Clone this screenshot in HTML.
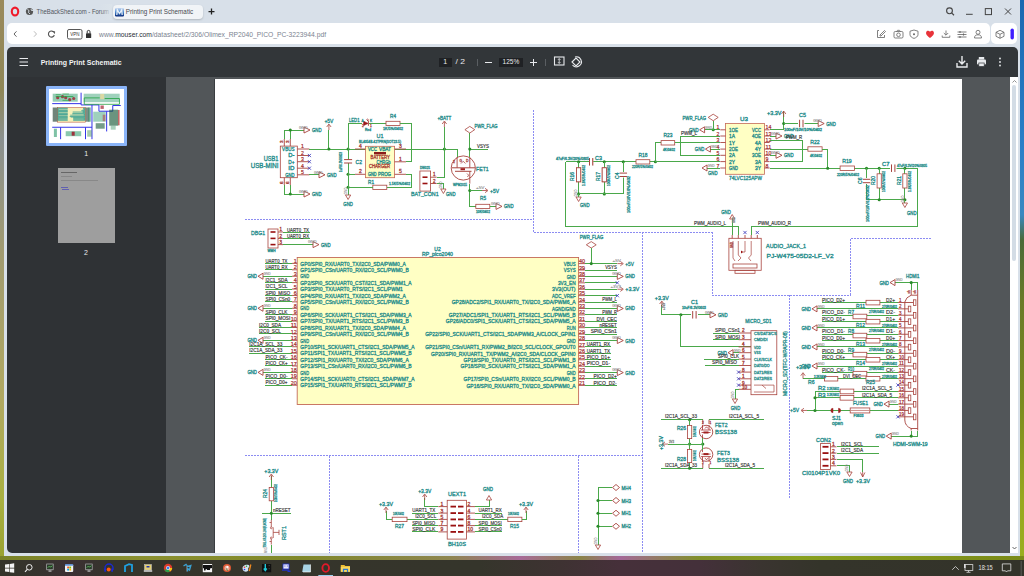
<!DOCTYPE html>
<html><head><meta charset="utf-8">
<style>
*{margin:0;padding:0;box-sizing:border-box}
html,body{width:1024px;height:576px;overflow:hidden;background:#6f7a3a;font-family:"Liberation Sans",sans-serif}
svg{font-family:"Liberation Sans",sans-serif}
.a{position:absolute}
#deskL{left:0;top:0;width:4px;height:560px;background:linear-gradient(180deg,#9a8a5c 0,#8e8656 90px,#8a9090 140px,#a09a70 250px,#b0a860 400px,#a8b040 500px,#98a030 560px)}
#deskR{left:1020px;top:0;width:4px;height:560px;background:linear-gradient(180deg,#1a68b0 0,#2a80c8 150px,#3a88c0 215px,#4a6a38 240px,#6a7a28 300px,#7a8a20 400px,#98a820 500px,#9aae20 560px)}
#deskB{left:0;top:556px;width:1024px;height:4px;background:linear-gradient(90deg,#7a8228 0,#8a9030 150px,#80882a 300px,#8e8650 450px,#a86a98 520px,#8a8448 580px,#a46898 620px,#80902a 700px,#88a020 800px,#7a8a18 1024px)}
#win{left:4px;top:0;width:1016px;height:556px;background:#d8e0e9}
#addr{left:7px;top:23.3px;width:983px;height:21.2px;background:#fff;border-radius:5px}
#ext{left:991px;top:23.3px;width:26px;height:21.2px;background:#fff;border-radius:5px}
#tb{left:7px;top:47px;width:1011px;height:30px;background:#323639;border-radius:5px 5px 0 0}
#side{left:7px;top:77px;width:159px;height:476px;background:#2f3235;border-radius:0 0 0 5px}
#grey{left:166px;top:77px;width:844px;height:476px;background:#525659}
#sb{left:1010px;top:77px;width:8px;height:476px;background:#fff}
#thumb{left:1012px;top:85px;width:4px;height:176px;background:#d3dce5;border-radius:2px}
#page{left:214px;top:79px;width:748px;height:474px;background:#fff;border-left:1px solid #3a3d40}
#task{left:0;top:560px;width:1024px;height:16px;background:linear-gradient(90deg,#34342a 0,#36332e 40px,#3c3034 70px,#35342b 110px,#35352b 480px,#3e3232 560px,#46303a 620px,#44303a 700px,#3a3430 760px,#34342a 820px,#33332a 1024px)}
.t{position:absolute;white-space:nowrap;line-height:1}
#tab{left:113px;top:5px;width:90px;height:14px;background:#f1f4f7;border-radius:4px;box-shadow:0 1px 2px rgba(0,0,0,.18)}
</style></head><body>
<div id="deskL" class="a"></div>
<div id="deskR" class="a"></div>
<div id="deskB" class="a"></div>
<div id="win" class="a"></div>
<!-- tab bar -->
<svg class="a" style="left:0;top:0" width="240" height="24">
  <ellipse cx="15" cy="11.5" rx="3.2" ry="3.9" fill="none" stroke="#f01a2a" stroke-width="2.1"/>
  <circle cx="29.5" cy="11.5" r="3.6" fill="#555"/>
  <path d="M27.5 9.5 l1.5 1 l-0.5 2 l1.5 1.5 M31 9 l0.5 1.5 l1.5 0" stroke="#dbe3ea" stroke-width="0.9" fill="none"/>
</svg>
<svg class="a" style="left:0;top:0" width="240" height="24"><text x="36.6" y="14.2" font-size="7.9" fill="#50555c" textLength="72.4" lengthAdjust="spacingAndGlyphs">TheBackShed.com - Forum</text></svg>
<div class="a" style="left:100px;top:4px;width:12px;height:16px;background:linear-gradient(90deg,rgba(219,227,234,0),#dbe3ea)"></div>
<div id="tab" class="a"></div>
<svg class="a" style="left:115px;top:7.5px" width="9" height="9"><defs><linearGradient id="fg" x1="0" y1="0" x2="0" y2="1"><stop offset="0" stop-color="#c8d8f0"/><stop offset="0.5" stop-color="#4a8ad0"/><stop offset="1" stop-color="#0a2a78"/></linearGradient></defs><rect x="0" y="0" width="9" height="8.4" rx="1.2" fill="url(#fg)"/><path d="M1.8 7 L2.3 1.8 L4.5 5.5 L6.7 1.8 L7.2 7" stroke="#fff" stroke-width="1.3" fill="none" opacity="0.85"/></svg>
<svg class="a" style="left:0;top:0" width="240" height="24"><text x="125.8" y="14" font-size="7.9" fill="#454a50" textLength="67.4" lengthAdjust="spacingAndGlyphs">Printing Print Schematic</text></svg>
<svg class="a" style="left:0;top:0" width="240" height="24"><path d="M208.5 11.6 H214.5 M211.5 8.6 V14.6" stroke="#222" stroke-width="1.3"/></svg>
<svg class="a" style="left:940px;top:0" width="80" height="24">
  <circle cx="9.5" cy="10.8" r="2.9" fill="none" stroke="#444" stroke-width="1.1"/>
  <path d="M11.6 12.9 L14 15.2" stroke="#444" stroke-width="1.2"/>
  <path d="M26 14.3 H32.7" stroke="#444" stroke-width="1"/>
  <rect x="45.3" y="8.6" width="6.2" height="6" fill="none" stroke="#444" stroke-width="1"/>
  <path d="M65 8.5 L71 14.5 M71 8.5 L65 14.5" stroke="#444" stroke-width="1"/>
</svg>
<!-- address bar -->
<div id="addr" class="a"></div>
<div id="ext" class="a"></div>
<svg class="a" style="left:0;top:24px" width="100" height="20">
  <path d="M16.5 7.3 L14 10 L16.5 12.7" stroke="#666" stroke-width="1" fill="none"/>
  <path d="M34 7.3 L36.5 10 L34 12.7" stroke="#bbb" stroke-width="1" fill="none"/>
  <path d="M54 8.5 A3 3 0 1 0 54.3 11" stroke="#555" stroke-width="1.1" fill="none"/>
  <path d="M52.5 7.5 L54.6 7.6 L54.5 9.6" stroke="#555" stroke-width="1" fill="none"/>
  <rect x="67.5" y="5.5" width="14.5" height="9.5" rx="1.5" fill="none" stroke="#444" stroke-width="0.9"/>
  <rect x="86" y="9.2" width="5.2" height="4.8" rx="0.6" fill="#333"/>
  <path d="M87.2 9.4 V7.8 A1.4 1.4 0 0 1 90 7.8 V9.4" stroke="#333" stroke-width="1" fill="none"/>
</svg>
<svg class="a" style="left:0;top:24px" width="100" height="20"><text x="70.2" y="12" font-size="5.6" fill="#333" textLength="9.2" lengthAdjust="spacingAndGlyphs">VPN</text></svg>
<svg class="a" style="left:0;top:24px" width="400" height="20"><text x="99.1" y="12.5" font-size="7.3" fill="#7b8390" textLength="227" lengthAdjust="spacingAndGlyphs">www.<tspan fill="#2a2f36">mouser.com</tspan>/datasheet/2/306/Olimex_RP2040_PICO_PC-3223944.pdf</text></svg>
<svg class="a" style="left:870px;top:24px" width="150" height="20">
  <g stroke="#6a6a6a" stroke-width="0.85" fill="none">
    <path d="M9 6.5 H7.5 V13.5 H14.5 V11"/><path d="M10 11 L14.5 6.5 L15.5 7.5 L11 12 H10Z"/>
    <rect x="24" y="7.5" width="9" height="6.5" rx="1.2"/><circle cx="28.5" cy="10.8" r="1.8"/><path d="M26.5 7.5 L27.5 6.3 H29.5 L30.5 7.5"/>
    <path d="M44 6 L48 7.2 V10.5 C48 12.5 46 13.8 44 14.4 C42 13.8 40 12.5 40 10.5 V7.2Z"/>
    <path d="M76 6.5 V11 M73.8 9 L76 11.2 L78.2 9 M72.2 11.5 V13.3 H79.8 V11.5"/>
    <path d="M87.5 8 H96.5 M87.5 10.5 H96.5 M87.5 13 H96.5"/>
    <circle cx="108" cy="8.3" r="2"/><path d="M104.5 14 C104.5 11.5 106 10.8 108 10.8 C110 10.8 111.5 11.5 111.5 14 Z"/>
    <path d="M130 6.3 L134 8.3 V12.3 L130 14.3 L126 12.3 V8.3Z M126 8.3 L130 10.3 L134 8.3 M130 10.3 V14.3"/>
  </g>
  <circle cx="44" cy="10.2" r="1" fill="#666"/>
  <path d="M90 7 V9 M93.5 9.5 V11.5 M90 12 V14" stroke="#666" stroke-width="1.1"/>
  <path d="M60 14 C56 11 55.8 9.5 56.2 8.2 C56.8 6.6 58.8 6.3 60 7.8 C61.2 6.3 63.2 6.6 63.8 8.2 C64.2 9.5 64 11 60 14Z" fill="#e8333a"/>
  <rect x="140.5" y="4.5" width="3.4" height="11" rx="1.7" fill="#3f1fff"/>
</svg>
<!-- toolbar -->
<div id="tb" class="a"></div>
<svg class="a" style="left:0;top:47px" width="140" height="30">
  <path d="M19.5 11.5 H28 M19.5 15 H28 M19.5 18.5 H28" stroke="#e8eaed" stroke-width="1.2"/>
</svg>
<svg class="a" style="left:0;top:47px" width="200" height="30"><text x="40.7" y="17.5" font-size="7.6" font-weight="bold" fill="#f1f3f4" textLength="81" lengthAdjust="spacingAndGlyphs">Printing Print Schematic</text></svg>
<div class="a" style="left:439px;top:58px;width:13px;height:9px;background:#1f2124"></div>


<div class="a" style="left:477px;top:58.5px;width:1px;height:7px;background:#5a5e62"></div>
<div class="a" style="left:485px;top:62px;width:7px;height:1.2px;background:#e8eaed"></div>
<div class="a" style="left:499px;top:58px;width:24px;height:9px;background:#1f2124"></div>

<div class="a" style="left:529.5px;top:62px;width:7.5px;height:1.2px;background:#e8eaed"></div>
<div class="a" style="left:532.6px;top:58.6px;width:1.2px;height:7.8px;background:#e8eaed"></div>
<div class="a" style="left:544.5px;top:58.5px;width:1px;height:7px;background:#5a5e62"></div>
<svg class="a" style="left:400px;top:47px" width="200" height="30"><text x="43.3" y="17.3" font-size="7" fill="#e8eaed">1</text><text x="55.5" y="17.3" font-size="7" fill="#e8eaed" textLength="9.5" lengthAdjust="spacingAndGlyphs">/ 2</text><text x="102.6" y="17.3" font-size="6.6" fill="#e8eaed" textLength="16.7" lengthAdjust="spacingAndGlyphs">125%</text></svg>
<svg class="a" style="left:550px;top:53px" width="40" height="20">
  <rect x="4.5" y="4" width="9.5" height="8" fill="none" stroke="#e8eaed" stroke-width="1.1"/>
  <path d="M9.2 5.6 V10.4 M8 6.8 L9.2 5.6 L10.4 6.8 M8 9.2 L9.2 10.4 L10.4 9.2" stroke="#e8eaed" stroke-width="0.8" fill="none"/>
  <path d="M22 9 L26 5 L30 9 L26 13Z" fill="none" stroke="#e8eaed" stroke-width="1.1"/>
  <path d="M25 4 A5 5 0 1 1 22.5 12" fill="none" stroke="#e8eaed" stroke-width="1.1"/>
</svg>
<svg class="a" style="left:950px;top:47px" width="60" height="30">
  <path d="M12 9 V17 M8.8 13.8 L12 17 L15.2 13.8 M7 16 V20 H17 V16" stroke="#e8eaed" stroke-width="1.4" fill="none"/>
  <rect x="27" y="12.5" width="9" height="5" rx="1" fill="#e8eaed"/>
  <rect x="28.8" y="10" width="5.4" height="2.5" fill="#e8eaed"/>
  <rect x="28.8" y="16" width="5.4" height="3.5" fill="#e8eaed" stroke="#323639" stroke-width="0.7"/>
  <circle cx="50" cy="11.5" r="0.9" fill="#e8eaed"/><circle cx="50" cy="15" r="0.9" fill="#e8eaed"/><circle cx="50" cy="18.5" r="0.9" fill="#e8eaed"/>
</svg>
<!-- sidebar -->
<div id="side" class="a"></div>
<div class="a" style="left:46px;top:86px;width:81px;height:60px;background:#8ab4f8;border-radius:1px"></div>
<div class="a" style="left:49px;top:89px;width:75px;height:54px;background:#fff"></div>
<svg id="th1" class="a" style="left:49px;top:89px" width="75" height="54"><rect x="8.42" y="18.45" width="28.14" height="14.70" fill="#f6f0b8" opacity="1"/>
<rect x="8.42" y="18.45" width="28.14" height="14.70" fill="none" stroke="#c0604a" stroke-width="0.6"/>
<path d="M8.70 19.16 L18.70 19.16" stroke="#2a9a90" stroke-width="0.7"/>
<path d="M8.70 19.80 L18.70 19.80" stroke="#2a9a90" stroke-width="0.7"/>
<path d="M8.70 20.44 L9.70 20.44" stroke="#2a9a90" stroke-width="0.7"/>
<path d="M8.70 21.08 L18.70 21.08" stroke="#2a9a90" stroke-width="0.7"/>
<path d="M8.70 21.72 L18.70 21.72" stroke="#2a9a90" stroke-width="0.7"/>
<path d="M8.70 22.36 L18.70 22.36" stroke="#2a9a90" stroke-width="0.7"/>
<path d="M8.70 22.99 L18.70 22.99" stroke="#2a9a90" stroke-width="0.7"/>
<path d="M8.70 23.63 L9.70 23.63" stroke="#2a9a90" stroke-width="0.7"/>
<path d="M8.70 24.27 L18.70 24.27" stroke="#2a9a90" stroke-width="0.7"/>
<path d="M8.70 24.91 L18.70 24.91" stroke="#2a9a90" stroke-width="0.7"/>
<path d="M8.70 25.55 L18.70 25.55" stroke="#2a9a90" stroke-width="0.7"/>
<path d="M8.70 26.19 L18.70 26.19" stroke="#2a9a90" stroke-width="0.7"/>
<path d="M8.70 26.83 L9.70 26.83" stroke="#2a9a90" stroke-width="0.7"/>
<path d="M8.70 27.47 L18.70 27.47" stroke="#2a9a90" stroke-width="0.7"/>
<path d="M8.70 28.11 L18.70 28.11" stroke="#2a9a90" stroke-width="0.7"/>
<path d="M8.70 28.75 L18.70 28.75" stroke="#2a9a90" stroke-width="0.7"/>
<path d="M8.70 29.38 L18.70 29.38" stroke="#2a9a90" stroke-width="0.7"/>
<path d="M8.70 30.02 L9.70 30.02" stroke="#2a9a90" stroke-width="0.7"/>
<path d="M8.70 30.66 L18.70 30.66" stroke="#2a9a90" stroke-width="0.7"/>
<path d="M8.70 31.30 L18.70 31.30" stroke="#2a9a90" stroke-width="0.7"/>
<path d="M34.20 19.16 L36.20 19.16" stroke="#2a9a90" stroke-width="0.7"/>
<path d="M34.00 19.80 L36.20 19.80" stroke="#2a9a90" stroke-width="0.7"/>
<path d="M34.70 20.44 L36.20 20.44" stroke="#2a9a90" stroke-width="0.7"/>
<path d="M33.40 21.08 L36.20 21.08" stroke="#2a9a90" stroke-width="0.7"/>
<path d="M32.20 21.72 L36.20 21.72" stroke="#2a9a90" stroke-width="0.7"/>
<path d="M33.70 22.36 L36.20 22.36" stroke="#2a9a90" stroke-width="0.7"/>
<path d="M23.70 22.99 L36.20 22.99" stroke="#2a9a90" stroke-width="0.7"/>
<path d="M33.70 23.63 L36.20 23.63" stroke="#2a9a90" stroke-width="0.7"/>
<path d="M23.70 24.27 L36.20 24.27" stroke="#2a9a90" stroke-width="0.7"/>
<path d="M23.20 24.91 L36.20 24.91" stroke="#2a9a90" stroke-width="0.7"/>
<path d="M34.70 25.55 L36.20 25.55" stroke="#2a9a90" stroke-width="0.7"/>
<path d="M21.20 26.19 L36.20 26.19" stroke="#2a9a90" stroke-width="0.7"/>
<path d="M34.70 26.83 L36.20 26.83" stroke="#2a9a90" stroke-width="0.7"/>
<path d="M20.70 27.47 L36.20 27.47" stroke="#2a9a90" stroke-width="0.7"/>
<path d="M21.70 28.11 L36.20 28.11" stroke="#2a9a90" stroke-width="0.7"/>
<path d="M24.20 28.75 L36.20 28.75" stroke="#2a9a90" stroke-width="0.7"/>
<path d="M24.20 29.38 L36.20 29.38" stroke="#2a9a90" stroke-width="0.7"/>
<path d="M34.70 30.02 L36.20 30.02" stroke="#2a9a90" stroke-width="0.7"/>
<path d="M24.20 30.66 L36.20 30.66" stroke="#2a9a90" stroke-width="0.7"/>
<path d="M24.20 31.30 L36.20 31.30" stroke="#2a9a90" stroke-width="0.7"/>
<rect x="3.70" y="18.50" width="4.70" height="14.20" fill="#103020" opacity="0.6"/>
<rect x="36.70" y="18.50" width="3.80" height="14.20" fill="#103020" opacity="0.55"/>
<rect x="39.30" y="18.50" width="2.60" height="14.20" fill="#1a8a60" opacity="0.5"/>
<path d="M3.20 14.63 L32.08 14.63" stroke="#3434e8" stroke-width="1.0"/>
<path d="M32.08 3.70 L32.08 15.93" stroke="#3434e8" stroke-width="1.0"/>
<path d="M32.08 15.93 L49.93 15.93" stroke="#3434e8" stroke-width="1.0"/>
<path d="M42.97 15.93 L42.97 50.20" stroke="#3434e8" stroke-width="1.0"/>
<path d="M49.93 15.93 L49.93 22.23" stroke="#3434e8" stroke-width="1.0"/>
<path d="M49.93 22.23 L63.75 22.23" stroke="#3434e8" stroke-width="1.0"/>
<path d="M63.75 22.23 L63.75 16.52" stroke="#3434e8" stroke-width="1.0"/>
<path d="M63.75 16.52 L71.80 16.52" stroke="#3434e8" stroke-width="1.0"/>
<path d="M57.66 22.23 L57.66 42.45" stroke="#3434e8" stroke-width="1.0"/>
<path d="M3.20 38.25 L42.97 38.25" stroke="#3434e8" stroke-width="1.0"/>
<path d="M11.60 38.25 L11.60 50.20" stroke="#3434e8" stroke-width="1.0"/>
<path d="M36.50 38.25 L36.50 50.20" stroke="#3434e8" stroke-width="1.0"/>
<rect x="3.70" y="4.70" width="25.00" height="8.00" fill="#2a9a6a" opacity="0.5"/>
<circle cx="8.70" cy="8.70" r="1.6" fill="#a02030" opacity="0.8"/>
<circle cx="16.70" cy="8.70" r="1.6" fill="#a02030" opacity="0.8"/>
<circle cx="24.70" cy="9.50" r="1.6" fill="#a02030" opacity="0.8"/>
<circle cx="13.50" cy="7.70" r="1.6" fill="#a02030" opacity="0.8"/>
<circle cx="20.70" cy="10.70" r="1.6" fill="#a02030" opacity="0.8"/>
<path d="M6.70 7.60 L24.30 7.60" stroke="#20a040" stroke-width="0.8"/>
<path d="M6.70 5.70 L11.70 5.70" stroke="#20a040" stroke-width="0.6"/>
<path d="M13.50 5.00 L19.90 5.00" stroke="#20a040" stroke-width="0.6"/>
<path d="M13.50 11.40 L19.90 11.40" stroke="#20a040" stroke-width="0.6"/>
<rect x="34.70" y="4.70" width="36.00" height="8.50" fill="#2a9a6a" opacity="0.45"/>
<path d="M35.20 8.88 L50.70 8.88" stroke="#20a040" stroke-width="0.8"/>
<path d="M55.60 9.52 L70.40 9.52" stroke="#20a040" stroke-width="0.8"/>
<path d="M35.26 15.30 L70.46 15.30" stroke="#20a040" stroke-width="0.8"/>
<path d="M35.26 8.88 L35.26 15.30" stroke="#20a040" stroke-width="0.8"/>
<path d="M70.46 9.52 L70.46 15.30" stroke="#20a040" stroke-width="0.8"/>
<rect x="51.20" y="5.00" width="4.00" height="5.20" fill="#e0d8a0" opacity="0.9"/>
<rect x="51.50" y="16.50" width="3.30" height="3.40" fill="#a02030" opacity="0.7"/>
<rect x="44.20" y="22.70" width="12.50" height="10.00" fill="#2a9a6a" opacity="0.45"/>
<rect x="46.70" y="34.20" width="9.00" height="5.50" fill="#1a5a3a" opacity="0.6"/>
<rect x="53.70" y="25.70" width="2.70" height="6.50" fill="#b03040" opacity="0.5"/>
<rect x="60.20" y="20.70" width="9.00" height="16.00" fill="#1a5a3a" opacity="0.65"/>
<rect x="69.20" y="21.00" width="1.30" height="15.30" fill="#b02020" opacity="0.8"/>
<rect x="61.70" y="36.70" width="5.00" height="4.00" fill="#2a8a5a" opacity="0.4"/>
<rect x="4.90" y="39.70" width="3.00" height="8.30" fill="#2a9a6a" opacity="0.6"/>
<rect x="16.70" y="42.20" width="15.50" height="5.00" fill="#2a9a6a" opacity="0.55"/>
<rect x="22.70" y="42.70" width="3.00" height="4.00" fill="#a02030" opacity="0.9"/>
<rect x="38.20" y="41.20" width="4.50" height="6.50" fill="#3a8a4a" opacity="0.45"/></svg>
<svg class="a" style="left:0;top:140px" width="160" height="120"><text x="84.3" y="15.5" font-size="7" fill="#e8eaed">1</text><text x="84" y="115.3" font-size="7" fill="#e8eaed">2</text></svg>
<div class="a" style="left:57.5px;top:168px;width:57.5px;height:75px;background:#9e9e9e"></div>
<div class="a" style="left:61px;top:172px;width:16px;height:1.2px;background:#666"></div>
<div class="a" style="left:61px;top:175.8px;width:11px;height:0.8px;background:#888"></div>
<div class="a" style="left:61px;top:180.2px;width:37px;height:0.8px;background:#888"></div>
<div class="a" style="left:61px;top:186.5px;width:7px;height:0.9px;background:#6060b0"></div>
<div class="a" style="left:62px;top:188.5px;width:7px;height:0.9px;background:#6060b0"></div>

<!-- content -->
<div id="grey" class="a"></div>
<div id="sb" class="a"></div>
<div id="thumb" class="a"></div>
<svg class="a" style="left:1010px;top:77px" width="10" height="10"><path d="M2.5 5.5 L4.5 3.5 L6.5 5.5" stroke="#777" stroke-width="0.8" fill="none"/></svg>
<svg class="a" style="left:1010px;top:543px" width="10" height="10"><path d="M2.5 4 L4.5 6 L6.5 4" stroke="#555" stroke-width="0.9" fill="none"/></svg>
<div id="page" class="a"></div>
<svg id="sch" class="a" style="left:0;top:0" width="1024" height="576" viewBox="0 0 1024 576">
<g font-family="Liberation Sans">
<path d="M245 219.3 L533.8 219.3" stroke="#8c8cf2" stroke-width="1" stroke-dasharray="2 1" fill="none" shape-rendering="crispEdges"/>
<path d="M533.8 110 L533.8 232.3" stroke="#8c8cf2" stroke-width="1" stroke-dasharray="2 1" fill="none" shape-rendering="crispEdges"/>
<path d="M533.8 232.3 L712.3 232.3" stroke="#8c8cf2" stroke-width="1" stroke-dasharray="2 1" fill="none" shape-rendering="crispEdges"/>
<path d="M642.7 232.3 L642.7 553" stroke="#8c8cf2" stroke-width="1" stroke-dasharray="2 1" fill="none" shape-rendering="crispEdges"/>
<path d="M712.3 232.3 L712.3 295.3" stroke="#8c8cf2" stroke-width="1" stroke-dasharray="2 1" fill="none" shape-rendering="crispEdges"/>
<path d="M712.3 295.3 L850.5 295.3" stroke="#8c8cf2" stroke-width="1" stroke-dasharray="2 1" fill="none" shape-rendering="crispEdges"/>
<path d="M850.5 295.3 L850.5 238.2" stroke="#8c8cf2" stroke-width="1" stroke-dasharray="2 1" fill="none" shape-rendering="crispEdges"/>
<path d="M850.5 238.2 L931 238.2" stroke="#8c8cf2" stroke-width="1" stroke-dasharray="2 1" fill="none" shape-rendering="crispEdges"/>
<path d="M789.6 295.3 L789.6 497.5" stroke="#8c8cf2" stroke-width="1" stroke-dasharray="2 1" fill="none" shape-rendering="crispEdges"/>
<path d="M245 455.5 L642.7 455.5" stroke="#8c8cf2" stroke-width="1" stroke-dasharray="2 1" fill="none" shape-rendering="crispEdges"/>
<path d="M329 455.5 L329 553" stroke="#8c8cf2" stroke-width="1" stroke-dasharray="2 1" fill="none" shape-rendering="crispEdges"/>
<path d="M578 455.5 L578 553" stroke="#8c8cf2" stroke-width="1" stroke-dasharray="2 1" fill="none" shape-rendering="crispEdges"/>
<rect x="268" y="229" width="10" height="19" stroke="#a8443e" stroke-width="0.8" fill="none"/>
<rect x="270.5" y="231.2" width="5" height="1.6" fill="#9a1010"/>
<path d="M278 232 L283 232" stroke="#a8443e" stroke-width="0.9" fill="none"/>
<text x="279.5" y="231.4" font-size="4.6" fill="#a8443e" stroke="#a8443e" stroke-width="0.32" textLength="2.5" lengthAdjust="spacingAndGlyphs">1</text>
<path d="M283 232 L310 232" stroke="#4aa84a" stroke-width="1" fill="none" shape-rendering="crispEdges"/>
<rect x="270.5" y="237.6" width="5" height="1.6" fill="#9a1010"/>
<path d="M278 238.4 L283 238.4" stroke="#a8443e" stroke-width="0.9" fill="none"/>
<text x="279.5" y="237.8" font-size="4.6" fill="#a8443e" stroke="#a8443e" stroke-width="0.32" textLength="2.5" lengthAdjust="spacingAndGlyphs">2</text>
<path d="M283 238.4 L310 238.4" stroke="#4aa84a" stroke-width="1" fill="none" shape-rendering="crispEdges"/>
<rect x="270.5" y="243.8" width="5" height="1.6" fill="#9a1010"/>
<path d="M278 244.6 L283 244.6" stroke="#a8443e" stroke-width="0.9" fill="none"/>
<text x="279.5" y="244" font-size="4.6" fill="#a8443e" stroke="#a8443e" stroke-width="0.32" textLength="2.5" lengthAdjust="spacingAndGlyphs">3</text>
<path d="M283 244.6 L313 244.6" stroke="#4aa84a" stroke-width="1" fill="none" shape-rendering="crispEdges"/>
<text x="251" y="234.8" font-size="6.2" fill="#1f8c8a" stroke="#1f8c8a" stroke-width="0.32" textLength="14" lengthAdjust="spacingAndGlyphs">DBG1</text>
<text x="267.5" y="251.5" font-size="3.2" fill="#1f8c8a" stroke="#1f8c8a" stroke-width="0.28" textLength="8" lengthAdjust="spacingAndGlyphs">WMH</text>
<text x="287" y="231.5" font-size="4.8" fill="#3a3a3a" stroke="#3a3a3a" stroke-width="0.18" textLength="22" lengthAdjust="spacingAndGlyphs">UART0_TX</text>
<text x="287" y="237.9" font-size="4.8" fill="#3a3a3a" stroke="#3a3a3a" stroke-width="0.18" textLength="22" lengthAdjust="spacingAndGlyphs">UART0_RX</text>
<path d="M313 241.6 L319 244.6 L313 247.6Z" stroke="#a8443e" stroke-width="0.9" fill="none"/>
<text x="308" y="243.4" font-size="4.4" fill="#8a8a8a" stroke="#8a8a8a" stroke-width="0.12" textLength="8.5" lengthAdjust="spacingAndGlyphs">GND</text>
<text x="321" y="246.6" font-size="5.2" fill="#1f8c8a" stroke="#1f8c8a" stroke-width="0.32" textLength="9.6" lengthAdjust="spacingAndGlyphs">GND</text>
<rect x="297.2" y="257.5" width="281.4" height="147" stroke="#c46a58" stroke-width="0.9" fill="#ffffc4"/>
<text x="437.5" y="251" font-size="5.2" fill="#1f8c8a" stroke="#1f8c8a" stroke-width="0.32" text-anchor="middle" textLength="6.5" lengthAdjust="spacingAndGlyphs">U2</text>
<text x="437.5" y="256" font-size="5.2" fill="#1f8c8a" stroke="#1f8c8a" stroke-width="0.32" text-anchor="middle" textLength="31" lengthAdjust="spacingAndGlyphs">RP_pico2040</text>
<path d="M292 263.4 L297.2 263.4" stroke="#a8443e" stroke-width="0.9" fill="none"/>
<text x="296.8" y="263" font-size="5.8" fill="#a02828" stroke="#a02828" stroke-width="0.2" text-anchor="end" textLength="3" lengthAdjust="spacingAndGlyphs">1</text>
<text x="300.3" y="265.6" font-size="5.4" fill="#1f8c8a" stroke="#1f8c8a" stroke-width="0.32" textLength="105.48" lengthAdjust="spacingAndGlyphs">GP0/SPI0_RX/UART0_TX/I2C0_SDA/PWM0_A</text>
<path d="M265 263.4 L292 263.4" stroke="#4aa84a" stroke-width="1" fill="none" shape-rendering="crispEdges"/>
<text x="265.5" y="262.7" font-size="4.9" fill="#3a3a3a" stroke="#3a3a3a" stroke-width="0.18" textLength="22" lengthAdjust="spacingAndGlyphs">UART0_TX</text>
<path d="M292 269.81 L297.2 269.81" stroke="#a8443e" stroke-width="0.9" fill="none"/>
<text x="296.8" y="269.41" font-size="5.8" fill="#a02828" stroke="#a02828" stroke-width="0.2" text-anchor="end" textLength="3" lengthAdjust="spacingAndGlyphs">2</text>
<text x="300.3" y="272.01" font-size="5.4" fill="#1f8c8a" stroke="#1f8c8a" stroke-width="0.32" textLength="108.41" lengthAdjust="spacingAndGlyphs">GP1/SPI0_CSn/UART0_RX/I2C0_SCL/PWM0_B</text>
<path d="M265 269.81 L292 269.81" stroke="#4aa84a" stroke-width="1" fill="none" shape-rendering="crispEdges"/>
<text x="265.5" y="269.11" font-size="4.9" fill="#3a3a3a" stroke="#3a3a3a" stroke-width="0.18" textLength="22" lengthAdjust="spacingAndGlyphs">UART0_RX</text>
<path d="M292 276.22 L297.2 276.22" stroke="#a8443e" stroke-width="0.9" fill="none"/>
<text x="296.8" y="275.82" font-size="5.8" fill="#a02828" stroke="#a02828" stroke-width="0.2" text-anchor="end" textLength="3" lengthAdjust="spacingAndGlyphs">3</text>
<text x="300.3" y="278.42" font-size="5.4" fill="#1f8c8a" stroke="#1f8c8a" stroke-width="0.32" textLength="8.79" lengthAdjust="spacingAndGlyphs">GND</text>
<path d="M263 276.22 L292 276.22" stroke="#4aa84a" stroke-width="1" fill="none" shape-rendering="crispEdges"/>
<path d="M263 273.22 L258 276.22 L263 279.22Z" stroke="#a8443e" stroke-width="0.9" fill="none"/>
<text x="263.5" y="275.02" font-size="4.4" fill="#8a8a8a" stroke="#8a8a8a" stroke-width="0.12" textLength="7" lengthAdjust="spacingAndGlyphs">GND</text>
<text x="257" y="278.22" font-size="5.2" fill="#1f8c8a" stroke="#1f8c8a" stroke-width="0.32" text-anchor="end" textLength="9.6" lengthAdjust="spacingAndGlyphs">GND</text>
<path d="M292 282.63 L297.2 282.63" stroke="#a8443e" stroke-width="0.9" fill="none"/>
<text x="296.8" y="282.23" font-size="5.8" fill="#a02828" stroke="#a02828" stroke-width="0.2" text-anchor="end" textLength="3" lengthAdjust="spacingAndGlyphs">4</text>
<text x="300.3" y="284.83" font-size="5.4" fill="#1f8c8a" stroke="#1f8c8a" stroke-width="0.32" textLength="111.34" lengthAdjust="spacingAndGlyphs">GP2/SPI0_SCK/UART0_CST/I2C1_SDA/PWM1_A</text>
<path d="M265 282.63 L292 282.63" stroke="#4aa84a" stroke-width="1" fill="none" shape-rendering="crispEdges"/>
<text x="265.5" y="281.93" font-size="4.9" fill="#3a3a3a" stroke="#3a3a3a" stroke-width="0.18" textLength="22" lengthAdjust="spacingAndGlyphs">I2C1_SDA</text>
<path d="M292 289.04 L297.2 289.04" stroke="#a8443e" stroke-width="0.9" fill="none"/>
<text x="296.8" y="288.64" font-size="5.8" fill="#a02828" stroke="#a02828" stroke-width="0.2" text-anchor="end" textLength="3" lengthAdjust="spacingAndGlyphs">5</text>
<text x="300.3" y="291.24" font-size="5.4" fill="#1f8c8a" stroke="#1f8c8a" stroke-width="0.32" textLength="102.55" lengthAdjust="spacingAndGlyphs">GP3/SPI0_TX/UART0_RTS/I2C1_SCL/PWM1</text>
<path d="M265 289.04 L292 289.04" stroke="#4aa84a" stroke-width="1" fill="none" shape-rendering="crispEdges"/>
<text x="265.5" y="288.34" font-size="4.9" fill="#3a3a3a" stroke="#3a3a3a" stroke-width="0.18" textLength="22" lengthAdjust="spacingAndGlyphs">I2C1_SCL</text>
<path d="M292 295.45 L297.2 295.45" stroke="#a8443e" stroke-width="0.9" fill="none"/>
<text x="296.8" y="295.05" font-size="5.8" fill="#a02828" stroke="#a02828" stroke-width="0.2" text-anchor="end" textLength="3" lengthAdjust="spacingAndGlyphs">6</text>
<text x="300.3" y="297.65" font-size="5.4" fill="#1f8c8a" stroke="#1f8c8a" stroke-width="0.32" textLength="105.48" lengthAdjust="spacingAndGlyphs">GP4/SPI0_RX/UART1_TX/I2C0_SDA/PWM2_A</text>
<path d="M265 295.45 L292 295.45" stroke="#4aa84a" stroke-width="1" fill="none" shape-rendering="crispEdges"/>
<text x="265.5" y="294.75" font-size="4.9" fill="#3a3a3a" stroke="#3a3a3a" stroke-width="0.18" textLength="24.75" lengthAdjust="spacingAndGlyphs">SPI0_MISO</text>
<path d="M292 301.86 L297.2 301.86" stroke="#a8443e" stroke-width="0.9" fill="none"/>
<text x="296.8" y="301.46" font-size="5.8" fill="#a02828" stroke="#a02828" stroke-width="0.2" text-anchor="end" textLength="3" lengthAdjust="spacingAndGlyphs">7</text>
<text x="300.3" y="304.06" font-size="5.4" fill="#1f8c8a" stroke="#1f8c8a" stroke-width="0.32" textLength="108.41" lengthAdjust="spacingAndGlyphs">GP5/SPI0_CSn/UART1_RX/I2C0_SCL/PWM2_B</text>
<path d="M265 301.86 L292 301.86" stroke="#4aa84a" stroke-width="1" fill="none" shape-rendering="crispEdges"/>
<text x="265.5" y="301.16" font-size="4.9" fill="#3a3a3a" stroke="#3a3a3a" stroke-width="0.18" textLength="24.75" lengthAdjust="spacingAndGlyphs">SPI0_CSn0</text>
<path d="M292 308.27 L297.2 308.27" stroke="#a8443e" stroke-width="0.9" fill="none"/>
<text x="296.8" y="307.87" font-size="5.8" fill="#a02828" stroke="#a02828" stroke-width="0.2" text-anchor="end" textLength="3" lengthAdjust="spacingAndGlyphs">8</text>
<text x="300.3" y="310.47" font-size="5.4" fill="#1f8c8a" stroke="#1f8c8a" stroke-width="0.32" textLength="8.79" lengthAdjust="spacingAndGlyphs">GND</text>
<path d="M263 308.27 L292 308.27" stroke="#4aa84a" stroke-width="1" fill="none" shape-rendering="crispEdges"/>
<path d="M263 305.27 L258 308.27 L263 311.27Z" stroke="#a8443e" stroke-width="0.9" fill="none"/>
<text x="263.5" y="307.07" font-size="4.4" fill="#8a8a8a" stroke="#8a8a8a" stroke-width="0.12" textLength="7" lengthAdjust="spacingAndGlyphs">GND</text>
<text x="257" y="310.27" font-size="5.2" fill="#1f8c8a" stroke="#1f8c8a" stroke-width="0.32" text-anchor="end" textLength="9.6" lengthAdjust="spacingAndGlyphs">GND</text>
<path d="M292 314.68 L297.2 314.68" stroke="#a8443e" stroke-width="0.9" fill="none"/>
<text x="296.8" y="314.28" font-size="5.8" fill="#a02828" stroke="#a02828" stroke-width="0.2" text-anchor="end" textLength="3" lengthAdjust="spacingAndGlyphs">9</text>
<text x="300.3" y="316.88" font-size="5.4" fill="#1f8c8a" stroke="#1f8c8a" stroke-width="0.32" textLength="111.34" lengthAdjust="spacingAndGlyphs">GP6/SPI0_SCK/UART1_CTS/I2C1_SDA/PWM3_A</text>
<path d="M265 314.68 L292 314.68" stroke="#4aa84a" stroke-width="1" fill="none" shape-rendering="crispEdges"/>
<text x="265.5" y="313.98" font-size="4.9" fill="#3a3a3a" stroke="#3a3a3a" stroke-width="0.18" textLength="22" lengthAdjust="spacingAndGlyphs">SPI0_CLK</text>
<path d="M292 321.09 L297.2 321.09" stroke="#a8443e" stroke-width="0.9" fill="none"/>
<text x="296.8" y="320.69" font-size="5.8" fill="#a02828" stroke="#a02828" stroke-width="0.2" text-anchor="end" textLength="6" lengthAdjust="spacingAndGlyphs">10</text>
<text x="300.3" y="323.29" font-size="5.4" fill="#1f8c8a" stroke="#1f8c8a" stroke-width="0.32" textLength="108.41" lengthAdjust="spacingAndGlyphs">GP7/SPI0_TX/UART1_RTS/I2C1_SCL/PWM3_B</text>
<path d="M265 321.09 L292 321.09" stroke="#4aa84a" stroke-width="1" fill="none" shape-rendering="crispEdges"/>
<text x="265.5" y="320.39" font-size="4.9" fill="#3a3a3a" stroke="#3a3a3a" stroke-width="0.18" textLength="24.75" lengthAdjust="spacingAndGlyphs">SPI0_MOSI</text>
<path d="M292 327.5 L297.2 327.5" stroke="#a8443e" stroke-width="0.9" fill="none"/>
<text x="296.8" y="327.1" font-size="5.8" fill="#a02828" stroke="#a02828" stroke-width="0.2" text-anchor="end" textLength="6" lengthAdjust="spacingAndGlyphs">11</text>
<text x="300.3" y="329.7" font-size="5.4" fill="#1f8c8a" stroke="#1f8c8a" stroke-width="0.32" textLength="105.48" lengthAdjust="spacingAndGlyphs">GP8/SPI1_RX/UART1_TX/I2C0_SDA/PWM4_A</text>
<path d="M258.5 327.5 L292 327.5" stroke="#4aa84a" stroke-width="1" fill="none" shape-rendering="crispEdges"/>
<text x="259" y="326.8" font-size="4.9" fill="#3a3a3a" stroke="#3a3a3a" stroke-width="0.18" textLength="22" lengthAdjust="spacingAndGlyphs">I2C0_SDA</text>
<path d="M292 333.91 L297.2 333.91" stroke="#a8443e" stroke-width="0.9" fill="none"/>
<text x="296.8" y="333.51" font-size="5.8" fill="#a02828" stroke="#a02828" stroke-width="0.2" text-anchor="end" textLength="6" lengthAdjust="spacingAndGlyphs">12</text>
<text x="300.3" y="336.11" font-size="5.4" fill="#1f8c8a" stroke="#1f8c8a" stroke-width="0.32" textLength="108.41" lengthAdjust="spacingAndGlyphs">GP9/SPI1_CSn/UART1_RX/I2C0_SCL/PWM4_B</text>
<path d="M258.5 333.91 L292 333.91" stroke="#4aa84a" stroke-width="1" fill="none" shape-rendering="crispEdges"/>
<text x="259" y="333.21" font-size="4.9" fill="#3a3a3a" stroke="#3a3a3a" stroke-width="0.18" textLength="22" lengthAdjust="spacingAndGlyphs">I2C0_SCL</text>
<path d="M292 340.32 L297.2 340.32" stroke="#a8443e" stroke-width="0.9" fill="none"/>
<text x="296.8" y="339.92" font-size="5.8" fill="#a02828" stroke="#a02828" stroke-width="0.2" text-anchor="end" textLength="6" lengthAdjust="spacingAndGlyphs">13</text>
<text x="300.3" y="342.52" font-size="5.4" fill="#1f8c8a" stroke="#1f8c8a" stroke-width="0.32" textLength="8.79" lengthAdjust="spacingAndGlyphs">GND</text>
<path d="M263 340.32 L292 340.32" stroke="#4aa84a" stroke-width="1" fill="none" shape-rendering="crispEdges"/>
<path d="M263 337.32 L258 340.32 L263 343.32Z" stroke="#a8443e" stroke-width="0.9" fill="none"/>
<text x="263.5" y="339.12" font-size="4.4" fill="#8a8a8a" stroke="#8a8a8a" stroke-width="0.12" textLength="7" lengthAdjust="spacingAndGlyphs">GND</text>
<text x="257" y="342.32" font-size="5.2" fill="#1f8c8a" stroke="#1f8c8a" stroke-width="0.32" text-anchor="end" textLength="9.6" lengthAdjust="spacingAndGlyphs">GND</text>
<path d="M292 346.73 L297.2 346.73" stroke="#a8443e" stroke-width="0.9" fill="none"/>
<text x="296.8" y="346.33" font-size="5.8" fill="#a02828" stroke="#a02828" stroke-width="0.2" text-anchor="end" textLength="6" lengthAdjust="spacingAndGlyphs">14</text>
<text x="300.3" y="348.93" font-size="5.4" fill="#1f8c8a" stroke="#1f8c8a" stroke-width="0.32" textLength="114.27" lengthAdjust="spacingAndGlyphs">GP10/SPI1_SCK/UART1_CTS/I2C1_SDA/PWM5_A</text>
<path d="M248.8 346.73 L292 346.73" stroke="#4aa84a" stroke-width="1" fill="none" shape-rendering="crispEdges"/>
<text x="249.3" y="346.03" font-size="4.9" fill="#3a3a3a" stroke="#3a3a3a" stroke-width="0.18" textLength="33" lengthAdjust="spacingAndGlyphs">I2C1A_SCL_33</text>
<path d="M292 353.14 L297.2 353.14" stroke="#a8443e" stroke-width="0.9" fill="none"/>
<text x="296.8" y="352.74" font-size="5.8" fill="#a02828" stroke="#a02828" stroke-width="0.2" text-anchor="end" textLength="6" lengthAdjust="spacingAndGlyphs">15</text>
<text x="300.3" y="355.34" font-size="5.4" fill="#1f8c8a" stroke="#1f8c8a" stroke-width="0.32" textLength="111.34" lengthAdjust="spacingAndGlyphs">GP11/SPI1_TX/UART1_RTS/I2C1_SCL/PWM5_B</text>
<path d="M248.8 353.14 L292 353.14" stroke="#4aa84a" stroke-width="1" fill="none" shape-rendering="crispEdges"/>
<text x="249.3" y="352.44" font-size="4.9" fill="#3a3a3a" stroke="#3a3a3a" stroke-width="0.18" textLength="33" lengthAdjust="spacingAndGlyphs">I2C1A_SDA_33</text>
<path d="M292 359.55 L297.2 359.55" stroke="#a8443e" stroke-width="0.9" fill="none"/>
<text x="296.8" y="359.15" font-size="5.8" fill="#a02828" stroke="#a02828" stroke-width="0.2" text-anchor="end" textLength="6" lengthAdjust="spacingAndGlyphs">16</text>
<text x="300.3" y="361.75" font-size="5.4" fill="#1f8c8a" stroke="#1f8c8a" stroke-width="0.32" textLength="108.41" lengthAdjust="spacingAndGlyphs">GP12/SPI1_RX/UART0_TX/I2C0_SDA/PWM6_A</text>
<path d="M265 359.55 L292 359.55" stroke="#4aa84a" stroke-width="1" fill="none" shape-rendering="crispEdges"/>
<text x="265.5" y="358.85" font-size="4.9" fill="#3a3a3a" stroke="#3a3a3a" stroke-width="0.18" textLength="22" lengthAdjust="spacingAndGlyphs">PICO_CK-</text>
<path d="M292 365.96 L297.2 365.96" stroke="#a8443e" stroke-width="0.9" fill="none"/>
<text x="296.8" y="365.56" font-size="5.8" fill="#a02828" stroke="#a02828" stroke-width="0.2" text-anchor="end" textLength="6" lengthAdjust="spacingAndGlyphs">17</text>
<text x="300.3" y="368.16" font-size="5.4" fill="#1f8c8a" stroke="#1f8c8a" stroke-width="0.32" textLength="111.34" lengthAdjust="spacingAndGlyphs">GP13/SPI1_CSn/UART0_RX/I2C0_SCL/PWM6_B</text>
<path d="M265 365.96 L292 365.96" stroke="#4aa84a" stroke-width="1" fill="none" shape-rendering="crispEdges"/>
<text x="265.5" y="365.26" font-size="4.9" fill="#3a3a3a" stroke="#3a3a3a" stroke-width="0.18" textLength="22" lengthAdjust="spacingAndGlyphs">PICO_CK+</text>
<path d="M292 372.37 L297.2 372.37" stroke="#a8443e" stroke-width="0.9" fill="none"/>
<text x="296.8" y="371.97" font-size="5.8" fill="#a02828" stroke="#a02828" stroke-width="0.2" text-anchor="end" textLength="6" lengthAdjust="spacingAndGlyphs">18</text>
<text x="300.3" y="374.57" font-size="5.4" fill="#1f8c8a" stroke="#1f8c8a" stroke-width="0.32" textLength="8.79" lengthAdjust="spacingAndGlyphs">GND</text>
<path d="M263 372.37 L292 372.37" stroke="#4aa84a" stroke-width="1" fill="none" shape-rendering="crispEdges"/>
<path d="M263 369.37 L258 372.37 L263 375.37Z" stroke="#a8443e" stroke-width="0.9" fill="none"/>
<text x="263.5" y="371.17" font-size="4.4" fill="#8a8a8a" stroke="#8a8a8a" stroke-width="0.12" textLength="7" lengthAdjust="spacingAndGlyphs">GND</text>
<text x="257" y="374.37" font-size="5.2" fill="#1f8c8a" stroke="#1f8c8a" stroke-width="0.32" text-anchor="end" textLength="9.6" lengthAdjust="spacingAndGlyphs">GND</text>
<path d="M292 378.78 L297.2 378.78" stroke="#a8443e" stroke-width="0.9" fill="none"/>
<text x="296.8" y="378.38" font-size="5.8" fill="#a02828" stroke="#a02828" stroke-width="0.2" text-anchor="end" textLength="6" lengthAdjust="spacingAndGlyphs">19</text>
<text x="300.3" y="380.98" font-size="5.4" fill="#1f8c8a" stroke="#1f8c8a" stroke-width="0.32" textLength="114.27" lengthAdjust="spacingAndGlyphs">GP14/SPI1_SCK/UART0_CTS/I2C1_SDA/PWM7_A</text>
<path d="M265 378.78 L292 378.78" stroke="#4aa84a" stroke-width="1" fill="none" shape-rendering="crispEdges"/>
<text x="265.5" y="378.08" font-size="4.9" fill="#3a3a3a" stroke="#3a3a3a" stroke-width="0.18" textLength="22" lengthAdjust="spacingAndGlyphs">PICO_D0-</text>
<path d="M292 385.19 L297.2 385.19" stroke="#a8443e" stroke-width="0.9" fill="none"/>
<text x="296.8" y="384.79" font-size="5.8" fill="#a02828" stroke="#a02828" stroke-width="0.2" text-anchor="end" textLength="6" lengthAdjust="spacingAndGlyphs">20</text>
<text x="300.3" y="387.39" font-size="5.4" fill="#1f8c8a" stroke="#1f8c8a" stroke-width="0.32" textLength="111.34" lengthAdjust="spacingAndGlyphs">GP15/SPI1_TX/UART0_RTS/I2C1_SCL/PWM7_B</text>
<path d="M265 385.19 L292 385.19" stroke="#4aa84a" stroke-width="1" fill="none" shape-rendering="crispEdges"/>
<text x="265.5" y="384.49" font-size="4.9" fill="#3a3a3a" stroke="#3a3a3a" stroke-width="0.18" textLength="22" lengthAdjust="spacingAndGlyphs">PICO_D0+</text>
<path d="M578.6 263.6 L585 263.6" stroke="#a8443e" stroke-width="0.9" fill="none"/>
<text x="579" y="263.2" font-size="5.8" fill="#a02828" stroke="#a02828" stroke-width="0.2" textLength="6" lengthAdjust="spacingAndGlyphs">40</text>
<text x="575.6" y="265.8" font-size="5.4" fill="#1f8c8a" stroke="#1f8c8a" stroke-width="0.32" text-anchor="end" textLength="11.8" lengthAdjust="spacingAndGlyphs">VBUS</text>
<path d="M585 263.6 L617.3 263.6" stroke="#4aa84a" stroke-width="1" fill="none" shape-rendering="crispEdges"/>
<path d="M617.3 263.6 H622.3 M620.3 261.4 L623.3 263.6 L620.3 265.8" stroke="#a8443e" stroke-width="0.8" fill="none"/>
<text x="625.3" y="265.6" font-size="5.2" fill="#1f8c8a" stroke="#1f8c8a" stroke-width="0.32" textLength="8.5" lengthAdjust="spacingAndGlyphs">+5V</text>
<text x="612.5" y="262.4" font-size="4.4" fill="#8a8a8a" stroke="#8a8a8a" stroke-width="0.12" textLength="8.5" lengthAdjust="spacingAndGlyphs">+5V</text>
<path d="M578.6 270.01 L585 270.01" stroke="#a8443e" stroke-width="0.9" fill="none"/>
<text x="579" y="269.61" font-size="5.8" fill="#a02828" stroke="#a02828" stroke-width="0.2" textLength="6" lengthAdjust="spacingAndGlyphs">39</text>
<text x="575.6" y="272.21" font-size="5.4" fill="#1f8c8a" stroke="#1f8c8a" stroke-width="0.32" text-anchor="end" textLength="11.8" lengthAdjust="spacingAndGlyphs">VSYS</text>
<path d="M585 270.01 L617.3 270.01" stroke="#4aa84a" stroke-width="1" fill="none" shape-rendering="crispEdges"/>
<text x="616.8" y="269.31" font-size="4.9" fill="#3a3a3a" stroke="#3a3a3a" stroke-width="0.18" text-anchor="end" textLength="11.6" lengthAdjust="spacingAndGlyphs">VSYS</text>
<path d="M578.6 276.42 L585 276.42" stroke="#a8443e" stroke-width="0.9" fill="none"/>
<text x="579" y="276.02" font-size="5.8" fill="#a02828" stroke="#a02828" stroke-width="0.2" textLength="6" lengthAdjust="spacingAndGlyphs">38</text>
<text x="575.6" y="278.62" font-size="5.4" fill="#1f8c8a" stroke="#1f8c8a" stroke-width="0.32" text-anchor="end" textLength="8.85" lengthAdjust="spacingAndGlyphs">GND</text>
<path d="M585 276.42 L617.3 276.42" stroke="#4aa84a" stroke-width="1" fill="none" shape-rendering="crispEdges"/>
<path d="M617.3 273.42 L623.3 276.42 L617.3 279.42Z" stroke="#a8443e" stroke-width="0.9" fill="none"/>
<text x="612.3" y="275.22" font-size="4.4" fill="#8a8a8a" stroke="#8a8a8a" stroke-width="0.12" textLength="8.5" lengthAdjust="spacingAndGlyphs">GND</text>
<text x="625.3" y="278.42" font-size="5.2" fill="#1f8c8a" stroke="#1f8c8a" stroke-width="0.32" textLength="9.6" lengthAdjust="spacingAndGlyphs">GND</text>
<path d="M578.6 282.83 L585 282.83" stroke="#a8443e" stroke-width="0.9" fill="none"/>
<text x="579" y="282.43" font-size="5.8" fill="#a02828" stroke="#a02828" stroke-width="0.2" textLength="6" lengthAdjust="spacingAndGlyphs">37</text>
<text x="575.6" y="285.03" font-size="5.4" fill="#1f8c8a" stroke="#1f8c8a" stroke-width="0.32" text-anchor="end" textLength="17.7" lengthAdjust="spacingAndGlyphs">3V3_EN</text>
<path d="M585 282.83 L617.3 282.83" stroke="#4aa84a" stroke-width="1" fill="none" shape-rendering="crispEdges"/>
<path d="M615.7 281.23 L618.9 284.43 M618.9 281.23 L615.7 284.43" stroke="#3333bb" stroke-width="0.8"/>
<path d="M578.6 289.24 L585 289.24" stroke="#a8443e" stroke-width="0.9" fill="none"/>
<text x="579" y="288.84" font-size="5.8" fill="#a02828" stroke="#a02828" stroke-width="0.2" textLength="6" lengthAdjust="spacingAndGlyphs">36</text>
<text x="575.6" y="291.44" font-size="5.4" fill="#1f8c8a" stroke="#1f8c8a" stroke-width="0.32" text-anchor="end" textLength="23.6" lengthAdjust="spacingAndGlyphs">3V3(OUT)</text>
<path d="M585 289.24 L617.3 289.24" stroke="#4aa84a" stroke-width="1" fill="none" shape-rendering="crispEdges"/>
<path d="M617.3 289.24 H622.3 M620.3 287.04 L623.3 289.24 L620.3 291.44" stroke="#a8443e" stroke-width="0.8" fill="none"/>
<text x="625.3" y="291.24" font-size="5.2" fill="#1f8c8a" stroke="#1f8c8a" stroke-width="0.32" textLength="14" lengthAdjust="spacingAndGlyphs">+3.3V</text>
<text x="610.5" y="288.04" font-size="4.4" fill="#8a8a8a" stroke="#8a8a8a" stroke-width="0.12" textLength="10.5" lengthAdjust="spacingAndGlyphs">+3V3</text>
<path d="M578.6 295.65 L585 295.65" stroke="#a8443e" stroke-width="0.9" fill="none"/>
<text x="579" y="295.25" font-size="5.8" fill="#a02828" stroke="#a02828" stroke-width="0.2" textLength="6" lengthAdjust="spacingAndGlyphs">35</text>
<text x="575.6" y="297.85" font-size="5.4" fill="#1f8c8a" stroke="#1f8c8a" stroke-width="0.32" text-anchor="end" textLength="23.6" lengthAdjust="spacingAndGlyphs">ADC_VREF</text>
<path d="M585 295.65 L617.3 295.65" stroke="#4aa84a" stroke-width="1" fill="none" shape-rendering="crispEdges"/>
<path d="M615.7 294.05 L618.9 297.25 M618.9 294.05 L615.7 297.25" stroke="#3333bb" stroke-width="0.8"/>
<path d="M578.6 302.06 L585 302.06" stroke="#a8443e" stroke-width="0.9" fill="none"/>
<text x="579" y="301.66" font-size="5.8" fill="#a02828" stroke="#a02828" stroke-width="0.2" textLength="6" lengthAdjust="spacingAndGlyphs">34</text>
<text x="575.6" y="304.26" font-size="5.4" fill="#1f8c8a" stroke="#1f8c8a" stroke-width="0.32" text-anchor="end" textLength="123.9" lengthAdjust="spacingAndGlyphs">GP28/ADC2/SPI1_RX/UART0_TX/I2C0_SDA/PWM6_A</text>
<path d="M585 302.06 L617.3 302.06" stroke="#4aa84a" stroke-width="1" fill="none" shape-rendering="crispEdges"/>
<text x="616.8" y="301.36" font-size="4.9" fill="#3a3a3a" stroke="#3a3a3a" stroke-width="0.18" text-anchor="end" textLength="14.5" lengthAdjust="spacingAndGlyphs">PWM_L</text>
<path d="M578.6 308.47 L585 308.47" stroke="#a8443e" stroke-width="0.9" fill="none"/>
<text x="579" y="308.07" font-size="5.8" fill="#a02828" stroke="#a02828" stroke-width="0.2" textLength="6" lengthAdjust="spacingAndGlyphs">33</text>
<text x="575.6" y="310.67" font-size="5.4" fill="#1f8c8a" stroke="#1f8c8a" stroke-width="0.32" text-anchor="end" textLength="23.6" lengthAdjust="spacingAndGlyphs">AGND/GND</text>
<path d="M585 308.47 L617.3 308.47" stroke="#4aa84a" stroke-width="1" fill="none" shape-rendering="crispEdges"/>
<path d="M617.3 305.47 L623.3 308.47 L617.3 311.47Z" stroke="#a8443e" stroke-width="0.9" fill="none"/>
<text x="612.3" y="307.27" font-size="4.4" fill="#8a8a8a" stroke="#8a8a8a" stroke-width="0.12" textLength="8.5" lengthAdjust="spacingAndGlyphs">GND</text>
<text x="625.3" y="310.47" font-size="5.2" fill="#1f8c8a" stroke="#1f8c8a" stroke-width="0.32" textLength="9.6" lengthAdjust="spacingAndGlyphs">GND</text>
<path d="M578.6 314.88 L585 314.88" stroke="#a8443e" stroke-width="0.9" fill="none"/>
<text x="579" y="314.48" font-size="5.8" fill="#a02828" stroke="#a02828" stroke-width="0.2" textLength="6" lengthAdjust="spacingAndGlyphs">32</text>
<text x="575.6" y="317.08" font-size="5.4" fill="#1f8c8a" stroke="#1f8c8a" stroke-width="0.32" text-anchor="end" textLength="126.85" lengthAdjust="spacingAndGlyphs">GP27/ADC1/SPI1_TX/UART1_RTS/I2C1_SCL/PWM5_B</text>
<path d="M585 314.88 L617.3 314.88" stroke="#4aa84a" stroke-width="1" fill="none" shape-rendering="crispEdges"/>
<text x="616.8" y="314.18" font-size="4.9" fill="#3a3a3a" stroke="#3a3a3a" stroke-width="0.18" text-anchor="end" textLength="14.5" lengthAdjust="spacingAndGlyphs">PWM_R</text>
<path d="M578.6 321.29 L585 321.29" stroke="#a8443e" stroke-width="0.9" fill="none"/>
<text x="579" y="320.89" font-size="5.8" fill="#a02828" stroke="#a02828" stroke-width="0.2" textLength="6" lengthAdjust="spacingAndGlyphs">31</text>
<text x="575.6" y="323.49" font-size="5.4" fill="#1f8c8a" stroke="#1f8c8a" stroke-width="0.32" text-anchor="end" textLength="129.8" lengthAdjust="spacingAndGlyphs">GP26/ADC0/SPI1_SCK/UART1_CTS/I2C1_SDA/PWM5_A</text>
<path d="M585 321.29 L617.3 321.29" stroke="#4aa84a" stroke-width="1" fill="none" shape-rendering="crispEdges"/>
<text x="616.8" y="320.59" font-size="4.9" fill="#3a3a3a" stroke="#3a3a3a" stroke-width="0.18" text-anchor="end" textLength="20.3" lengthAdjust="spacingAndGlyphs">DVI_CEC</text>
<path d="M578.6 327.7 L585 327.7" stroke="#a8443e" stroke-width="0.9" fill="none"/>
<text x="579" y="327.3" font-size="5.8" fill="#a02828" stroke="#a02828" stroke-width="0.2" textLength="6" lengthAdjust="spacingAndGlyphs">30</text>
<text x="575.6" y="329.9" font-size="5.4" fill="#1f8c8a" stroke="#1f8c8a" stroke-width="0.32" text-anchor="end" textLength="8.85" lengthAdjust="spacingAndGlyphs">RUN</text>
<path d="M585 327.7 L617.3 327.7" stroke="#4aa84a" stroke-width="1" fill="none" shape-rendering="crispEdges"/>
<text x="616.8" y="327" font-size="4.9" fill="#3a3a3a" stroke="#3a3a3a" stroke-width="0.18" text-anchor="end" textLength="17.4" lengthAdjust="spacingAndGlyphs">nRESET</text>
<path d="M578.6 334.11 L585 334.11" stroke="#a8443e" stroke-width="0.9" fill="none"/>
<text x="579" y="333.71" font-size="5.8" fill="#a02828" stroke="#a02828" stroke-width="0.2" textLength="6" lengthAdjust="spacingAndGlyphs">29</text>
<text x="575.6" y="336.31" font-size="5.4" fill="#1f8c8a" stroke="#1f8c8a" stroke-width="0.32" text-anchor="end" textLength="150.45" lengthAdjust="spacingAndGlyphs">GP22/SPI0_SCK/UART1_CTS/I2C1_SDA/PWM3_A/CLOCK_GPIN1</text>
<path d="M585 334.11 L617.3 334.11" stroke="#4aa84a" stroke-width="1" fill="none" shape-rendering="crispEdges"/>
<text x="616.8" y="333.41" font-size="4.9" fill="#3a3a3a" stroke="#3a3a3a" stroke-width="0.18" text-anchor="end" textLength="26.1" lengthAdjust="spacingAndGlyphs">SPI0_CSn1</text>
<path d="M578.6 340.52 L585 340.52" stroke="#a8443e" stroke-width="0.9" fill="none"/>
<text x="579" y="340.12" font-size="5.8" fill="#a02828" stroke="#a02828" stroke-width="0.2" textLength="6" lengthAdjust="spacingAndGlyphs">28</text>
<text x="575.6" y="342.72" font-size="5.4" fill="#1f8c8a" stroke="#1f8c8a" stroke-width="0.32" text-anchor="end" textLength="8.85" lengthAdjust="spacingAndGlyphs">GND</text>
<path d="M585 340.52 L617.3 340.52" stroke="#4aa84a" stroke-width="1" fill="none" shape-rendering="crispEdges"/>
<path d="M617.3 337.52 L623.3 340.52 L617.3 343.52Z" stroke="#a8443e" stroke-width="0.9" fill="none"/>
<text x="612.3" y="339.32" font-size="4.4" fill="#8a8a8a" stroke="#8a8a8a" stroke-width="0.12" textLength="8.5" lengthAdjust="spacingAndGlyphs">GND</text>
<text x="625.3" y="342.52" font-size="5.2" fill="#1f8c8a" stroke="#1f8c8a" stroke-width="0.32" textLength="9.6" lengthAdjust="spacingAndGlyphs">GND</text>
<path d="M578.6 346.93 L585 346.93" stroke="#a8443e" stroke-width="0.9" fill="none"/>
<text x="579" y="346.53" font-size="5.8" fill="#a02828" stroke="#a02828" stroke-width="0.2" textLength="6" lengthAdjust="spacingAndGlyphs">27</text>
<text x="575.6" y="349.13" font-size="5.4" fill="#1f8c8a" stroke="#1f8c8a" stroke-width="0.32" text-anchor="end" textLength="150.45" lengthAdjust="spacingAndGlyphs">GP21/SPI0_CSn/UART1_RX/PWM2_B/I2C0_SCL/CLOCK_GPOUT0</text>
<path d="M585 346.93 L610.5 346.93" stroke="#4aa84a" stroke-width="1" fill="none" shape-rendering="crispEdges"/>
<text x="610" y="346.23" font-size="4.9" fill="#3a3a3a" stroke="#3a3a3a" stroke-width="0.18" text-anchor="end" textLength="23.2" lengthAdjust="spacingAndGlyphs">UART1_RX</text>
<path d="M578.6 353.34 L585 353.34" stroke="#a8443e" stroke-width="0.9" fill="none"/>
<text x="579" y="352.94" font-size="5.8" fill="#a02828" stroke="#a02828" stroke-width="0.2" textLength="6" lengthAdjust="spacingAndGlyphs">26</text>
<text x="575.6" y="355.54" font-size="5.4" fill="#1f8c8a" stroke="#1f8c8a" stroke-width="0.32" text-anchor="end" textLength="144.55" lengthAdjust="spacingAndGlyphs">GP20/SPI0_RX/UART1_TX/PWM2_A/I2C0_SDA/CLOCK_GPIN0</text>
<path d="M585 353.34 L610.5 353.34" stroke="#4aa84a" stroke-width="1" fill="none" shape-rendering="crispEdges"/>
<text x="610" y="352.64" font-size="4.9" fill="#3a3a3a" stroke="#3a3a3a" stroke-width="0.18" text-anchor="end" textLength="23.2" lengthAdjust="spacingAndGlyphs">UART1_TX</text>
<path d="M578.6 359.75 L585 359.75" stroke="#a8443e" stroke-width="0.9" fill="none"/>
<text x="579" y="359.35" font-size="5.8" fill="#a02828" stroke="#a02828" stroke-width="0.2" textLength="6" lengthAdjust="spacingAndGlyphs">25</text>
<text x="575.6" y="361.95" font-size="5.4" fill="#1f8c8a" stroke="#1f8c8a" stroke-width="0.32" text-anchor="end" textLength="112.1" lengthAdjust="spacingAndGlyphs">GP19/SPI0_TX/UART0_RTS/I2C1_SCL/PWM1_B</text>
<path d="M585 359.75 L610.5 359.75" stroke="#4aa84a" stroke-width="1" fill="none" shape-rendering="crispEdges"/>
<text x="610" y="359.05" font-size="4.9" fill="#3a3a3a" stroke="#3a3a3a" stroke-width="0.18" text-anchor="end" textLength="23.2" lengthAdjust="spacingAndGlyphs">PICO_D1+</text>
<path d="M578.6 366.16 L585 366.16" stroke="#a8443e" stroke-width="0.9" fill="none"/>
<text x="579" y="365.76" font-size="5.8" fill="#a02828" stroke="#a02828" stroke-width="0.2" textLength="6" lengthAdjust="spacingAndGlyphs">24</text>
<text x="575.6" y="368.36" font-size="5.4" fill="#1f8c8a" stroke="#1f8c8a" stroke-width="0.32" text-anchor="end" textLength="115.05" lengthAdjust="spacingAndGlyphs">GP18/SPI0_SCK/UART0_CTS/I2C1_SDA/PWM1_A</text>
<path d="M585 366.16 L610.5 366.16" stroke="#4aa84a" stroke-width="1" fill="none" shape-rendering="crispEdges"/>
<text x="610" y="365.46" font-size="4.9" fill="#3a3a3a" stroke="#3a3a3a" stroke-width="0.18" text-anchor="end" textLength="23.2" lengthAdjust="spacingAndGlyphs">PICO_D1-</text>
<path d="M578.6 372.57 L585 372.57" stroke="#a8443e" stroke-width="0.9" fill="none"/>
<text x="579" y="372.17" font-size="5.8" fill="#a02828" stroke="#a02828" stroke-width="0.2" textLength="6" lengthAdjust="spacingAndGlyphs">23</text>
<text x="575.6" y="374.77" font-size="5.4" fill="#1f8c8a" stroke="#1f8c8a" stroke-width="0.32" text-anchor="end" textLength="8.85" lengthAdjust="spacingAndGlyphs">GND</text>
<path d="M585 372.57 L617.3 372.57" stroke="#4aa84a" stroke-width="1" fill="none" shape-rendering="crispEdges"/>
<path d="M617.3 369.57 L623.3 372.57 L617.3 375.57Z" stroke="#a8443e" stroke-width="0.9" fill="none"/>
<text x="612.3" y="371.37" font-size="4.4" fill="#8a8a8a" stroke="#8a8a8a" stroke-width="0.12" textLength="8.5" lengthAdjust="spacingAndGlyphs">GND</text>
<text x="625.3" y="374.57" font-size="5.2" fill="#1f8c8a" stroke="#1f8c8a" stroke-width="0.32" textLength="9.6" lengthAdjust="spacingAndGlyphs">GND</text>
<path d="M578.6 378.98 L585 378.98" stroke="#a8443e" stroke-width="0.9" fill="none"/>
<text x="579" y="378.58" font-size="5.8" fill="#a02828" stroke="#a02828" stroke-width="0.2" textLength="6" lengthAdjust="spacingAndGlyphs">22</text>
<text x="575.6" y="381.18" font-size="5.4" fill="#1f8c8a" stroke="#1f8c8a" stroke-width="0.32" text-anchor="end" textLength="112.1" lengthAdjust="spacingAndGlyphs">GP17/SPI0_CSn/UART0_RX/I2C0_SCL/PWM0_B</text>
<path d="M585 378.98 L617.3 378.98" stroke="#4aa84a" stroke-width="1" fill="none" shape-rendering="crispEdges"/>
<text x="616.8" y="378.28" font-size="4.9" fill="#3a3a3a" stroke="#3a3a3a" stroke-width="0.18" text-anchor="end" textLength="23.2" lengthAdjust="spacingAndGlyphs">PICO_D2+</text>
<path d="M578.6 385.39 L585 385.39" stroke="#a8443e" stroke-width="0.9" fill="none"/>
<text x="579" y="384.99" font-size="5.8" fill="#a02828" stroke="#a02828" stroke-width="0.2" textLength="6" lengthAdjust="spacingAndGlyphs">21</text>
<text x="575.6" y="387.59" font-size="5.4" fill="#1f8c8a" stroke="#1f8c8a" stroke-width="0.32" text-anchor="end" textLength="109.15" lengthAdjust="spacingAndGlyphs">GP16/SPI0_RX/UART0_TX/I2C0_SDA/PWM0_A</text>
<path d="M585 385.39 L617.3 385.39" stroke="#4aa84a" stroke-width="1" fill="none" shape-rendering="crispEdges"/>
<text x="616.8" y="384.69" font-size="4.9" fill="#3a3a3a" stroke="#3a3a3a" stroke-width="0.18" text-anchor="end" textLength="23.2" lengthAdjust="spacingAndGlyphs">PICO_D2-</text>
<path d="M591.25 241.6 L596.2 244.8 L591.25 248 L586.3 244.8Z" stroke="#a8443e" stroke-width="0.8" fill="none"/>
<path d="M591.25 248 L591.25 263.6" stroke="#4aa84a" stroke-width="1" fill="none" shape-rendering="crispEdges"/>
<circle cx="591.25" cy="263.6" r="1.55" fill="#2a8a2a"/>
<text x="591.5" y="238.6" font-size="4.9" fill="#1f8c8a" stroke="#1f8c8a" stroke-width="0.32" text-anchor="middle" textLength="23.5" lengthAdjust="spacingAndGlyphs">PWR_FLAG</text>
<rect x="280.3" y="146.1" width="17" height="31.6" stroke="#a8443e" stroke-width="0.8" fill="none"/>
<path d="M284.3 146.1 L284.3 139" stroke="#a8443e" stroke-width="0.9" fill="none"/>
<path d="M284.3 177.7 L284.3 185" stroke="#a8443e" stroke-width="0.9" fill="none"/>
<text x="283.3" y="143" font-size="4" fill="#a8443e" stroke="#a8443e" stroke-width="0.32" textLength="2.5" lengthAdjust="spacingAndGlyphs" transform="rotate(-90 283.3 143)">3</text>
<text x="283.3" y="184" font-size="4" fill="#a8443e" stroke="#a8443e" stroke-width="0.32" textLength="2.5" lengthAdjust="spacingAndGlyphs" transform="rotate(-90 283.3 184)">6</text>
<path d="M290.3 146.1 L290.3 139" stroke="#a8443e" stroke-width="0.9" fill="none"/>
<path d="M290.3 177.7 L290.3 185" stroke="#a8443e" stroke-width="0.9" fill="none"/>
<text x="289.3" y="143" font-size="4" fill="#a8443e" stroke="#a8443e" stroke-width="0.32" textLength="2.5" lengthAdjust="spacingAndGlyphs" transform="rotate(-90 289.3 143)">3</text>
<text x="289.3" y="184" font-size="4" fill="#a8443e" stroke="#a8443e" stroke-width="0.32" textLength="2.5" lengthAdjust="spacingAndGlyphs" transform="rotate(-90 289.3 184)">6</text>
<path d="M284.3 139 L284.3 130 L304 130" stroke="#4aa84a" stroke-width="1" fill="none" shape-rendering="crispEdges"/>
<path d="M290.3 139 L290.3 130" stroke="#4aa84a" stroke-width="1" fill="none" shape-rendering="crispEdges"/>
<circle cx="290.3" cy="130" r="1.55" fill="#2a8a2a"/>
<path d="M304 127 L310 130 L304 133Z" stroke="#a8443e" stroke-width="0.9" fill="none"/>
<text x="299" y="128.8" font-size="4.4" fill="#8a8a8a" stroke="#8a8a8a" stroke-width="0.12" textLength="8.5" lengthAdjust="spacingAndGlyphs">GND</text>
<text x="312" y="132" font-size="5.2" fill="#1f8c8a" stroke="#1f8c8a" stroke-width="0.32" textLength="9.6" lengthAdjust="spacingAndGlyphs">GND</text>
<path d="M284.3 185 L284.3 194 L304 194" stroke="#4aa84a" stroke-width="1" fill="none" shape-rendering="crispEdges"/>
<path d="M290.3 185 L290.3 194" stroke="#4aa84a" stroke-width="1" fill="none" shape-rendering="crispEdges"/>
<circle cx="290.3" cy="194" r="1.55" fill="#2a8a2a"/>
<path d="M304 191 L310 194 L304 197Z" stroke="#a8443e" stroke-width="0.9" fill="none"/>
<text x="299" y="192.8" font-size="4.4" fill="#8a8a8a" stroke="#8a8a8a" stroke-width="0.12" textLength="8.5" lengthAdjust="spacingAndGlyphs">GND</text>
<text x="312" y="196" font-size="5.2" fill="#1f8c8a" stroke="#1f8c8a" stroke-width="0.32" textLength="9.6" lengthAdjust="spacingAndGlyphs">GND</text>
<path d="M297.3 149 L309.4 149" stroke="#a8443e" stroke-width="0.9" fill="none"/>
<text x="301" y="148.3" font-size="5.6" fill="#a02828" stroke="#a02828" stroke-width="0.2" textLength="2.9" lengthAdjust="spacingAndGlyphs">1</text>
<text x="294.5" y="150.8" font-size="5.2" fill="#1f8c8a" stroke="#1f8c8a" stroke-width="0.32" text-anchor="end" textLength="12.4" lengthAdjust="spacingAndGlyphs">VBUS</text>
<path d="M297.3 155.5 L309.4 155.5" stroke="#a8443e" stroke-width="0.9" fill="none"/>
<text x="301" y="154.8" font-size="5.6" fill="#a02828" stroke="#a02828" stroke-width="0.2" textLength="2.9" lengthAdjust="spacingAndGlyphs">2</text>
<text x="294.5" y="157.3" font-size="5.2" fill="#1f8c8a" stroke="#1f8c8a" stroke-width="0.32" text-anchor="end" textLength="6.2" lengthAdjust="spacingAndGlyphs">D-</text>
<path d="M307.8 153.9 L311 157.1 M311 153.9 L307.8 157.1" stroke="#3333bb" stroke-width="0.8"/>
<path d="M297.3 161.7 L309.4 161.7" stroke="#a8443e" stroke-width="0.9" fill="none"/>
<text x="301" y="161" font-size="5.6" fill="#a02828" stroke="#a02828" stroke-width="0.2" textLength="2.9" lengthAdjust="spacingAndGlyphs">3</text>
<text x="294.5" y="163.5" font-size="5.2" fill="#1f8c8a" stroke="#1f8c8a" stroke-width="0.32" text-anchor="end" textLength="6.2" lengthAdjust="spacingAndGlyphs">D+</text>
<path d="M307.8 160.1 L311 163.3 M311 160.1 L307.8 163.3" stroke="#3333bb" stroke-width="0.8"/>
<path d="M297.3 168.2 L309.4 168.2" stroke="#a8443e" stroke-width="0.9" fill="none"/>
<text x="301" y="167.5" font-size="5.6" fill="#a02828" stroke="#a02828" stroke-width="0.2" textLength="2.9" lengthAdjust="spacingAndGlyphs">4</text>
<text x="294.5" y="170" font-size="5.2" fill="#1f8c8a" stroke="#1f8c8a" stroke-width="0.32" text-anchor="end" textLength="6.2" lengthAdjust="spacingAndGlyphs">ID</text>
<path d="M307.8 166.6 L311 169.8 M311 166.6 L307.8 169.8" stroke="#3333bb" stroke-width="0.8"/>
<path d="M297.3 174.8 L309.4 174.8" stroke="#a8443e" stroke-width="0.9" fill="none"/>
<text x="301" y="174.1" font-size="5.6" fill="#a02828" stroke="#a02828" stroke-width="0.2" textLength="2.9" lengthAdjust="spacingAndGlyphs">5</text>
<text x="294.5" y="176.6" font-size="5.2" fill="#1f8c8a" stroke="#1f8c8a" stroke-width="0.32" text-anchor="end" textLength="9.3" lengthAdjust="spacingAndGlyphs">GND</text>
<path d="M309.4 149 L457.1 149" stroke="#4aa84a" stroke-width="1" fill="none" shape-rendering="crispEdges"/>
<path d="M309.4 174.8 L319 174.8" stroke="#4aa84a" stroke-width="1" fill="none" shape-rendering="crispEdges"/>
<path d="M319 171.8 L325 174.8 L319 177.8Z" stroke="#a8443e" stroke-width="0.9" fill="none"/>
<text x="314" y="173.6" font-size="4.4" fill="#8a8a8a" stroke="#8a8a8a" stroke-width="0.12" textLength="8.5" lengthAdjust="spacingAndGlyphs">GND</text>
<text x="327" y="176.8" font-size="5.2" fill="#1f8c8a" stroke="#1f8c8a" stroke-width="0.32" textLength="9.6" lengthAdjust="spacingAndGlyphs">GND</text>
<text x="278.5" y="160.7" font-size="6.3" fill="#1f8c8a" stroke="#1f8c8a" stroke-width="0.32" text-anchor="end" textLength="14.7" lengthAdjust="spacingAndGlyphs">USB1</text>
<text x="278.5" y="167.6" font-size="6.3" fill="#1f8c8a" stroke="#1f8c8a" stroke-width="0.32" text-anchor="end" textLength="27.7" lengthAdjust="spacingAndGlyphs">USB-MINI</text>
<path d="M328.9 149 L328.9 130" stroke="#4aa84a" stroke-width="1" fill="none" shape-rendering="crispEdges"/>
<path d="M328.9 130 V125 M326.7 127 L328.9 124 L331.1 127" stroke="#a8443e" stroke-width="0.8" fill="none"/>
<text x="328.9" y="122.5" font-size="5.2" fill="#1f8c8a" stroke="#1f8c8a" stroke-width="0.32" text-anchor="middle" textLength="9" lengthAdjust="spacingAndGlyphs">+5V</text>
<circle cx="328.9" cy="149" r="1.55" fill="#2a8a2a"/>
<circle cx="348.1" cy="149" r="1.55" fill="#2a8a2a"/>
<circle cx="348.1" cy="174.3" r="1.55" fill="#2a8a2a"/>
<circle cx="348.1" cy="187.3" r="1.55" fill="#2a8a2a"/>
<path d="M348.1 123.4 L348.1 195" stroke="#4aa84a" stroke-width="1" fill="none" shape-rendering="crispEdges"/>
<path d="M348.1 123.4 L361.7 123.4" stroke="#4aa84a" stroke-width="1" fill="none" shape-rendering="crispEdges"/>
<path d="M363.6 121.2 L368 123.4 L363.6 125.6Z" fill="#9a1818" stroke="#9a1818" stroke-width="0.6"/><path d="M368.4 121 V125.8 M366.5 119.5 L368 121 M367.2 118.8 L369 120.5" stroke="#9a1818" stroke-width="0.8"/>
<text x="361.5" y="122.3" font-size="3.2" fill="#1f8c8a" stroke="#1f8c8a" stroke-width="0.28" textLength="2.2" lengthAdjust="spacingAndGlyphs">A</text>
<text x="370" y="122.3" font-size="3.2" fill="#1f8c8a" stroke="#1f8c8a" stroke-width="0.28" textLength="2.2" lengthAdjust="spacingAndGlyphs">K</text>
<text x="362" y="126.8" font-size="3.2" fill="#a8443e" stroke="#a8443e" stroke-width="0.28" textLength="1.8" lengthAdjust="spacingAndGlyphs">2</text>
<text x="370" y="126.8" font-size="3.2" fill="#a8443e" stroke="#a8443e" stroke-width="0.28" textLength="1.8" lengthAdjust="spacingAndGlyphs">1</text>
<path d="M369 123.4 L386 123.4" stroke="#4aa84a" stroke-width="1" fill="none" shape-rendering="crispEdges"/>
<rect x="386" y="121.3" width="14" height="4.2" stroke="#a8443e" stroke-width="0.8" fill="none"/>
<path d="M400 123.4 L411.9 123.4 L411.9 161.8 L406 161.8" stroke="#4aa84a" stroke-width="1" fill="none" shape-rendering="crispEdges"/>
<rect x="365.4" y="146.3" width="29.2" height="31.4" stroke="#c46a58" stroke-width="0.8" fill="#ffffc4"/>
<path d="M355 149 L365.4 149" stroke="#a8443e" stroke-width="0.9" fill="none"/>
<path d="M355 174.3 L365.4 174.3" stroke="#a8443e" stroke-width="0.9" fill="none"/>
<path d="M394.6 149 L406 149" stroke="#a8443e" stroke-width="0.9" fill="none"/>
<path d="M394.6 161.8 L406 161.8" stroke="#a8443e" stroke-width="0.9" fill="none"/>
<path d="M394.6 174.3 L406 174.3" stroke="#a8443e" stroke-width="0.9" fill="none"/>
<text x="359" y="148" font-size="5" fill="#a8443e" stroke="#a8443e" stroke-width="0.32" textLength="2.8" lengthAdjust="spacingAndGlyphs">4</text>
<text x="359" y="173.3" font-size="5" fill="#a8443e" stroke="#a8443e" stroke-width="0.32" textLength="2.8" lengthAdjust="spacingAndGlyphs">2</text>
<text x="399" y="148" font-size="5" fill="#a8443e" stroke="#a8443e" stroke-width="0.32" textLength="2.8" lengthAdjust="spacingAndGlyphs">3</text>
<text x="399" y="160.8" font-size="5" fill="#a8443e" stroke="#a8443e" stroke-width="0.32" textLength="2.8" lengthAdjust="spacingAndGlyphs">1</text>
<text x="399" y="173.3" font-size="5" fill="#a8443e" stroke="#a8443e" stroke-width="0.32" textLength="2.8" lengthAdjust="spacingAndGlyphs">5</text>
<path d="M406 174.3 L411.9 174.3 L411.9 187.3 L386.8 187.3" stroke="#4aa84a" stroke-width="1" fill="none" shape-rendering="crispEdges"/>
<rect x="372.8" y="185.2" width="14" height="4.2" stroke="#a8443e" stroke-width="0.8" fill="none"/>
<path d="M372.8 187.3 L348.1 187.3" stroke="#4aa84a" stroke-width="1" fill="none" shape-rendering="crispEdges"/>
<path d="M348.1 174.3 L355 174.3" stroke="#4aa84a" stroke-width="1" fill="none" shape-rendering="crispEdges"/>
<rect x="343" y="159.6" width="10" height="3.4" fill="#fff"/>
<path d="M344.1 159.6 L352.1 159.6" stroke="#a8443e" stroke-width="1" fill="none"/>
<path d="M344.1 163 L352.1 163" stroke="#a8443e" stroke-width="1" fill="none"/>
<path d="M345.5 195 L348.1 199.5 L350.7 195Z" stroke="#a8443e" stroke-width="0.8" fill="none"/>
<text x="346.9" y="194.5" font-size="4.4" fill="#8a8a8a" stroke="#8a8a8a" stroke-width="0.12" textLength="7" lengthAdjust="spacingAndGlyphs" transform="rotate(-90 346.9 194.5)">GND</text>
<text x="348.1" y="206" font-size="5.2" fill="#1f8c8a" stroke="#1f8c8a" stroke-width="0.32" text-anchor="middle" textLength="9.6" lengthAdjust="spacingAndGlyphs">GND</text>
<text x="368" y="151" font-size="4.6" fill="#1f8c8a" stroke="#1f8c8a" stroke-width="0.32" textLength="9" lengthAdjust="spacingAndGlyphs">VCC</text>
<text x="379" y="151" font-size="4.6" fill="#1f8c8a" stroke="#1f8c8a" stroke-width="0.32" textLength="12" lengthAdjust="spacingAndGlyphs">VBAT</text>
<rect x="374" y="152" width="12" height="2.4" fill="#8a1a1a"/>
<text x="370.5" y="158.5" font-size="5" fill="#a83a30" stroke="#a83a30" stroke-width="0.32" textLength="19.5" lengthAdjust="spacingAndGlyphs">BATTERY</text>
<text x="390.5" y="163.5" font-size="5" fill="#1f8c8a" stroke="#1f8c8a" stroke-width="0.32" text-anchor="end" textLength="14" lengthAdjust="spacingAndGlyphs">CHRGb</text>
<text x="369" y="168" font-size="5" fill="#a83a30" stroke="#a83a30" stroke-width="0.32" textLength="21" lengthAdjust="spacingAndGlyphs">CHARGER</text>
<text x="368" y="176" font-size="4.6" fill="#1f8c8a" stroke="#1f8c8a" stroke-width="0.32" textLength="8.5" lengthAdjust="spacingAndGlyphs">GND</text>
<text x="378" y="176" font-size="4.6" fill="#1f8c8a" stroke="#1f8c8a" stroke-width="0.32" textLength="13" lengthAdjust="spacingAndGlyphs">PROG</text>
<text x="348.9" y="122" font-size="5.2" fill="#1f8c8a" stroke="#1f8c8a" stroke-width="0.32" textLength="10.6" lengthAdjust="spacingAndGlyphs">LED1</text>
<text x="393" y="118.3" font-size="5.2" fill="#1f8c8a" stroke="#1f8c8a" stroke-width="0.32" text-anchor="middle" textLength="6" lengthAdjust="spacingAndGlyphs">R4</text>
<text x="380" y="138.2" font-size="6.2" fill="#1f8c8a" stroke="#1f8c8a" stroke-width="0.32" text-anchor="middle" textLength="7" lengthAdjust="spacingAndGlyphs">U1</text>
<text x="359" y="143" font-size="3" fill="#1f8c8a" stroke="#1f8c8a" stroke-width="0.28" textLength="42" lengthAdjust="spacingAndGlyphs">BL4054B-42TPRN(SOT23-5)</text>
<text x="383" y="130" font-size="3" fill="#1f8c8a" stroke="#1f8c8a" stroke-width="0.28" textLength="20" lengthAdjust="spacingAndGlyphs">1K/5%/0402</text>
<text x="365" y="131" font-size="3" fill="#1f8c8a" stroke="#1f8c8a" stroke-width="0.28" textLength="6" lengthAdjust="spacingAndGlyphs">Red</text>
<text x="371" y="183.8" font-size="5.2" fill="#1f8c8a" stroke="#1f8c8a" stroke-width="0.32" text-anchor="middle" textLength="6" lengthAdjust="spacingAndGlyphs">R1</text>
<text x="389" y="184.5" font-size="3" fill="#1f8c8a" stroke="#1f8c8a" stroke-width="0.28" textLength="21" lengthAdjust="spacingAndGlyphs">1.5K/5%/0402</text>
<text x="355.5" y="163.8" font-size="5.4" fill="#1f8c8a" stroke="#1f8c8a" stroke-width="0.32" textLength="6.5" lengthAdjust="spacingAndGlyphs">C2</text>
<text x="342" y="172" font-size="3" fill="#1f8c8a" stroke="#1f8c8a" stroke-width="0.28" textLength="20" lengthAdjust="spacingAndGlyphs" transform="rotate(-90 342 172)">1uF/6.3V/0603</text>
<circle cx="444.4" cy="149" r="1.55" fill="#2a8a2a"/>
<path d="M444.4 127 L444.4 177.2 L436.7 177.2" stroke="#4aa84a" stroke-width="1" fill="none" shape-rendering="crispEdges"/>
<path d="M444.4 127 V122 M442.2 124 L444.4 121 L446.6 124" stroke="#a8443e" stroke-width="0.8" fill="none"/>
<text x="444.4" y="119.5" font-size="5.2" fill="#1f8c8a" stroke="#1f8c8a" stroke-width="0.32" text-anchor="middle" textLength="14" lengthAdjust="spacingAndGlyphs">+BATT</text>
<rect x="419.9" y="171" width="10.7" height="20.1" stroke="#a8443e" stroke-width="0.8" fill="none"/>
<path d="M430.6 177.2 L436.7 177.2" stroke="#a8443e" stroke-width="0.9" fill="none"/>
<path d="M430.6 183.5 L436.7 183.5" stroke="#a8443e" stroke-width="0.9" fill="none"/>
<rect x="422.5" y="176.4" width="5" height="1.6" fill="#9a1010"/><rect x="422.5" y="182.7" width="5" height="1.6" fill="#9a1010"/>
<text x="433" y="176.2" font-size="4.6" fill="#a8443e" stroke="#a8443e" stroke-width="0.32" textLength="2.5" lengthAdjust="spacingAndGlyphs">1</text>
<text x="433" y="182.5" font-size="4.6" fill="#a8443e" stroke="#a8443e" stroke-width="0.32" textLength="2.5" lengthAdjust="spacingAndGlyphs">2</text>
<path d="M436.7 183.5 L443.4 183.5 L443.4 189" stroke="#4aa84a" stroke-width="1" fill="none" shape-rendering="crispEdges"/>
<path d="M440.8 189 L443.4 193.5 L446 189Z" stroke="#a8443e" stroke-width="0.8" fill="none"/>
<text x="442.2" y="188.5" font-size="4.4" fill="#8a8a8a" stroke="#8a8a8a" stroke-width="0.12" textLength="7" lengthAdjust="spacingAndGlyphs" transform="rotate(-90 442.2 188.5)">GND</text>
<text x="446" y="195.5" font-size="5.2" fill="#1f8c8a" stroke="#1f8c8a" stroke-width="0.32" textLength="9.5" lengthAdjust="spacingAndGlyphs">GND</text>
<text x="411" y="195.5" font-size="6" fill="#1f8c8a" stroke="#1f8c8a" stroke-width="0.32" textLength="27.6" lengthAdjust="spacingAndGlyphs">BAT_CON1</text>
<text x="420" y="169" font-size="3" fill="#1f8c8a" stroke="#1f8c8a" stroke-width="0.28" textLength="10" lengthAdjust="spacingAndGlyphs">DW02S</text>
<circle cx="463.3" cy="168" r="12.1" stroke="#a8443e" stroke-width="0.9" fill="none"/>
<path d="M452 167.8 L475 167.8" stroke="#a8443e" stroke-width="1" fill="none"/>
<path d="M455 171.3 L471.5 171.3" stroke="#a8443e" stroke-width="1" fill="none"/>
<path d="M457.1 157 L457.1 167.8" stroke="#a8443e" stroke-width="0.9" fill="none"/>
<path d="M469.8 157 L469.8 167.8" stroke="#a8443e" stroke-width="0.9" fill="none"/>
<path d="M469.8 171.3 L469.8 183.6" stroke="#a8443e" stroke-width="0.9" fill="none"/>
<path d="M461 163.5 L463.2 161.3 L465.4 163.5 M467 173.5 Q470 175 467.5 177" stroke="#a8443e" stroke-width="0.8" fill="none"/>
<rect x="460.5" y="168.2" width="4.5" height="2" fill="#a02020"/>
<text x="453" y="163" font-size="3.6" fill="#a8443e" stroke="#a8443e" stroke-width="0.28" textLength="2" lengthAdjust="spacingAndGlyphs">2</text>
<text x="459.5" y="162" font-size="3.6" fill="#a8443e" stroke="#a8443e" stroke-width="0.28" textLength="2.5" lengthAdjust="spacingAndGlyphs">G</text>
<text x="466" y="162" font-size="3.6" fill="#a8443e" stroke="#a8443e" stroke-width="0.28" textLength="2.5" lengthAdjust="spacingAndGlyphs">D</text>
<path d="M457.1 149 L457.1 157" stroke="#4aa84a" stroke-width="1" fill="none" shape-rendering="crispEdges"/>
<path d="M469.8 133 L469.8 157" stroke="#4aa84a" stroke-width="1" fill="none" shape-rendering="crispEdges"/>
<path d="M469.8 149.1 L488.2 149.1" stroke="#4aa84a" stroke-width="1" fill="none" shape-rendering="crispEdges"/>
<circle cx="469.8" cy="149.1" r="1.55" fill="#2a8a2a"/>
<text x="477" y="148" font-size="4.9" fill="#3a3a3a" stroke="#3a3a3a" stroke-width="0.18" textLength="12" lengthAdjust="spacingAndGlyphs">VSYS</text>
<path d="M469.8 126.4 L474.7 129.7 L469.8 133 L464.9 129.7Z" stroke="#a8443e" stroke-width="0.8" fill="none"/>
<text x="474.5" y="128" font-size="4.9" fill="#1f8c8a" stroke="#1f8c8a" stroke-width="0.32" textLength="23" lengthAdjust="spacingAndGlyphs">PWR_FLAG</text>
<text x="476" y="170.7" font-size="6" fill="#1f8c8a" stroke="#1f8c8a" stroke-width="0.32" textLength="12.7" lengthAdjust="spacingAndGlyphs">FET1</text>
<text x="453" y="185.5" font-size="3.2" fill="#1f8c8a" stroke="#1f8c8a" stroke-width="0.28" textLength="14" lengthAdjust="spacingAndGlyphs">WPM2015</text>
<path d="M469.8 183.6 L469.8 206.4 L475.8 206.4" stroke="#4aa84a" stroke-width="1" fill="none" shape-rendering="crispEdges"/>
<circle cx="469.8" cy="190.5" r="1.55" fill="#2a8a2a"/>
<path d="M469.8 190.5 L482 190.5" stroke="#4aa84a" stroke-width="1" fill="none" shape-rendering="crispEdges"/>
<path d="M482 190.5 H487 M485 188.3 L488 190.5 L485 192.7" stroke="#a8443e" stroke-width="0.8" fill="none"/>
<text x="490" y="192.5" font-size="5.2" fill="#1f8c8a" stroke="#1f8c8a" stroke-width="0.32" textLength="9" lengthAdjust="spacingAndGlyphs">+5V</text>
<text x="476" y="189.3" font-size="4.4" fill="#8a8a8a" stroke="#8a8a8a" stroke-width="0.12" textLength="8.5" lengthAdjust="spacingAndGlyphs">+5V</text>
<rect x="475.8" y="204.3" width="14" height="4.2" stroke="#a8443e" stroke-width="0.8" fill="none"/>
<path d="M489.8 206.4 L496 206.4" stroke="#4aa84a" stroke-width="1" fill="none" shape-rendering="crispEdges"/>
<path d="M496 203.4 L502 206.4 L496 209.4Z" stroke="#a8443e" stroke-width="0.9" fill="none"/>
<text x="491" y="205.2" font-size="4.4" fill="#8a8a8a" stroke="#8a8a8a" stroke-width="0.12" textLength="8.5" lengthAdjust="spacingAndGlyphs">GND</text>
<text x="504" y="208.4" font-size="5.2" fill="#1f8c8a" stroke="#1f8c8a" stroke-width="0.32" textLength="9.6" lengthAdjust="spacingAndGlyphs">GND</text>
<text x="483" y="200" font-size="5.2" fill="#1f8c8a" stroke="#1f8c8a" stroke-width="0.32" text-anchor="middle" textLength="6" lengthAdjust="spacingAndGlyphs">R5</text>
<text x="476" y="213" font-size="3" fill="#1f8c8a" stroke="#1f8c8a" stroke-width="0.28" textLength="14" lengthAdjust="spacingAndGlyphs">10K/0402</text>
<path d="M565.6 161.8 L655.4 161.8" stroke="#4aa84a" stroke-width="1" fill="none" shape-rendering="crispEdges"/>
<path d="M565.6 161.8 L565.6 226 L738.3 226 L738.3 235" stroke="#4aa84a" stroke-width="1" fill="none" shape-rendering="crispEdges"/>
<path d="M589.5 158.05 L589.5 165.55" stroke="#a8443e" stroke-width="1" fill="none"/>
<path d="M592.7 158.05 L592.7 165.55" stroke="#a8443e" stroke-width="1" fill="none"/>
<rect x="589" y="157" width="4.2" height="9" fill="#fff"/>
<path d="M589.5 158.05 L589.5 165.55" stroke="#a8443e" stroke-width="1" fill="none"/>
<path d="M592.7 158.05 L592.7 165.55" stroke="#a8443e" stroke-width="1" fill="none"/>
<text x="595" y="160" font-size="5.6" fill="#1f8c8a" stroke="#1f8c8a" stroke-width="0.32" textLength="7" lengthAdjust="spacingAndGlyphs">C3</text>
<text x="556" y="159.5" font-size="3" fill="#1f8c8a" stroke="#1f8c8a" stroke-width="0.28" textLength="33" lengthAdjust="spacingAndGlyphs">47uF/6.3V/20%/0805</text>
<circle cx="578.6" cy="161.8" r="1.55" fill="#2a8a2a"/>
<circle cx="604.3" cy="161.8" r="1.55" fill="#2a8a2a"/>
<circle cx="623.3" cy="161.8" r="1.55" fill="#2a8a2a"/>
<path d="M578.6 161.8 L578.6 193.9" stroke="#4aa84a" stroke-width="1" fill="none" shape-rendering="crispEdges"/>
<rect x="576.5" y="167.8" width="4.2" height="14" stroke="#a8443e" stroke-width="0.8" fill="none"/>
<rect x="576.5" y="167.8" width="4.2" height="14" fill="#fff" stroke="#a8443e" stroke-width="0.8"/>
<circle cx="578.6" cy="193.9" r="1.55" fill="#2a8a2a"/>
<path d="M604.3 161.8 L604.3 193.9" stroke="#4aa84a" stroke-width="1" fill="none" shape-rendering="crispEdges"/>
<rect x="602.2" y="167.8" width="4.2" height="14" stroke="#a8443e" stroke-width="0.8" fill="none"/>
<rect x="602.2" y="167.8" width="4.2" height="14" fill="#fff" stroke="#a8443e" stroke-width="0.8"/>
<circle cx="604.3" cy="193.9" r="1.55" fill="#2a8a2a"/>
<path d="M623.3 161.8 L623.3 193.9 L578.6 193.9" stroke="#4aa84a" stroke-width="1" fill="none" shape-rendering="crispEdges"/>
<rect x="619" y="172" width="9" height="5.5" fill="#fff"/>
<path d="M619.55 173.1 L627.05 173.1" stroke="#a8443e" stroke-width="1" fill="none"/>
<path d="M619.55 176.5 L627.05 176.5" stroke="#a8443e" stroke-width="1" fill="none"/>
<path d="M576 197 L578.6 201.5 L581.2 197Z" stroke="#a8443e" stroke-width="0.8" fill="none"/>
<text x="577.4" y="196.5" font-size="4.4" fill="#8a8a8a" stroke="#8a8a8a" stroke-width="0.12" textLength="7" lengthAdjust="spacingAndGlyphs" transform="rotate(-90 577.4 196.5)">GND</text>
<path d="M578.6 193.9 L578.6 197" stroke="#4aa84a" stroke-width="1" fill="none" shape-rendering="crispEdges"/>
<text x="580" y="207" font-size="5.2" fill="#1f8c8a" stroke="#1f8c8a" stroke-width="0.32" textLength="9.5" lengthAdjust="spacingAndGlyphs">GND</text>
<text x="574" y="181" font-size="5.4" fill="#1f8c8a" stroke="#1f8c8a" stroke-width="0.32" textLength="9" lengthAdjust="spacingAndGlyphs" transform="rotate(-90 574 181)">R16</text>
<text x="600" y="181" font-size="5.4" fill="#1f8c8a" stroke="#1f8c8a" stroke-width="0.32" textLength="9" lengthAdjust="spacingAndGlyphs" transform="rotate(-90 600 181)">R17</text>
<text x="619" y="179" font-size="5.4" fill="#1f8c8a" stroke="#1f8c8a" stroke-width="0.32" textLength="6.5" lengthAdjust="spacingAndGlyphs" transform="rotate(-90 619 179)">C4</text>
<text x="584.5" y="186" font-size="3" fill="#1f8c8a" stroke="#1f8c8a" stroke-width="0.28" textLength="21" lengthAdjust="spacingAndGlyphs" transform="rotate(-90 584.5 186)">1.8K/5%/0402</text>
<text x="610" y="186" font-size="3" fill="#1f8c8a" stroke="#1f8c8a" stroke-width="0.28" textLength="21" lengthAdjust="spacingAndGlyphs" transform="rotate(-90 610 186)">100K/5%/0402</text>
<text x="630" y="213" font-size="3" fill="#1f8c8a" stroke="#1f8c8a" stroke-width="0.28" textLength="37" lengthAdjust="spacingAndGlyphs" transform="rotate(-90 630 213)">100nF/10V/10%/0402</text>
<rect x="636" y="159.7" width="13.8" height="4.3" fill="#fff" stroke="#a8443e" stroke-width="0.8"/>
<text x="643" y="157" font-size="5.4" fill="#1f8c8a" stroke="#1f8c8a" stroke-width="0.32" text-anchor="middle" textLength="9" lengthAdjust="spacingAndGlyphs">R18</text>
<text x="632" y="168" font-size="3" fill="#1f8c8a" stroke="#1f8c8a" stroke-width="0.28" textLength="21" lengthAdjust="spacingAndGlyphs">220R/5%/0402</text>
<circle cx="655.4" cy="161.8" r="1.55" fill="#2a8a2a"/>
<path d="M655.4 161.8 L655.4 142.7 L661.1 142.7" stroke="#4aa84a" stroke-width="1" fill="none" shape-rendering="crispEdges"/>
<rect x="661.1" y="140.6" width="13.6" height="4.4" fill="#fff" stroke="#a8443e" stroke-width="0.8"/>
<text x="668" y="137.3" font-size="5.4" fill="#1f8c8a" stroke="#1f8c8a" stroke-width="0.32" text-anchor="middle" textLength="9" lengthAdjust="spacingAndGlyphs">R23</text>
<text x="663" y="151" font-size="3" fill="#1f8c8a" stroke="#1f8c8a" stroke-width="0.28" textLength="12" lengthAdjust="spacingAndGlyphs">4K/0402</text>
<path d="M674.7 142.7 L720.3 142.7" stroke="#4aa84a" stroke-width="1" fill="none" shape-rendering="crispEdges"/>
<path d="M655.4 161.8 L720.3 161.6" stroke="#4aa84a" stroke-width="1" fill="none" shape-rendering="crispEdges"/>
<rect x="725.6" y="123.5" width="38.8" height="50.8" stroke="#c46a58" stroke-width="0.8" fill="#ffffc4"/>
<path d="M720.3 129.8 L725.6 129.8" stroke="#a8443e" stroke-width="0.9" fill="none"/>
<text x="719.5" y="129.3" font-size="5.6" fill="#a02828" stroke="#a02828" stroke-width="0.2" text-anchor="end" textLength="2.9" lengthAdjust="spacingAndGlyphs">1</text>
<text x="729" y="131.8" font-size="5.2" fill="#1f8c8a" stroke="#1f8c8a" stroke-width="0.32" textLength="9" lengthAdjust="spacingAndGlyphs">1OE</text>
<path d="M720.3 136 L725.6 136" stroke="#a8443e" stroke-width="0.9" fill="none"/>
<text x="719.5" y="135.5" font-size="5.6" fill="#a02828" stroke="#a02828" stroke-width="0.2" text-anchor="end" textLength="2.9" lengthAdjust="spacingAndGlyphs">2</text>
<text x="729" y="138" font-size="5.2" fill="#1f8c8a" stroke="#1f8c8a" stroke-width="0.32" textLength="6" lengthAdjust="spacingAndGlyphs">1A</text>
<path d="M720.3 142.5 L725.6 142.5" stroke="#a8443e" stroke-width="0.9" fill="none"/>
<text x="719.5" y="142" font-size="5.6" fill="#a02828" stroke="#a02828" stroke-width="0.2" text-anchor="end" textLength="2.9" lengthAdjust="spacingAndGlyphs">3</text>
<text x="729" y="144.5" font-size="5.2" fill="#1f8c8a" stroke="#1f8c8a" stroke-width="0.32" textLength="6" lengthAdjust="spacingAndGlyphs">1Y</text>
<path d="M720.3 149.1 L725.6 149.1" stroke="#a8443e" stroke-width="0.9" fill="none"/>
<text x="719.5" y="148.6" font-size="5.6" fill="#a02828" stroke="#a02828" stroke-width="0.2" text-anchor="end" textLength="2.9" lengthAdjust="spacingAndGlyphs">4</text>
<text x="729" y="151.1" font-size="5.2" fill="#1f8c8a" stroke="#1f8c8a" stroke-width="0.32" textLength="9" lengthAdjust="spacingAndGlyphs">2OE</text>
<path d="M720.3 155.3 L725.6 155.3" stroke="#a8443e" stroke-width="0.9" fill="none"/>
<text x="719.5" y="154.8" font-size="5.6" fill="#a02828" stroke="#a02828" stroke-width="0.2" text-anchor="end" textLength="2.9" lengthAdjust="spacingAndGlyphs">5</text>
<text x="729" y="157.3" font-size="5.2" fill="#1f8c8a" stroke="#1f8c8a" stroke-width="0.32" textLength="6" lengthAdjust="spacingAndGlyphs">2A</text>
<path d="M720.3 161.6 L725.6 161.6" stroke="#a8443e" stroke-width="0.9" fill="none"/>
<text x="719.5" y="161.1" font-size="5.6" fill="#a02828" stroke="#a02828" stroke-width="0.2" text-anchor="end" textLength="2.9" lengthAdjust="spacingAndGlyphs">6</text>
<text x="729" y="163.6" font-size="5.2" fill="#1f8c8a" stroke="#1f8c8a" stroke-width="0.32" textLength="6" lengthAdjust="spacingAndGlyphs">2Y</text>
<path d="M720.3 168 L725.6 168" stroke="#a8443e" stroke-width="0.9" fill="none"/>
<text x="719.5" y="167.5" font-size="5.6" fill="#a02828" stroke="#a02828" stroke-width="0.2" text-anchor="end" textLength="2.9" lengthAdjust="spacingAndGlyphs">7</text>
<text x="729" y="170" font-size="5.2" fill="#1f8c8a" stroke="#1f8c8a" stroke-width="0.32" textLength="9" lengthAdjust="spacingAndGlyphs">GND</text>
<path d="M764.4 129.8 L769.6 129.8" stroke="#a8443e" stroke-width="0.9" fill="none"/>
<text x="765.5" y="129.3" font-size="5.6" fill="#a02828" stroke="#a02828" stroke-width="0.2" textLength="5.8" lengthAdjust="spacingAndGlyphs">14</text>
<text x="761" y="131.8" font-size="5.2" fill="#1f8c8a" stroke="#1f8c8a" stroke-width="0.32" text-anchor="end" textLength="9" lengthAdjust="spacingAndGlyphs">VCC</text>
<path d="M764.4 136 L769.6 136" stroke="#a8443e" stroke-width="0.9" fill="none"/>
<text x="765.5" y="135.5" font-size="5.6" fill="#a02828" stroke="#a02828" stroke-width="0.2" textLength="5.8" lengthAdjust="spacingAndGlyphs">13</text>
<text x="761" y="138" font-size="5.2" fill="#1f8c8a" stroke="#1f8c8a" stroke-width="0.32" text-anchor="end" textLength="9" lengthAdjust="spacingAndGlyphs">4OE</text>
<path d="M764.4 142.5 L769.6 142.5" stroke="#a8443e" stroke-width="0.9" fill="none"/>
<text x="765.5" y="142" font-size="5.6" fill="#a02828" stroke="#a02828" stroke-width="0.2" textLength="5.8" lengthAdjust="spacingAndGlyphs">12</text>
<text x="761" y="144.5" font-size="5.2" fill="#1f8c8a" stroke="#1f8c8a" stroke-width="0.32" text-anchor="end" textLength="6" lengthAdjust="spacingAndGlyphs">4A</text>
<path d="M764.4 149.1 L769.6 149.1" stroke="#a8443e" stroke-width="0.9" fill="none"/>
<text x="765.5" y="148.6" font-size="5.6" fill="#a02828" stroke="#a02828" stroke-width="0.2" textLength="5.8" lengthAdjust="spacingAndGlyphs">11</text>
<text x="761" y="151.1" font-size="5.2" fill="#1f8c8a" stroke="#1f8c8a" stroke-width="0.32" text-anchor="end" textLength="6" lengthAdjust="spacingAndGlyphs">4Y</text>
<path d="M764.4 155.3 L769.6 155.3" stroke="#a8443e" stroke-width="0.9" fill="none"/>
<text x="765.5" y="154.8" font-size="5.6" fill="#a02828" stroke="#a02828" stroke-width="0.2" textLength="5.8" lengthAdjust="spacingAndGlyphs">10</text>
<text x="761" y="157.3" font-size="5.2" fill="#1f8c8a" stroke="#1f8c8a" stroke-width="0.32" text-anchor="end" textLength="9" lengthAdjust="spacingAndGlyphs">3OE</text>
<path d="M764.4 161.6 L769.6 161.6" stroke="#a8443e" stroke-width="0.9" fill="none"/>
<text x="765.5" y="161.1" font-size="5.6" fill="#a02828" stroke="#a02828" stroke-width="0.2" textLength="2.9" lengthAdjust="spacingAndGlyphs">9</text>
<text x="761" y="163.6" font-size="5.2" fill="#1f8c8a" stroke="#1f8c8a" stroke-width="0.32" text-anchor="end" textLength="6" lengthAdjust="spacingAndGlyphs">3A</text>
<path d="M764.4 168 L769.6 168" stroke="#a8443e" stroke-width="0.9" fill="none"/>
<text x="765.5" y="167.5" font-size="5.6" fill="#a02828" stroke="#a02828" stroke-width="0.2" textLength="2.9" lengthAdjust="spacingAndGlyphs">8</text>
<text x="761" y="170" font-size="5.2" fill="#1f8c8a" stroke="#1f8c8a" stroke-width="0.32" text-anchor="end" textLength="6" lengthAdjust="spacingAndGlyphs">3Y</text>
<text x="744" y="121" font-size="5.4" fill="#1f8c8a" stroke="#1f8c8a" stroke-width="0.32" text-anchor="middle" textLength="8" lengthAdjust="spacingAndGlyphs">U3</text>
<text x="745.5" y="180" font-size="5.4" fill="#1f8c8a" stroke="#1f8c8a" stroke-width="0.32" text-anchor="middle" textLength="33" lengthAdjust="spacingAndGlyphs">74LVC125APW</text>
<path d="M713.2 129.8 L720.3 129.8" stroke="#4aa84a" stroke-width="1" fill="none" shape-rendering="crispEdges"/>
<circle cx="713.2" cy="129.8" r="1.55" fill="#2a8a2a"/>
<path d="M713.2 120.7 L713.2 129.8" stroke="#4aa84a" stroke-width="1" fill="none" shape-rendering="crispEdges"/>
<path d="M713.2 114.2 L718.2 117.4 L713.2 120.7 L708.2 117.4Z" stroke="#a8443e" stroke-width="0.8" fill="none"/>
<text x="706" y="119.5" font-size="4.9" fill="#1f8c8a" stroke="#1f8c8a" stroke-width="0.32" text-anchor="end" textLength="23.5" lengthAdjust="spacingAndGlyphs">PWR_FLAG</text>
<path d="M704.6 129.8 L713.2 129.8" stroke="#4aa84a" stroke-width="1" fill="none" shape-rendering="crispEdges"/>
<path d="M704.6 126.8 L699.6 129.8 L704.6 132.8Z" stroke="#a8443e" stroke-width="0.9" fill="none"/>
<text x="705.1" y="128.6" font-size="4.4" fill="#8a8a8a" stroke="#8a8a8a" stroke-width="0.12" textLength="7" lengthAdjust="spacingAndGlyphs">GND</text>
<text x="698.6" y="131.8" font-size="5.2" fill="#1f8c8a" stroke="#1f8c8a" stroke-width="0.32" text-anchor="end" textLength="9.6" lengthAdjust="spacingAndGlyphs">GND</text>
<path d="M680.7 136 L720.3 136" stroke="#4aa84a" stroke-width="1" fill="none" shape-rendering="crispEdges"/>
<path d="M680.7 136 L680.7 155.3 L720.3 155.3" stroke="#4aa84a" stroke-width="1" fill="none" shape-rendering="crispEdges"/>
<text x="681" y="135" font-size="4.9" fill="#3a3a3a" stroke="#3a3a3a" stroke-width="0.18" textLength="16" lengthAdjust="spacingAndGlyphs">PWM_L</text>
<path d="M710.4 149.1 L720.3 149.1" stroke="#4aa84a" stroke-width="1" fill="none" shape-rendering="crispEdges"/>
<path d="M710.4 146.1 L705.4 149.1 L710.4 152.1Z" stroke="#a8443e" stroke-width="0.9" fill="none"/>
<text x="710.9" y="147.9" font-size="4.4" fill="#8a8a8a" stroke="#8a8a8a" stroke-width="0.12" textLength="7" lengthAdjust="spacingAndGlyphs">GND</text>
<text x="704.4" y="151.1" font-size="5.2" fill="#1f8c8a" stroke="#1f8c8a" stroke-width="0.32" text-anchor="end" textLength="9.6" lengthAdjust="spacingAndGlyphs">GND</text>
<path d="M707 168 L720.3 168" stroke="#4aa84a" stroke-width="1" fill="none" shape-rendering="crispEdges"/>
<path d="M707 165 L702 168 L707 171Z" stroke="#a8443e" stroke-width="0.9" fill="none"/>
<text x="707.5" y="166.8" font-size="4.4" fill="#8a8a8a" stroke="#8a8a8a" stroke-width="0.12" textLength="7" lengthAdjust="spacingAndGlyphs">GND</text>
<text x="708" y="174.5" font-size="5.2" fill="#1f8c8a" stroke="#1f8c8a" stroke-width="0.32" textLength="9.5" lengthAdjust="spacingAndGlyphs">GND</text>
<path d="M769.6 129.4 L783.7 129.4" stroke="#4aa84a" stroke-width="1" fill="none" shape-rendering="crispEdges"/>
<path d="M783.7 110.5 L783.7 129.4" stroke="#4aa84a" stroke-width="1" fill="none" shape-rendering="crispEdges"/>
<path d="M783.7 117 V112 M781.5 114 L783.7 111 L785.9 114" stroke="#a8443e" stroke-width="0.8" fill="none"/>
<text x="783.7" y="109.5" font-size="5.2" fill="#1f8c8a" stroke="#1f8c8a" stroke-width="0.32" text-anchor="middle"></text>
<text x="767" y="115" font-size="5.2" fill="#1f8c8a" stroke="#1f8c8a" stroke-width="0.32" textLength="14.5" lengthAdjust="spacingAndGlyphs">+3.3V</text>
<circle cx="783.7" cy="123.5" r="1.55" fill="#2a8a2a"/>
<path d="M783.7 123.5 L818.2 123.5" stroke="#4aa84a" stroke-width="1" fill="none" shape-rendering="crispEdges"/>
<rect x="798" y="119" width="6.5" height="9" fill="#fff"/>
<path d="M799.6 119.75 L799.6 127.25" stroke="#a8443e" stroke-width="1" fill="none"/>
<path d="M803 119.75 L803 127.25" stroke="#a8443e" stroke-width="1" fill="none"/>
<path d="M818.2 120.5 L824.2 123.5 L818.2 126.5Z" stroke="#a8443e" stroke-width="0.9" fill="none"/>
<text x="813.2" y="122.3" font-size="4.4" fill="#8a8a8a" stroke="#8a8a8a" stroke-width="0.12" textLength="8.5" lengthAdjust="spacingAndGlyphs">GND</text>
<text x="826.2" y="125.5" font-size="5.2" fill="#1f8c8a" stroke="#1f8c8a" stroke-width="0.32" textLength="9.6" lengthAdjust="spacingAndGlyphs">GND</text>
<text x="799" y="117" font-size="5.4" fill="#1f8c8a" stroke="#1f8c8a" stroke-width="0.32" textLength="7" lengthAdjust="spacingAndGlyphs">C5</text>
<text x="784" y="130.5" font-size="3" fill="#1f8c8a" stroke="#1f8c8a" stroke-width="0.28" textLength="38" lengthAdjust="spacingAndGlyphs">100nF/10V/10%/0402</text>
<path d="M769.6 136 L776 136" stroke="#4aa84a" stroke-width="1" fill="none" shape-rendering="crispEdges"/>
<path d="M776 133 L782 136 L776 139Z" stroke="#a8443e" stroke-width="0.9" fill="none"/>
<text x="771" y="134.8" font-size="4.4" fill="#8a8a8a" stroke="#8a8a8a" stroke-width="0.12" textLength="8.5" lengthAdjust="spacingAndGlyphs">GND</text>
<text x="784" y="138" font-size="5.2" fill="#1f8c8a" stroke="#1f8c8a" stroke-width="0.32" textLength="9.6" lengthAdjust="spacingAndGlyphs">GND</text>
<path d="M769.6 155.3 L776 155.3" stroke="#4aa84a" stroke-width="1" fill="none" shape-rendering="crispEdges"/>
<path d="M776 152.3 L782 155.3 L776 158.3Z" stroke="#a8443e" stroke-width="0.9" fill="none"/>
<text x="771" y="154.1" font-size="4.4" fill="#8a8a8a" stroke="#8a8a8a" stroke-width="0.12" textLength="8.5" lengthAdjust="spacingAndGlyphs">GND</text>
<text x="784" y="157.3" font-size="5.2" fill="#1f8c8a" stroke="#1f8c8a" stroke-width="0.32" textLength="9.6" lengthAdjust="spacingAndGlyphs">GND</text>
<path d="M769.6 140 L802.9 140 L802.9 161.9 L769.6 161.9" stroke="#4aa84a" stroke-width="1" fill="none" shape-rendering="crispEdges"/>
<text x="786" y="139" font-size="4.9" fill="#3a3a3a" stroke="#3a3a3a" stroke-width="0.18" textLength="16" lengthAdjust="spacingAndGlyphs">PWM_R</text>
<path d="M769.6 149 L807.9 149" stroke="#4aa84a" stroke-width="1" fill="none" shape-rendering="crispEdges"/>
<rect x="807.9" y="146.8" width="14.2" height="4.4" fill="#fff" stroke="#a8443e" stroke-width="0.8"/>
<text x="815" y="143.5" font-size="5.4" fill="#1f8c8a" stroke="#1f8c8a" stroke-width="0.32" text-anchor="middle" textLength="9.5" lengthAdjust="spacingAndGlyphs">R22</text>
<text x="810" y="157" font-size="3" fill="#1f8c8a" stroke="#1f8c8a" stroke-width="0.28" textLength="12" lengthAdjust="spacingAndGlyphs">4K/0402</text>
<path d="M822.1 149 L827.7 149 L827.7 168.2" stroke="#4aa84a" stroke-width="1" fill="none" shape-rendering="crispEdges"/>
<path d="M769.6 168.2 L917.6 168.2 L917.6 226 L751.2 226 L751.2 235" stroke="#4aa84a" stroke-width="1" fill="none" shape-rendering="crispEdges"/>
<circle cx="827.7" cy="168.2" r="1.55" fill="#2a8a2a"/>
<rect x="840.1" y="166" width="14.3" height="4.4" fill="#fff" stroke="#a8443e" stroke-width="0.8"/>
<text x="847" y="163" font-size="5.4" fill="#1f8c8a" stroke="#1f8c8a" stroke-width="0.32" text-anchor="middle" textLength="9.5" lengthAdjust="spacingAndGlyphs">R19</text>
<text x="837" y="176" font-size="3" fill="#1f8c8a" stroke="#1f8c8a" stroke-width="0.28" textLength="22" lengthAdjust="spacingAndGlyphs">220R/5%/0402</text>
<circle cx="866.5" cy="168.2" r="1.55" fill="#2a8a2a"/>
<circle cx="879.2" cy="168.2" r="1.55" fill="#2a8a2a"/>
<circle cx="904.9" cy="168.2" r="1.55" fill="#2a8a2a"/>
<rect x="890" y="163" width="6.5" height="10" fill="#fff"/>
<path d="M891.5 164.45 L891.5 171.95" stroke="#a8443e" stroke-width="1" fill="none"/>
<path d="M894.9 164.45 L894.9 171.95" stroke="#a8443e" stroke-width="1" fill="none"/>
<text x="882" y="166" font-size="5.4" fill="#1f8c8a" stroke="#1f8c8a" stroke-width="0.32" textLength="7.5" lengthAdjust="spacingAndGlyphs">C7</text>
<text x="897" y="166.5" font-size="3" fill="#1f8c8a" stroke="#1f8c8a" stroke-width="0.28" textLength="30" lengthAdjust="spacingAndGlyphs">47uF/6.3V/20%/0805</text>
<path d="M866.5 168.2 L866.5 199.8 L904.9 199.8" stroke="#4aa84a" stroke-width="1" fill="none" shape-rendering="crispEdges"/>
<rect x="862" y="178" width="9" height="6" fill="#fff"/>
<path d="M862.75 179.3 L870.25 179.3" stroke="#a8443e" stroke-width="1" fill="none"/>
<path d="M862.75 182.7 L870.25 182.7" stroke="#a8443e" stroke-width="1" fill="none"/>
<text x="862" y="184" font-size="5.4" fill="#1f8c8a" stroke="#1f8c8a" stroke-width="0.32" textLength="6.5" lengthAdjust="spacingAndGlyphs" transform="rotate(-90 862 184)">C6</text>
<text x="869" y="222" font-size="3" fill="#1f8c8a" stroke="#1f8c8a" stroke-width="0.28" textLength="37" lengthAdjust="spacingAndGlyphs" transform="rotate(-90 869 222)">100nF/10V/10%/0402</text>
<path d="M879.2 168.2 L879.2 199.8" stroke="#4aa84a" stroke-width="1" fill="none" shape-rendering="crispEdges"/>
<rect x="877.1" y="173.8" width="4.2" height="14.2" fill="#fff" stroke="#a8443e" stroke-width="0.8"/>
<circle cx="879.2" cy="199.8" r="1.55" fill="#2a8a2a"/>
<path d="M904.9 168.2 L904.9 199.8" stroke="#4aa84a" stroke-width="1" fill="none" shape-rendering="crispEdges"/>
<rect x="902.8" y="173.8" width="4.2" height="14.2" fill="#fff" stroke="#a8443e" stroke-width="0.8"/>
<circle cx="904.9" cy="199.8" r="1.55" fill="#2a8a2a"/>
<text x="875" y="185" font-size="5.4" fill="#1f8c8a" stroke="#1f8c8a" stroke-width="0.32" textLength="9" lengthAdjust="spacingAndGlyphs" transform="rotate(-90 875 185)">R20</text>
<text x="901" y="185" font-size="5.4" fill="#1f8c8a" stroke="#1f8c8a" stroke-width="0.32" textLength="9" lengthAdjust="spacingAndGlyphs" transform="rotate(-90 901 185)">R21</text>
<text x="885" y="192" font-size="3" fill="#1f8c8a" stroke="#1f8c8a" stroke-width="0.28" textLength="21" lengthAdjust="spacingAndGlyphs" transform="rotate(-90 885 192)">100K/5%/0402</text>
<text x="911" y="192" font-size="3" fill="#1f8c8a" stroke="#1f8c8a" stroke-width="0.28" textLength="21" lengthAdjust="spacingAndGlyphs" transform="rotate(-90 911 192)">1.8K/5%/0402</text>
<path d="M904.9 199.8 L904.9 203" stroke="#4aa84a" stroke-width="1" fill="none" shape-rendering="crispEdges"/>
<path d="M902.3 203 L904.9 207.5 L907.5 203Z" stroke="#a8443e" stroke-width="0.8" fill="none"/>
<text x="903.7" y="202.5" font-size="4.4" fill="#8a8a8a" stroke="#8a8a8a" stroke-width="0.12" textLength="7" lengthAdjust="spacingAndGlyphs" transform="rotate(-90 903.7 202.5)">GND</text>
<text x="907" y="215" font-size="5.2" fill="#1f8c8a" stroke="#1f8c8a" stroke-width="0.32" textLength="9.5" lengthAdjust="spacingAndGlyphs">GND</text>
<text x="694" y="224.5" font-size="4.9" fill="#3a3a3a" stroke="#3a3a3a" stroke-width="0.18" textLength="32" lengthAdjust="spacingAndGlyphs">PWM_AUDIO_L</text>
<text x="758" y="224.5" font-size="4.9" fill="#3a3a3a" stroke="#3a3a3a" stroke-width="0.18" textLength="33" lengthAdjust="spacingAndGlyphs">PWM_AUDIO_R</text>
<path d="M732.2 218 L732.2 235" stroke="#4aa84a" stroke-width="1" fill="none" shape-rendering="crispEdges"/>
<path d="M729.6 219 L732.2 214.5 L734.8 219Z" stroke="#a8443e" stroke-width="0.8" fill="none"/>
<text x="726" y="214" font-size="5.2" fill="#1f8c8a" stroke="#1f8c8a" stroke-width="0.32" text-anchor="middle" textLength="9.5" lengthAdjust="spacingAndGlyphs">GND</text>
<text x="735" y="223" font-size="3" fill="#8a8a8a" stroke="#8a8a8a" stroke-width="0.28" textLength="6" lengthAdjust="spacingAndGlyphs" transform="rotate(-90 735 223)">GND</text>
<path d="M732.2 235 L732.2 238.3" stroke="#a8443e" stroke-width="0.9" fill="none"/>
<path d="M738.3 235 L738.3 238.3" stroke="#a8443e" stroke-width="0.9" fill="none"/>
<path d="M745 235 L745 238.3" stroke="#a8443e" stroke-width="0.9" fill="none"/>
<path d="M751.2 235 L751.2 238.3" stroke="#a8443e" stroke-width="0.9" fill="none"/>
<path d="M757.3 235 L757.3 238.3" stroke="#a8443e" stroke-width="0.9" fill="none"/>
<path d="M743.4 230.9 L746.6 234.1 M746.6 230.9 L743.4 234.1" stroke="#3333bb" stroke-width="0.8"/>
<path d="M755.7 230.9 L758.9 234.1 M758.9 230.9 L755.7 234.1" stroke="#3333bb" stroke-width="0.8"/>
<rect x="728.9" y="238.3" width="32.3" height="32" stroke="#a8443e" stroke-width="0.8" fill="none"/>
<rect x="733" y="264" width="24" height="4" stroke="#a8443e" stroke-width="0.8" fill="none"/>
<rect x="735" y="270.3" width="20" height="3" stroke="#a8443e" stroke-width="0.8" fill="none"/>
<path d="M733 241 V258 L735 261 M738.3 241 V255 L741 258 L738 261 M745 241 V252 H741 M751.2 241 V255 L748.5 258 L751 261" stroke="#a8443e" stroke-width="0.7" fill="none"/>
<path d="M741 250.5 L743 252 L741 253.5Z" fill="#9a1010"/>
<text x="732.5" y="248" font-size="3" fill="#a8443e" stroke="#a8443e" stroke-width="0.28" textLength="6" lengthAdjust="spacingAndGlyphs" transform="rotate(-90 732.5 248)">GND</text>
<text x="766.1" y="247.8" font-size="5.8" fill="#1f8c8a" stroke="#1f8c8a" stroke-width="0.32" textLength="40" lengthAdjust="spacingAndGlyphs">AUDIO_JACK_1</text>
<text x="766.6" y="257.6" font-size="5.8" fill="#1f8c8a" stroke="#1f8c8a" stroke-width="0.32" textLength="67" lengthAdjust="spacingAndGlyphs">PJ-W475-05D2-LF_V2</text>
<path d="M661.8 305 L661.8 314.8 L710 314.8" stroke="#4aa84a" stroke-width="1" fill="none" shape-rendering="crispEdges"/>
<path d="M661.8 307 V302 M659.6 304 L661.8 301 L664 304" stroke="#a8443e" stroke-width="0.8" fill="none"/>
<text x="661.8" y="299.5" font-size="5.2" fill="#1f8c8a" stroke="#1f8c8a" stroke-width="0.32" text-anchor="middle" textLength="14" lengthAdjust="spacingAndGlyphs">+3.3V</text>
<text x="664.5" y="310" font-size="3" fill="#8a8a8a" stroke="#8a8a8a" stroke-width="0.28" textLength="7" lengthAdjust="spacingAndGlyphs" transform="rotate(-90 664.5 310)">+3V3</text>
<circle cx="680.9" cy="314.8" r="1.55" fill="#2a8a2a"/>
<rect x="691" y="310" width="7" height="9" fill="#fff"/>
<path d="M692.7 311.05 L692.7 318.55" stroke="#a8443e" stroke-width="1" fill="none"/>
<path d="M696.1 311.05 L696.1 318.55" stroke="#a8443e" stroke-width="1" fill="none"/>
<text x="694.5" y="304" font-size="5.2" fill="#1f8c8a" stroke="#1f8c8a" stroke-width="0.32" text-anchor="middle" textLength="7" lengthAdjust="spacingAndGlyphs">C1</text>
<text x="682" y="308.5" font-size="3" fill="#1f8c8a" stroke="#1f8c8a" stroke-width="0.28" textLength="24" lengthAdjust="spacingAndGlyphs">10uF/6.3V/0603</text>
<path d="M710 311.8 L716 314.8 L710 317.8Z" stroke="#a8443e" stroke-width="0.9" fill="none"/>
<text x="705" y="313.6" font-size="4.4" fill="#8a8a8a" stroke="#8a8a8a" stroke-width="0.12" textLength="8.5" lengthAdjust="spacingAndGlyphs">GND</text>
<text x="718" y="316.8" font-size="5.2" fill="#1f8c8a" stroke="#1f8c8a" stroke-width="0.32" textLength="9.6" lengthAdjust="spacingAndGlyphs">GND</text>
<path d="M680.9 314.8 L680.9 346.9 L751 346.9" stroke="#4aa84a" stroke-width="1" fill="none" shape-rendering="crispEdges"/>
<rect x="751" y="330.7" width="25.8" height="64" stroke="#a8443e" stroke-width="0.8" fill="none"/>
<path d="M738.6 333 L751 333" stroke="#a8443e" stroke-width="0.9" fill="none"/>
<text x="742" y="332.4" font-size="4.6" fill="#a8443e" stroke="#a8443e" stroke-width="0.32" textLength="2.6" lengthAdjust="spacingAndGlyphs">2</text>
<text x="754" y="334.6" font-size="3.8" fill="#1f8c8a" stroke="#1f8c8a" stroke-width="0.28" textLength="22.5" lengthAdjust="spacingAndGlyphs">CS/DAT3/CS</text>
<path d="M738.6 339.7 L751 339.7" stroke="#a8443e" stroke-width="0.9" fill="none"/>
<text x="742" y="339.1" font-size="4.6" fill="#a8443e" stroke="#a8443e" stroke-width="0.32" textLength="2.6" lengthAdjust="spacingAndGlyphs">3</text>
<text x="754" y="341.3" font-size="3.8" fill="#1f8c8a" stroke="#1f8c8a" stroke-width="0.28" textLength="13.5" lengthAdjust="spacingAndGlyphs">CMD/DI</text>
<path d="M738.6 346.9 L751 346.9" stroke="#a8443e" stroke-width="0.9" fill="none"/>
<text x="742" y="346.3" font-size="4.6" fill="#a8443e" stroke="#a8443e" stroke-width="0.32" textLength="2.6" lengthAdjust="spacingAndGlyphs">4</text>
<text x="754" y="348.5" font-size="3.8" fill="#1f8c8a" stroke="#1f8c8a" stroke-width="0.28" textLength="6.75" lengthAdjust="spacingAndGlyphs">VDD</text>
<path d="M738.6 352.7 L751 352.7" stroke="#a8443e" stroke-width="0.9" fill="none"/>
<text x="742" y="352.1" font-size="4.6" fill="#a8443e" stroke="#a8443e" stroke-width="0.32" textLength="2.6" lengthAdjust="spacingAndGlyphs">6</text>
<text x="754" y="354.3" font-size="3.8" fill="#1f8c8a" stroke="#1f8c8a" stroke-width="0.28" textLength="6.75" lengthAdjust="spacingAndGlyphs">VSS</text>
<path d="M738.6 359.1 L751 359.1" stroke="#a8443e" stroke-width="0.9" fill="none"/>
<text x="742" y="358.5" font-size="4.6" fill="#a8443e" stroke="#a8443e" stroke-width="0.32" textLength="2.6" lengthAdjust="spacingAndGlyphs">5</text>
<text x="754" y="360.7" font-size="3.8" fill="#1f8c8a" stroke="#1f8c8a" stroke-width="0.28" textLength="18" lengthAdjust="spacingAndGlyphs">CLK/SCLK</text>
<path d="M738.6 365.5 L751 365.5" stroke="#a8443e" stroke-width="0.9" fill="none"/>
<text x="742" y="364.9" font-size="4.6" fill="#a8443e" stroke="#a8443e" stroke-width="0.32" textLength="2.6" lengthAdjust="spacingAndGlyphs">7</text>
<text x="754" y="367.1" font-size="3.8" fill="#1f8c8a" stroke="#1f8c8a" stroke-width="0.28" textLength="15.75" lengthAdjust="spacingAndGlyphs">DAT0/DO</text>
<path d="M738.6 372.1 L751 372.1" stroke="#a8443e" stroke-width="0.9" fill="none"/>
<text x="742" y="371.5" font-size="4.6" fill="#a8443e" stroke="#a8443e" stroke-width="0.32" textLength="2.6" lengthAdjust="spacingAndGlyphs">8</text>
<text x="754" y="373.7" font-size="3.8" fill="#1f8c8a" stroke="#1f8c8a" stroke-width="0.28" textLength="18" lengthAdjust="spacingAndGlyphs">DAT1/RES</text>
<path d="M738.6 378.8 L751 378.8" stroke="#a8443e" stroke-width="0.9" fill="none"/>
<text x="742" y="378.2" font-size="4.6" fill="#a8443e" stroke="#a8443e" stroke-width="0.32" textLength="2.6" lengthAdjust="spacingAndGlyphs">1</text>
<text x="754" y="380.4" font-size="3.8" fill="#1f8c8a" stroke="#1f8c8a" stroke-width="0.28" textLength="18" lengthAdjust="spacingAndGlyphs">DAT2/RES</text>
<path d="M738.6 385.1 L751 385.1" stroke="#a8443e" stroke-width="0.9" fill="none"/>
<text x="742" y="384.5" font-size="4.6" fill="#a8443e" stroke="#a8443e" stroke-width="0.32" textLength="2.6" lengthAdjust="spacingAndGlyphs">9</text>
<path d="M738.6 389.3 L751 389.3" stroke="#a8443e" stroke-width="0.9" fill="none"/>
<text x="742" y="388.7" font-size="4.6" fill="#a8443e" stroke="#a8443e" stroke-width="0.32" textLength="5.2" lengthAdjust="spacingAndGlyphs">10</text>
<path d="M754 385.1 H774 V392 H754 M762 385.1 L766 388.5" stroke="#a8443e" stroke-width="0.7" fill="none"/>
<path d="M713 333 L738.6 333" stroke="#4aa84a" stroke-width="1" fill="none" shape-rendering="crispEdges"/>
<text x="715" y="331.8" font-size="4.9" fill="#3a3a3a" stroke="#3a3a3a" stroke-width="0.18" textLength="25" lengthAdjust="spacingAndGlyphs">SPI0_CSn1</text>
<path d="M713 339.7 L738.6 339.7" stroke="#4aa84a" stroke-width="1" fill="none" shape-rendering="crispEdges"/>
<text x="715" y="338.5" font-size="4.9" fill="#3a3a3a" stroke="#3a3a3a" stroke-width="0.18" textLength="25" lengthAdjust="spacingAndGlyphs">SPI0_MOSI</text>
<path d="M733 352.7 L738.6 352.7" stroke="#4aa84a" stroke-width="1" fill="none" shape-rendering="crispEdges"/>
<path d="M733 349.7 L728 352.7 L733 355.7Z" stroke="#a8443e" stroke-width="0.9" fill="none"/>
<text x="733.5" y="351.5" font-size="4.4" fill="#8a8a8a" stroke="#8a8a8a" stroke-width="0.12" textLength="7" lengthAdjust="spacingAndGlyphs">GND</text>
<text x="727" y="354.7" font-size="5.2" fill="#1f8c8a" stroke="#1f8c8a" stroke-width="0.32" text-anchor="end" textLength="9.6" lengthAdjust="spacingAndGlyphs">GND</text>
<path d="M704 359.1 L738.6 359.1" stroke="#4aa84a" stroke-width="1" fill="none" shape-rendering="crispEdges"/>
<text x="718" y="357.8" font-size="4.9" fill="#3a3a3a" stroke="#3a3a3a" stroke-width="0.18" textLength="21" lengthAdjust="spacingAndGlyphs">SPI0_CLK</text>
<path d="M705 365.5 L738.6 365.5" stroke="#4aa84a" stroke-width="1" fill="none" shape-rendering="crispEdges"/>
<text x="712" y="364.3" font-size="4.9" fill="#3a3a3a" stroke="#3a3a3a" stroke-width="0.18" textLength="25" lengthAdjust="spacingAndGlyphs">SPI0_MISO</text>
<path d="M737 370.5 L740.2 373.7 M740.2 370.5 L737 373.7" stroke="#3333bb" stroke-width="0.8"/>
<path d="M737 377.2 L740.2 380.4 M740.2 377.2 L737 380.4" stroke="#3333bb" stroke-width="0.8"/>
<path d="M737 383.5 L740.2 386.7 M740.2 383.5 L737 386.7" stroke="#3333bb" stroke-width="0.8"/>
<path d="M735 389.3 L738.6 389.3" stroke="#4aa84a" stroke-width="1" fill="none" shape-rendering="crispEdges"/>
<path d="M735 389.3 L735 399" stroke="#4aa84a" stroke-width="1" fill="none" shape-rendering="crispEdges"/>
<path d="M732.4 399 L735 403.5 L737.6 399Z" stroke="#a8443e" stroke-width="0.8" fill="none"/>
<text x="733.8" y="398.5" font-size="4.4" fill="#8a8a8a" stroke="#8a8a8a" stroke-width="0.12" textLength="7" lengthAdjust="spacingAndGlyphs" transform="rotate(-90 733.8 398.5)">GND</text>
<text x="735.5" y="409.5" font-size="5.2" fill="#1f8c8a" stroke="#1f8c8a" stroke-width="0.32" text-anchor="middle" textLength="9.5" lengthAdjust="spacingAndGlyphs">GND</text>
<text x="745.3" y="322.9" font-size="5.4" fill="#1f8c8a" stroke="#1f8c8a" stroke-width="0.32" textLength="26.2" lengthAdjust="spacingAndGlyphs">MICRO_SD1</text>
<text x="787" y="396" font-size="5.2" fill="#1f8c8a" stroke="#1f8c8a" stroke-width="0.32" textLength="65" lengthAdjust="spacingAndGlyphs" transform="rotate(-90 787 396)">MICRO_SD(TFC-WPAPR-08)</text>
<path d="M660.7 419.7 L702.8 419.7" stroke="#4aa84a" stroke-width="1" fill="none" shape-rendering="crispEdges"/>
<path d="M709 419.7 L763.9 419.7" stroke="#4aa84a" stroke-width="1" fill="none" shape-rendering="crispEdges"/>
<path d="M660.7 468.3 L702.8 468.3" stroke="#4aa84a" stroke-width="1" fill="none" shape-rendering="crispEdges"/>
<path d="M709 468.3 L763.9 468.3" stroke="#4aa84a" stroke-width="1" fill="none" shape-rendering="crispEdges"/>
<circle cx="689.6" cy="419.7" r="1.55" fill="#2a8a2a"/>
<circle cx="689.6" cy="444.1" r="1.55" fill="#2a8a2a"/>
<circle cx="702.8" cy="444.1" r="1.55" fill="#2a8a2a"/>
<circle cx="689.6" cy="468.3" r="1.55" fill="#2a8a2a"/>
<path d="M689.6 419.7 L689.6 468.3" stroke="#4aa84a" stroke-width="1" fill="none" shape-rendering="crispEdges"/>
<rect x="687.5" y="425.4" width="4.2" height="13.2" fill="#fff" stroke="#a8443e" stroke-width="0.8"/>
<rect x="687.5" y="449.4" width="4.2" height="13.2" fill="#fff" stroke="#a8443e" stroke-width="0.8"/>
<path d="M668 444.1 L702.8 444.1" stroke="#4aa84a" stroke-width="1" fill="none" shape-rendering="crispEdges"/>
<path d="M668 444.1 H663 M665 441.9 L662 444.1 L665 446.3" stroke="#a8443e" stroke-width="0.8" fill="none"/>
<text x="660" y="446.1" font-size="5.2" fill="#1f8c8a" stroke="#1f8c8a" stroke-width="0.32" text-anchor="end"></text>
<text x="663" y="450" font-size="5.2" fill="#1f8c8a" stroke="#1f8c8a" stroke-width="0.32" textLength="14" lengthAdjust="spacingAndGlyphs" transform="rotate(-90 663 450)">+3.3V</text>
<text x="669" y="442.5" font-size="3" fill="#8a8a8a" stroke="#8a8a8a" stroke-width="0.28" textLength="5" lengthAdjust="spacingAndGlyphs">3V3</text>
<circle cx="706.1" cy="432" r="6.7" stroke="#a8443e" stroke-width="0.9" fill="none"/>
<path d="M701 430 H711 M701.5 432.5 H710.5 M702.5 425 V430 M709 425 V430 M702.5 434.5 V440 M705 428.5 L706.5 426.8 L708 428.5" stroke="#a83030" stroke-width="0.8" fill="none"/>
<rect x="703.5" y="431.5" width="5" height="2" fill="#a02020"/>
<text x="702" y="423.5" font-size="3.4" fill="#a8443e" stroke="#a8443e" stroke-width="0.28" textLength="1.8" lengthAdjust="spacingAndGlyphs">2</text>
<text x="709.5" y="423.5" font-size="3.4" fill="#a8443e" stroke="#a8443e" stroke-width="0.28" textLength="1.8" lengthAdjust="spacingAndGlyphs">1</text>
<circle cx="706.1" cy="454.6" r="6.7" stroke="#a8443e" stroke-width="0.9" fill="none"/>
<path d="M701 456.6 H711 M701.5 454.1 H710.5 M702.5 461.6 V456.6 M709 461.6 V456.6 M702.5 452.1 V446.6 M705 458.1 L706.5 459.8 L708 458.1" stroke="#a83030" stroke-width="0.8" fill="none"/>
<rect x="703.5" y="453.1" width="5" height="2" fill="#a02020"/>
<text x="702" y="464.1" font-size="3.4" fill="#a8443e" stroke="#a8443e" stroke-width="0.28" textLength="1.8" lengthAdjust="spacingAndGlyphs">2</text>
<text x="709.5" y="464.1" font-size="3.4" fill="#a8443e" stroke="#a8443e" stroke-width="0.28" textLength="1.8" lengthAdjust="spacingAndGlyphs">1</text>
<path d="M702.8 419.7 L702.8 424" stroke="#a8443e" stroke-width="0.9" fill="none"/>
<path d="M709 419.7 L709 424" stroke="#a8443e" stroke-width="0.9" fill="none"/>
<path d="M702.8 464 L702.8 468.3" stroke="#a8443e" stroke-width="0.9" fill="none"/>
<path d="M709 464 L709 468.3" stroke="#a8443e" stroke-width="0.9" fill="none"/>
<path d="M702.8 438 L702.8 450" stroke="#4aa84a" stroke-width="1" fill="none" shape-rendering="crispEdges"/>
<text x="665" y="418" font-size="4.9" fill="#3a3a3a" stroke="#3a3a3a" stroke-width="0.18" textLength="32" lengthAdjust="spacingAndGlyphs">I2C1A_SCL_33</text>
<text x="729" y="418" font-size="4.9" fill="#3a3a3a" stroke="#3a3a3a" stroke-width="0.18" textLength="30" lengthAdjust="spacingAndGlyphs">I2C1A_SCL_5</text>
<text x="665" y="467" font-size="4.9" fill="#3a3a3a" stroke="#3a3a3a" stroke-width="0.18" textLength="32" lengthAdjust="spacingAndGlyphs">I2C1A_SDA_33</text>
<text x="725" y="467" font-size="4.9" fill="#3a3a3a" stroke="#3a3a3a" stroke-width="0.18" textLength="30" lengthAdjust="spacingAndGlyphs">I2C1A_SDA_5</text>
<text x="715" y="426.5" font-size="6.2" fill="#1f8c8a" stroke="#1f8c8a" stroke-width="0.32" textLength="12.5" lengthAdjust="spacingAndGlyphs">FET2</text>
<text x="715" y="433.5" font-size="6.2" fill="#1f8c8a" stroke="#1f8c8a" stroke-width="0.32" textLength="22" lengthAdjust="spacingAndGlyphs">BSS138</text>
<text x="717" y="455" font-size="6.2" fill="#1f8c8a" stroke="#1f8c8a" stroke-width="0.32" textLength="13" lengthAdjust="spacingAndGlyphs">FET3</text>
<text x="717" y="462" font-size="6.2" fill="#1f8c8a" stroke="#1f8c8a" stroke-width="0.32" textLength="22" lengthAdjust="spacingAndGlyphs">BSS138</text>
<text x="677" y="429.5" font-size="5" fill="#1f8c8a" stroke="#1f8c8a" stroke-width="0.32" textLength="9" lengthAdjust="spacingAndGlyphs">R26</text>
<text x="677" y="461" font-size="5" fill="#1f8c8a" stroke="#1f8c8a" stroke-width="0.32" textLength="9" lengthAdjust="spacingAndGlyphs">R28</text>
<text x="696" y="437" font-size="3" fill="#1f8c8a" stroke="#1f8c8a" stroke-width="0.28" textLength="11" lengthAdjust="spacingAndGlyphs" transform="rotate(-90 696 437)">10K/0402</text>
<text x="696" y="461" font-size="3" fill="#1f8c8a" stroke="#1f8c8a" stroke-width="0.28" textLength="11" lengthAdjust="spacingAndGlyphs" transform="rotate(-90 696 461)">10K/0402</text>
<path d="M911.2 295.2 H917.7 V424 M911.2 295.2 Q906 297 904.8 302 V420 Q905 426 911 428.5 H917.7" stroke="#a8443e" stroke-width="0.9" fill="none"/>
<path d="M911.2 289.8 L911.2 295.2" stroke="#a8443e" stroke-width="0.9" fill="none"/>
<path d="M917.7 289.8 L917.7 295.2" stroke="#a8443e" stroke-width="0.9" fill="none"/>
<text x="909.5" y="293.5" font-size="2.6" fill="#a8443e" stroke="#a8443e" stroke-width="0.28" textLength="3" lengthAdjust="spacingAndGlyphs" transform="rotate(-90 909.5 293.5)">sh</text>
<text x="916" y="293.5" font-size="2.6" fill="#a8443e" stroke="#a8443e" stroke-width="0.28" textLength="3" lengthAdjust="spacingAndGlyphs" transform="rotate(-90 916 293.5)">sh</text>
<path d="M895 282.6 L917.7 282.6 L917.7 289.8" stroke="#4aa84a" stroke-width="1" fill="none" shape-rendering="crispEdges"/>
<path d="M911.2 282.6 L911.2 289.8" stroke="#4aa84a" stroke-width="1" fill="none" shape-rendering="crispEdges"/>
<circle cx="911.2" cy="282.6" r="1.55" fill="#2a8a2a"/>
<path d="M895 279.6 L890 282.6 L895 285.6Z" stroke="#a8443e" stroke-width="0.9" fill="none"/>
<text x="895.5" y="281.4" font-size="4.4" fill="#8a8a8a" stroke="#8a8a8a" stroke-width="0.12" textLength="7" lengthAdjust="spacingAndGlyphs">GND</text>
<text x="889" y="284.6" font-size="5.2" fill="#1f8c8a" stroke="#1f8c8a" stroke-width="0.32" text-anchor="end" textLength="9.6" lengthAdjust="spacingAndGlyphs">GND</text>
<text x="906" y="277.5" font-size="5.2" fill="#1f8c8a" stroke="#1f8c8a" stroke-width="0.32" textLength="13.5" lengthAdjust="spacingAndGlyphs">HDMI1</text>
<path d="M911.2 428.5 L911.2 430.5" stroke="#a8443e" stroke-width="0.9" fill="none"/>
<path d="M917.7 424 L917.7 430.5" stroke="#a8443e" stroke-width="0.9" fill="none"/>
<path d="M891.2 436.1 L917.7 436.1 L917.7 430.5" stroke="#4aa84a" stroke-width="1" fill="none" shape-rendering="crispEdges"/>
<path d="M911.2 430.5 L911.2 436.1" stroke="#4aa84a" stroke-width="1" fill="none" shape-rendering="crispEdges"/>
<circle cx="911.2" cy="436.1" r="1.55" fill="#2a8a2a"/>
<path d="M891.2 433.1 L886.2 436.1 L891.2 439.1Z" stroke="#a8443e" stroke-width="0.9" fill="none"/>
<text x="891.7" y="434.9" font-size="4.4" fill="#8a8a8a" stroke="#8a8a8a" stroke-width="0.12" textLength="7" lengthAdjust="spacingAndGlyphs">GND</text>
<text x="885.2" y="438.1" font-size="5.2" fill="#1f8c8a" stroke="#1f8c8a" stroke-width="0.32" text-anchor="end" textLength="9.6" lengthAdjust="spacingAndGlyphs">GND</text>
<text x="893" y="446.1" font-size="5.2" fill="#1f8c8a" stroke="#1f8c8a" stroke-width="0.32" textLength="34.6" lengthAdjust="spacingAndGlyphs">HDMI-SWM-19</text>
<path d="M898 302.5 L913.4 302.5" stroke="#a8443e" stroke-width="0.9" fill="none"/>
<text x="899" y="301.9" font-size="4.6" fill="#a02828" stroke="#a02828" stroke-width="0.2" textLength="2.5" lengthAdjust="spacingAndGlyphs">1</text>
<rect x="913.4" y="299.8" width="2.5" height="5.7" stroke="#a8443e" stroke-width="0.8" fill="none"/>
<path d="M821.7 302.5 L898 302.5" stroke="#4aa84a" stroke-width="1" fill="none" shape-rendering="crispEdges"/>
<rect x="866" y="300.3" width="13.9" height="4.6" fill="#fff" stroke="#a8443e" stroke-width="0.8"/>
<text x="822" y="301.7" font-size="5.6" fill="#3a3a3a" stroke="#3a3a3a" stroke-width="0.18" textLength="23" lengthAdjust="spacingAndGlyphs">PICO_D2+</text>
<text x="886" y="301.7" font-size="5.6" fill="#3a3a3a" stroke="#3a3a3a" stroke-width="0.18" textLength="9" lengthAdjust="spacingAndGlyphs">D2+</text>
<text x="856" y="308" font-size="5.4" fill="#1f8c8a" stroke="#1f8c8a" stroke-width="0.32" textLength="9" lengthAdjust="spacingAndGlyphs">R11</text>
<text x="882" y="307.5" font-size="3" fill="#1f8c8a" stroke="#1f8c8a" stroke-width="0.28" textLength="15" lengthAdjust="spacingAndGlyphs">270R/0402</text>
<path d="M898 308.85 L908.3 308.85" stroke="#a8443e" stroke-width="0.9" fill="none"/>
<text x="899" y="308.25" font-size="4.6" fill="#a02828" stroke="#a02828" stroke-width="0.2" textLength="2.5" lengthAdjust="spacingAndGlyphs">2</text>
<rect x="908.3" y="306.15" width="2.5" height="5.7" stroke="#a8443e" stroke-width="0.8" fill="none"/>
<path d="M817 308.85 L898 308.85" stroke="#4aa84a" stroke-width="1" fill="none" shape-rendering="crispEdges"/>
<path d="M817 305.85 L812 308.85 L817 311.85Z" stroke="#a8443e" stroke-width="0.9" fill="none"/>
<text x="817.5" y="307.65" font-size="4.4" fill="#8a8a8a" stroke="#8a8a8a" stroke-width="0.12" textLength="7" lengthAdjust="spacingAndGlyphs">GND</text>
<text x="811" y="310.85" font-size="5.2" fill="#1f8c8a" stroke="#1f8c8a" stroke-width="0.32" text-anchor="end" textLength="9.6" lengthAdjust="spacingAndGlyphs">GND</text>
<path d="M898 315.2 L913.4 315.2" stroke="#a8443e" stroke-width="0.9" fill="none"/>
<text x="899" y="314.6" font-size="4.6" fill="#a02828" stroke="#a02828" stroke-width="0.2" textLength="2.5" lengthAdjust="spacingAndGlyphs">3</text>
<rect x="913.4" y="312.5" width="2.5" height="5.7" stroke="#a8443e" stroke-width="0.8" fill="none"/>
<path d="M821.7 315.2 L898 315.2" stroke="#4aa84a" stroke-width="1" fill="none" shape-rendering="crispEdges"/>
<rect x="853" y="314.2" width="13.8" height="4.6" fill="#fff" stroke="#a8443e" stroke-width="0.8"/>
<text x="822" y="314.4" font-size="5.6" fill="#3a3a3a" stroke="#3a3a3a" stroke-width="0.18" textLength="23" lengthAdjust="spacingAndGlyphs">PICO_D2-</text>
<text x="886" y="314.4" font-size="5.6" fill="#3a3a3a" stroke="#3a3a3a" stroke-width="0.18" textLength="9" lengthAdjust="spacingAndGlyphs">D2-</text>
<text x="848" y="313.7" font-size="5.4" fill="#1f8c8a" stroke="#1f8c8a" stroke-width="0.32" textLength="6" lengthAdjust="spacingAndGlyphs">R7</text>
<text x="869" y="313.2" font-size="3" fill="#1f8c8a" stroke="#1f8c8a" stroke-width="0.28" textLength="15" lengthAdjust="spacingAndGlyphs">270R/0402</text>
<path d="M898 321.55 L908.3 321.55" stroke="#a8443e" stroke-width="0.9" fill="none"/>
<text x="899" y="320.95" font-size="4.6" fill="#a02828" stroke="#a02828" stroke-width="0.2" textLength="2.5" lengthAdjust="spacingAndGlyphs">4</text>
<rect x="908.3" y="318.85" width="2.5" height="5.7" stroke="#a8443e" stroke-width="0.8" fill="none"/>
<path d="M821.7 321.55 L898 321.55" stroke="#4aa84a" stroke-width="1" fill="none" shape-rendering="crispEdges"/>
<rect x="866" y="319.35" width="13.9" height="4.6" fill="#fff" stroke="#a8443e" stroke-width="0.8"/>
<text x="822" y="320.75" font-size="5.6" fill="#3a3a3a" stroke="#3a3a3a" stroke-width="0.18" textLength="23" lengthAdjust="spacingAndGlyphs">PICO_D1+</text>
<text x="886" y="320.75" font-size="5.6" fill="#3a3a3a" stroke="#3a3a3a" stroke-width="0.18" textLength="9" lengthAdjust="spacingAndGlyphs">D1+</text>
<text x="856" y="327.05" font-size="5.4" fill="#1f8c8a" stroke="#1f8c8a" stroke-width="0.32" textLength="9" lengthAdjust="spacingAndGlyphs">R12</text>
<text x="882" y="326.55" font-size="3" fill="#1f8c8a" stroke="#1f8c8a" stroke-width="0.28" textLength="15" lengthAdjust="spacingAndGlyphs">270R/0402</text>
<path d="M898 327.9 L913.4 327.9" stroke="#a8443e" stroke-width="0.9" fill="none"/>
<text x="899" y="327.3" font-size="4.6" fill="#a02828" stroke="#a02828" stroke-width="0.2" textLength="2.5" lengthAdjust="spacingAndGlyphs">5</text>
<rect x="913.4" y="325.2" width="2.5" height="5.7" stroke="#a8443e" stroke-width="0.8" fill="none"/>
<path d="M817 327.9 L898 327.9" stroke="#4aa84a" stroke-width="1" fill="none" shape-rendering="crispEdges"/>
<path d="M817 324.9 L812 327.9 L817 330.9Z" stroke="#a8443e" stroke-width="0.9" fill="none"/>
<text x="817.5" y="326.7" font-size="4.4" fill="#8a8a8a" stroke="#8a8a8a" stroke-width="0.12" textLength="7" lengthAdjust="spacingAndGlyphs">GND</text>
<text x="811" y="329.9" font-size="5.2" fill="#1f8c8a" stroke="#1f8c8a" stroke-width="0.32" text-anchor="end" textLength="9.6" lengthAdjust="spacingAndGlyphs">GND</text>
<path d="M898 334.25 L908.3 334.25" stroke="#a8443e" stroke-width="0.9" fill="none"/>
<text x="899" y="333.65" font-size="4.6" fill="#a02828" stroke="#a02828" stroke-width="0.2" textLength="2.5" lengthAdjust="spacingAndGlyphs">6</text>
<rect x="908.3" y="331.55" width="2.5" height="5.7" stroke="#a8443e" stroke-width="0.8" fill="none"/>
<path d="M821.7 334.25 L898 334.25" stroke="#4aa84a" stroke-width="1" fill="none" shape-rendering="crispEdges"/>
<rect x="853" y="333.25" width="13.8" height="4.6" fill="#fff" stroke="#a8443e" stroke-width="0.8"/>
<text x="822" y="333.45" font-size="5.6" fill="#3a3a3a" stroke="#3a3a3a" stroke-width="0.18" textLength="23" lengthAdjust="spacingAndGlyphs">PICO_D1-</text>
<text x="886" y="333.45" font-size="5.6" fill="#3a3a3a" stroke="#3a3a3a" stroke-width="0.18" textLength="9" lengthAdjust="spacingAndGlyphs">D1-</text>
<text x="848" y="332.75" font-size="5.4" fill="#1f8c8a" stroke="#1f8c8a" stroke-width="0.32" textLength="6" lengthAdjust="spacingAndGlyphs">R8</text>
<text x="869" y="332.25" font-size="3" fill="#1f8c8a" stroke="#1f8c8a" stroke-width="0.28" textLength="15" lengthAdjust="spacingAndGlyphs">270R/0402</text>
<path d="M898 340.6 L913.4 340.6" stroke="#a8443e" stroke-width="0.9" fill="none"/>
<text x="899" y="340" font-size="4.6" fill="#a02828" stroke="#a02828" stroke-width="0.2" textLength="2.5" lengthAdjust="spacingAndGlyphs">7</text>
<rect x="913.4" y="337.9" width="2.5" height="5.7" stroke="#a8443e" stroke-width="0.8" fill="none"/>
<path d="M821.7 340.6 L898 340.6" stroke="#4aa84a" stroke-width="1" fill="none" shape-rendering="crispEdges"/>
<rect x="866" y="338.4" width="13.9" height="4.6" fill="#fff" stroke="#a8443e" stroke-width="0.8"/>
<text x="822" y="339.8" font-size="5.6" fill="#3a3a3a" stroke="#3a3a3a" stroke-width="0.18" textLength="23" lengthAdjust="spacingAndGlyphs">PICO_D0+</text>
<text x="886" y="339.8" font-size="5.6" fill="#3a3a3a" stroke="#3a3a3a" stroke-width="0.18" textLength="9" lengthAdjust="spacingAndGlyphs">D0+</text>
<text x="856" y="346.1" font-size="5.4" fill="#1f8c8a" stroke="#1f8c8a" stroke-width="0.32" textLength="9" lengthAdjust="spacingAndGlyphs">R13</text>
<text x="882" y="345.6" font-size="3" fill="#1f8c8a" stroke="#1f8c8a" stroke-width="0.28" textLength="15" lengthAdjust="spacingAndGlyphs">270R/0402</text>
<path d="M898 346.95 L908.3 346.95" stroke="#a8443e" stroke-width="0.9" fill="none"/>
<text x="899" y="346.35" font-size="4.6" fill="#a02828" stroke="#a02828" stroke-width="0.2" textLength="2.5" lengthAdjust="spacingAndGlyphs">8</text>
<rect x="908.3" y="344.25" width="2.5" height="5.7" stroke="#a8443e" stroke-width="0.8" fill="none"/>
<path d="M817 346.95 L898 346.95" stroke="#4aa84a" stroke-width="1" fill="none" shape-rendering="crispEdges"/>
<path d="M817 343.95 L812 346.95 L817 349.95Z" stroke="#a8443e" stroke-width="0.9" fill="none"/>
<text x="817.5" y="345.75" font-size="4.4" fill="#8a8a8a" stroke="#8a8a8a" stroke-width="0.12" textLength="7" lengthAdjust="spacingAndGlyphs">GND</text>
<text x="811" y="348.95" font-size="5.2" fill="#1f8c8a" stroke="#1f8c8a" stroke-width="0.32" text-anchor="end" textLength="9.6" lengthAdjust="spacingAndGlyphs">GND</text>
<path d="M898 353.3 L913.4 353.3" stroke="#a8443e" stroke-width="0.9" fill="none"/>
<text x="899" y="352.7" font-size="4.6" fill="#a02828" stroke="#a02828" stroke-width="0.2" textLength="2.5" lengthAdjust="spacingAndGlyphs">9</text>
<rect x="913.4" y="350.6" width="2.5" height="5.7" stroke="#a8443e" stroke-width="0.8" fill="none"/>
<path d="M821.7 353.3 L898 353.3" stroke="#4aa84a" stroke-width="1" fill="none" shape-rendering="crispEdges"/>
<rect x="853" y="352.3" width="13.8" height="4.6" fill="#fff" stroke="#a8443e" stroke-width="0.8"/>
<text x="822" y="352.5" font-size="5.6" fill="#3a3a3a" stroke="#3a3a3a" stroke-width="0.18" textLength="23" lengthAdjust="spacingAndGlyphs">PICO_D0-</text>
<text x="886" y="352.5" font-size="5.6" fill="#3a3a3a" stroke="#3a3a3a" stroke-width="0.18" textLength="9" lengthAdjust="spacingAndGlyphs">D0-</text>
<text x="848" y="351.8" font-size="5.4" fill="#1f8c8a" stroke="#1f8c8a" stroke-width="0.32" textLength="6" lengthAdjust="spacingAndGlyphs">R9</text>
<text x="869" y="351.3" font-size="3" fill="#1f8c8a" stroke="#1f8c8a" stroke-width="0.28" textLength="15" lengthAdjust="spacingAndGlyphs">270R/0402</text>
<path d="M898 359.65 L908.3 359.65" stroke="#a8443e" stroke-width="0.9" fill="none"/>
<text x="899" y="359.05" font-size="4.6" fill="#a02828" stroke="#a02828" stroke-width="0.2" textLength="5" lengthAdjust="spacingAndGlyphs">10</text>
<rect x="908.3" y="356.95" width="2.5" height="5.7" stroke="#a8443e" stroke-width="0.8" fill="none"/>
<path d="M821.7 359.65 L898 359.65" stroke="#4aa84a" stroke-width="1" fill="none" shape-rendering="crispEdges"/>
<rect x="866" y="357.45" width="13.9" height="4.6" fill="#fff" stroke="#a8443e" stroke-width="0.8"/>
<text x="822" y="358.85" font-size="5.6" fill="#3a3a3a" stroke="#3a3a3a" stroke-width="0.18" textLength="23" lengthAdjust="spacingAndGlyphs">PICO_CK+</text>
<text x="886" y="358.85" font-size="5.6" fill="#3a3a3a" stroke="#3a3a3a" stroke-width="0.18" textLength="9" lengthAdjust="spacingAndGlyphs">CK+</text>
<text x="856" y="365.15" font-size="5.4" fill="#1f8c8a" stroke="#1f8c8a" stroke-width="0.32" textLength="9" lengthAdjust="spacingAndGlyphs">R14</text>
<text x="882" y="364.65" font-size="3" fill="#1f8c8a" stroke="#1f8c8a" stroke-width="0.28" textLength="15" lengthAdjust="spacingAndGlyphs">270R/0402</text>
<path d="M898 366 L913.4 366" stroke="#a8443e" stroke-width="0.9" fill="none"/>
<text x="899" y="365.4" font-size="4.6" fill="#a02828" stroke="#a02828" stroke-width="0.2" textLength="5" lengthAdjust="spacingAndGlyphs">11</text>
<rect x="913.4" y="363.3" width="2.5" height="5.7" stroke="#a8443e" stroke-width="0.8" fill="none"/>
<path d="M817 366 L898 366" stroke="#4aa84a" stroke-width="1" fill="none" shape-rendering="crispEdges"/>
<path d="M817 363 L812 366 L817 369Z" stroke="#a8443e" stroke-width="0.9" fill="none"/>
<text x="817.5" y="364.8" font-size="4.4" fill="#8a8a8a" stroke="#8a8a8a" stroke-width="0.12" textLength="7" lengthAdjust="spacingAndGlyphs">GND</text>
<text x="811" y="368" font-size="5.2" fill="#1f8c8a" stroke="#1f8c8a" stroke-width="0.32" text-anchor="end" textLength="9.6" lengthAdjust="spacingAndGlyphs">GND</text>
<path d="M898 372.35 L908.3 372.35" stroke="#a8443e" stroke-width="0.9" fill="none"/>
<text x="899" y="371.75" font-size="4.6" fill="#a02828" stroke="#a02828" stroke-width="0.2" textLength="5" lengthAdjust="spacingAndGlyphs">12</text>
<rect x="908.3" y="369.65" width="2.5" height="5.7" stroke="#a8443e" stroke-width="0.8" fill="none"/>
<path d="M821.7 372.35 L898 372.35" stroke="#4aa84a" stroke-width="1" fill="none" shape-rendering="crispEdges"/>
<rect x="853" y="371.35" width="13.8" height="4.6" fill="#fff" stroke="#a8443e" stroke-width="0.8"/>
<text x="822" y="371.55" font-size="5.6" fill="#3a3a3a" stroke="#3a3a3a" stroke-width="0.18" textLength="23" lengthAdjust="spacingAndGlyphs">PICO_CK-</text>
<text x="886" y="371.55" font-size="5.6" fill="#3a3a3a" stroke="#3a3a3a" stroke-width="0.18" textLength="9" lengthAdjust="spacingAndGlyphs">CK-</text>
<text x="848" y="370.85" font-size="5.4" fill="#1f8c8a" stroke="#1f8c8a" stroke-width="0.32" textLength="6" lengthAdjust="spacingAndGlyphs">R10</text>
<text x="869" y="370.35" font-size="3" fill="#1f8c8a" stroke="#1f8c8a" stroke-width="0.28" textLength="15" lengthAdjust="spacingAndGlyphs">270R/0402</text>
<path d="M898 378.7 L913.4 378.7" stroke="#a8443e" stroke-width="0.9" fill="none"/>
<text x="899" y="378.1" font-size="4.6" fill="#a02828" stroke="#a02828" stroke-width="0.2" textLength="5" lengthAdjust="spacingAndGlyphs">13</text>
<rect x="913.4" y="376" width="2.5" height="5.7" stroke="#a8443e" stroke-width="0.8" fill="none"/>
<path d="M803 378.7 L898 378.7" stroke="#4aa84a" stroke-width="1" fill="none" shape-rendering="crispEdges"/>
<path d="M803 378.7 V373.7 M800.8 375.7 L803 372.7 L805.2 375.7" stroke="#a8443e" stroke-width="0.8" fill="none"/>
<text x="803" y="371.2" font-size="5.2" fill="#1f8c8a" stroke="#1f8c8a" stroke-width="0.32" text-anchor="middle"></text>
<text x="803" y="368.7" font-size="5.2" fill="#1f8c8a" stroke="#1f8c8a" stroke-width="0.32" text-anchor="middle" textLength="14" lengthAdjust="spacingAndGlyphs">+3.3V</text>
<rect x="824.6" y="376.5" width="13.2" height="4.5" fill="#fff" stroke="#a8443e" stroke-width="0.8"/>
<rect x="866" y="376.5" width="13.9" height="4.5" fill="#fff" stroke="#a8443e" stroke-width="0.8"/>
<text x="843" y="377.7" font-size="5.4" fill="#3a3a3a" stroke="#3a3a3a" stroke-width="0.18" textLength="18" lengthAdjust="spacingAndGlyphs">DVI_CEC</text>
<text x="808" y="384.2" font-size="5.4" fill="#1f8c8a" stroke="#1f8c8a" stroke-width="0.32" textLength="6.5" lengthAdjust="spacingAndGlyphs">R6</text>
<text x="866" y="384.2" font-size="5.4" fill="#1f8c8a" stroke="#1f8c8a" stroke-width="0.32" textLength="9" lengthAdjust="spacingAndGlyphs">R25</text>
<text x="814" y="377.7" font-size="3" fill="#1f8c8a" stroke="#1f8c8a" stroke-width="0.28" textLength="12" lengthAdjust="spacingAndGlyphs">3.3K/0402</text>
<text x="882" y="377.7" font-size="3" fill="#1f8c8a" stroke="#1f8c8a" stroke-width="0.28" textLength="15" lengthAdjust="spacingAndGlyphs">270R/0402</text>
<path d="M898 385.05 L908.3 385.05" stroke="#a8443e" stroke-width="0.9" fill="none"/>
<text x="899" y="384.45" font-size="4.6" fill="#a02828" stroke="#a02828" stroke-width="0.2" textLength="5" lengthAdjust="spacingAndGlyphs">14</text>
<rect x="908.3" y="382.35" width="2.5" height="5.7" stroke="#a8443e" stroke-width="0.8" fill="none"/>
<path d="M896.4 383.45 L899.6 386.65 M899.6 383.45 L896.4 386.65" stroke="#3333bb" stroke-width="0.8"/>
<path d="M898 391.4 L913.4 391.4" stroke="#a8443e" stroke-width="0.9" fill="none"/>
<text x="899" y="390.8" font-size="4.6" fill="#a02828" stroke="#a02828" stroke-width="0.2" textLength="5" lengthAdjust="spacingAndGlyphs">15</text>
<rect x="913.4" y="388.7" width="2.5" height="5.7" stroke="#a8443e" stroke-width="0.8" fill="none"/>
<path d="M815 391.4 L898 391.4" stroke="#4aa84a" stroke-width="1" fill="none" shape-rendering="crispEdges"/>
<rect x="840.1" y="389.1" width="13.7" height="4.7" fill="#fff" stroke="#a8443e" stroke-width="0.8"/>
<text x="862" y="390.4" font-size="5.4" fill="#3a3a3a" stroke="#3a3a3a" stroke-width="0.18" textLength="30" lengthAdjust="spacingAndGlyphs">I2C1A_SCL_5</text>
<text x="818" y="390.4" font-size="5.4" fill="#1f8c8a" stroke="#1f8c8a" stroke-width="0.32" textLength="7.5" lengthAdjust="spacingAndGlyphs">R2</text>
<text x="827" y="389.9" font-size="3" fill="#1f8c8a" stroke="#1f8c8a" stroke-width="0.28" textLength="12" lengthAdjust="spacingAndGlyphs">3.3K/0402</text>
<path d="M898 397.75 L908.3 397.75" stroke="#a8443e" stroke-width="0.9" fill="none"/>
<text x="899" y="397.15" font-size="4.6" fill="#a02828" stroke="#a02828" stroke-width="0.2" textLength="5" lengthAdjust="spacingAndGlyphs">16</text>
<rect x="908.3" y="395.05" width="2.5" height="5.7" stroke="#a8443e" stroke-width="0.8" fill="none"/>
<path d="M815 397.75 L898 397.75" stroke="#4aa84a" stroke-width="1" fill="none" shape-rendering="crispEdges"/>
<rect x="840.1" y="395.45" width="13.7" height="4.7" fill="#fff" stroke="#a8443e" stroke-width="0.8"/>
<text x="862" y="396.75" font-size="5.4" fill="#3a3a3a" stroke="#3a3a3a" stroke-width="0.18" textLength="30" lengthAdjust="spacingAndGlyphs">I2C1A_SDA_5</text>
<text x="818" y="396.75" font-size="5.4" fill="#1f8c8a" stroke="#1f8c8a" stroke-width="0.32" textLength="7.5" lengthAdjust="spacingAndGlyphs">R3</text>
<text x="827" y="396.25" font-size="3" fill="#1f8c8a" stroke="#1f8c8a" stroke-width="0.28" textLength="12" lengthAdjust="spacingAndGlyphs">3.3K/0402</text>
<path d="M898 404.1 L913.4 404.1" stroke="#a8443e" stroke-width="0.9" fill="none"/>
<text x="899" y="403.5" font-size="4.6" fill="#a02828" stroke="#a02828" stroke-width="0.2" textLength="5" lengthAdjust="spacingAndGlyphs">17</text>
<rect x="913.4" y="401.4" width="2.5" height="5.7" stroke="#a8443e" stroke-width="0.8" fill="none"/>
<path d="M889 404.1 L898 404.1" stroke="#4aa84a" stroke-width="1" fill="none" shape-rendering="crispEdges"/>
<path d="M889 401.1 L884 404.1 L889 407.1Z" stroke="#a8443e" stroke-width="0.9" fill="none"/>
<text x="889.5" y="402.9" font-size="4.4" fill="#8a8a8a" stroke="#8a8a8a" stroke-width="0.12" textLength="7" lengthAdjust="spacingAndGlyphs">GND</text>
<text x="883" y="406.1" font-size="5.2" fill="#1f8c8a" stroke="#1f8c8a" stroke-width="0.32" text-anchor="end" textLength="9.6" lengthAdjust="spacingAndGlyphs">GND</text>
<path d="M898 410.45 L908.3 410.45" stroke="#a8443e" stroke-width="0.9" fill="none"/>
<text x="899" y="409.85" font-size="4.6" fill="#a02828" stroke="#a02828" stroke-width="0.2" textLength="5" lengthAdjust="spacingAndGlyphs">18</text>
<rect x="908.3" y="407.75" width="2.5" height="5.7" stroke="#a8443e" stroke-width="0.8" fill="none"/>
<path d="M807 410.45 L898 410.45" stroke="#4aa84a" stroke-width="1" fill="none" shape-rendering="crispEdges"/>
<path d="M807 410.45 H802 M804 408.25 L801 410.45 L804 412.65" stroke="#a8443e" stroke-width="0.8" fill="none"/>
<text x="799" y="412.45" font-size="5.2" fill="#1f8c8a" stroke="#1f8c8a" stroke-width="0.32" text-anchor="end" textLength="9" lengthAdjust="spacingAndGlyphs">+5V</text>
<circle cx="815" cy="410.45" r="1.55" fill="#2a8a2a"/>
<path d="M833 408.25 A2.2 2.2 0 0 0 833 412.65Z M838.5 408.25 A2.2 2.2 0 0 1 838.5 412.65Z" fill="#a02020" stroke="#a02020" stroke-width="0.5"/>
<rect x="831" y="407.45" width="9.5" height="6" fill="#fff" opacity="0"/>
<rect x="850.2" y="407.95" width="19.6" height="5" fill="#fff" stroke="#a8443e" stroke-width="0.8"/>
<path d="M851 410.45 L869 410.45" stroke="#a8443e" stroke-width="0.6" fill="none"/>
<text x="853" y="405.45" font-size="5.4" fill="#1f8c8a" stroke="#1f8c8a" stroke-width="0.32" textLength="15" lengthAdjust="spacingAndGlyphs">FUSE1</text>
<text x="832" y="420.45" font-size="5.4" fill="#1f8c8a" stroke="#1f8c8a" stroke-width="0.32" textLength="9" lengthAdjust="spacingAndGlyphs">SJ1</text>
<text x="832" y="425.45" font-size="5.2" fill="#1f8c8a" stroke="#1f8c8a" stroke-width="0.32" textLength="11" lengthAdjust="spacingAndGlyphs">open</text>
<text x="853.5" y="417.45" font-size="3" fill="#1f8c8a" stroke="#1f8c8a" stroke-width="0.28" textLength="10" lengthAdjust="spacingAndGlyphs">F0603</text>
<path d="M898 416.8 L913.4 416.8" stroke="#a8443e" stroke-width="0.9" fill="none"/>
<text x="899" y="416.2" font-size="4.6" fill="#a02828" stroke="#a02828" stroke-width="0.2" textLength="5" lengthAdjust="spacingAndGlyphs">19</text>
<rect x="913.4" y="414.1" width="2.5" height="5.7" stroke="#a8443e" stroke-width="0.8" fill="none"/>
<path d="M896.4 415.2 L899.6 418.4 M899.6 415.2 L896.4 418.4" stroke="#3333bb" stroke-width="0.8"/>
<path d="M815 391.4 L815 410.45" stroke="#4aa84a" stroke-width="1" fill="none" shape-rendering="crispEdges"/>
<circle cx="815" cy="397.75" r="1.55" fill="#2a8a2a"/>
<rect x="820.4" y="443.6" width="10.1" height="25.9" stroke="#a8443e" stroke-width="0.8" fill="none"/>
<rect x="822.5" y="445.9" width="6" height="1.8" fill="#9a1010"/>
<path d="M830.5 446.8 L836.5 446.8" stroke="#a8443e" stroke-width="0.9" fill="none"/>
<text x="832" y="446.3" font-size="5" fill="#a8443e" stroke="#a8443e" stroke-width="0.32" textLength="2.8" lengthAdjust="spacingAndGlyphs">1</text>
<rect x="822.5" y="452.2" width="6" height="1.8" fill="#9a1010"/>
<path d="M830.5 453.1 L836.5 453.1" stroke="#a8443e" stroke-width="0.9" fill="none"/>
<text x="832" y="452.6" font-size="5" fill="#a8443e" stroke="#a8443e" stroke-width="0.32" textLength="2.8" lengthAdjust="spacingAndGlyphs">2</text>
<rect x="822.5" y="458.5" width="6" height="1.8" fill="#9a1010"/>
<path d="M830.5 459.4 L836.5 459.4" stroke="#a8443e" stroke-width="0.9" fill="none"/>
<text x="832" y="458.9" font-size="5" fill="#a8443e" stroke="#a8443e" stroke-width="0.32" textLength="2.8" lengthAdjust="spacingAndGlyphs">3</text>
<rect x="822.5" y="464.9" width="6" height="1.8" fill="#9a1010"/>
<path d="M830.5 465.8 L836.5 465.8" stroke="#a8443e" stroke-width="0.9" fill="none"/>
<text x="832" y="465.3" font-size="5" fill="#a8443e" stroke="#a8443e" stroke-width="0.32" textLength="2.8" lengthAdjust="spacingAndGlyphs">4</text>
<path d="M836.5 446.8 L878.5 446.8" stroke="#4aa84a" stroke-width="1" fill="none" shape-rendering="crispEdges"/>
<text x="841" y="445.8" font-size="4.9" fill="#3a3a3a" stroke="#3a3a3a" stroke-width="0.18" textLength="22" lengthAdjust="spacingAndGlyphs">I2C1_SCL</text>
<path d="M836.5 453.1 L878.5 453.1" stroke="#4aa84a" stroke-width="1" fill="none" shape-rendering="crispEdges"/>
<text x="841" y="452.1" font-size="4.9" fill="#3a3a3a" stroke="#3a3a3a" stroke-width="0.18" textLength="22" lengthAdjust="spacingAndGlyphs">I2C1_SDA</text>
<path d="M836.5 459.4 L862.7 459.4 L862.7 472" stroke="#4aa84a" stroke-width="1" fill="none" shape-rendering="crispEdges"/>
<path d="M836.5 465.8 L849.5 465.8 L849.5 472" stroke="#4aa84a" stroke-width="1" fill="none" shape-rendering="crispEdges"/>
<path d="M846.9 472 L849.5 476.5 L852.1 472Z" stroke="#a8443e" stroke-width="0.8" fill="none"/>
<text x="848.3" y="471.5" font-size="4.4" fill="#8a8a8a" stroke="#8a8a8a" stroke-width="0.12" textLength="7" lengthAdjust="spacingAndGlyphs" transform="rotate(-90 848.3 471.5)">GND</text>
<path d="M860.5 472.5 L862.7 477 L864.9 472.5 M862.7 472 V477" stroke="#a8443e" stroke-width="0.8" fill="none"/>
<text x="816" y="442" font-size="5.8" fill="#1f8c8a" stroke="#1f8c8a" stroke-width="0.32" textLength="15" lengthAdjust="spacingAndGlyphs">CON2</text>
<text x="802" y="474.5" font-size="5.8" fill="#1f8c8a" stroke="#1f8c8a" stroke-width="0.32" textLength="38" lengthAdjust="spacingAndGlyphs">CI0104P1VK0</text>
<text x="843" y="482.5" font-size="5.2" fill="#1f8c8a" stroke="#1f8c8a" stroke-width="0.32" textLength="10" lengthAdjust="spacingAndGlyphs">GND</text>
<text x="856" y="482.5" font-size="5.2" fill="#1f8c8a" stroke="#1f8c8a" stroke-width="0.32" textLength="14" lengthAdjust="spacingAndGlyphs">+3.3V</text>
<path d="M271.3 476 L271.3 487.5" stroke="#4aa84a" stroke-width="1" fill="none" shape-rendering="crispEdges"/>
<path d="M271.3 500.8 L271.3 519.8" stroke="#4aa84a" stroke-width="1" fill="none" shape-rendering="crispEdges"/>
<path d="M271.3 544.6 L271.3 553" stroke="#4aa84a" stroke-width="1" fill="none" shape-rendering="crispEdges"/>
<path d="M271.3 480 V475 M269.1 477 L271.3 474 L273.5 477" stroke="#a8443e" stroke-width="0.8" fill="none"/>
<text x="271.3" y="472.5" font-size="5.2" fill="#1f8c8a" stroke="#1f8c8a" stroke-width="0.32" text-anchor="middle" textLength="14" lengthAdjust="spacingAndGlyphs">+3.3V</text>
<rect x="269.2" y="487.5" width="4.3" height="13.3" fill="#fff" stroke="#a8443e" stroke-width="0.8"/>
<path d="M261.7 513.3 L290.8 513.3" stroke="#4aa84a" stroke-width="1" fill="none" shape-rendering="crispEdges"/>
<circle cx="271.3" cy="513.3" r="1.55" fill="#2a8a2a"/>
<text x="273" y="512" font-size="5.2" fill="#3a3a3a" stroke="#3a3a3a" stroke-width="0.18" textLength="17.5" lengthAdjust="spacingAndGlyphs">nRESET</text>
<text x="266.5" y="498" font-size="5.2" fill="#1f8c8a" stroke="#1f8c8a" stroke-width="0.32" textLength="9" lengthAdjust="spacingAndGlyphs" transform="rotate(-90 266.5 498)">R24</text>
<text x="277" y="502" font-size="3" fill="#1f8c8a" stroke="#1f8c8a" stroke-width="0.28" textLength="18" lengthAdjust="spacingAndGlyphs" transform="rotate(-90 277 502)">10K/5%/0402</text>
<path d="M271.3 519.8 V526.9 M271.3 538.9 V544.6 M269.5 522.5 H271.3 M269.5 541.5 H271.3 M273.2 527.3 V538 M273.2 532.4 H279 M279 529.8 V535" stroke="#a8443e" stroke-width="0.8" fill="none"/>
<circle cx="271.3" cy="527.8" r="0.95" fill="none" stroke="#a8443e" stroke-width="0.7"/><circle cx="271.3" cy="538" r="0.95" fill="none" stroke="#a8443e" stroke-width="0.7"/>
<text x="286" y="540" font-size="6" fill="#1f8c8a" stroke="#1f8c8a" stroke-width="0.32" textLength="14" lengthAdjust="spacingAndGlyphs" transform="rotate(-90 286 540)">RST1</text>
<text x="266.3" y="547.5" font-size="3.2" fill="#1f8c8a" stroke="#1f8c8a" stroke-width="0.28" textLength="29.6" lengthAdjust="spacingAndGlyphs" transform="rotate(-90 266.3 547.5)">TS8.L-6R-26X-180(R,NONE)</text>
<text x="266.5" y="553" font-size="4" fill="#8a8a8a" stroke="#8a8a8a" stroke-width="0.12" textLength="6" lengthAdjust="spacingAndGlyphs" transform="rotate(-90 266.5 553)">GND</text>
<rect x="447.2" y="500.3" width="19.2" height="38.8" stroke="#a8443e" stroke-width="0.8" fill="none"/>
<rect x="450.5" y="505.7" width="5.5" height="1.8" fill="#9a1010"/>
<path d="M438.3 506.6 L447.2 506.6" stroke="#a8443e" stroke-width="0.9" fill="none"/>
<text x="440.5" y="506.1" font-size="5" fill="#a8443e" stroke="#a8443e" stroke-width="0.32" textLength="2.8" lengthAdjust="spacingAndGlyphs">1</text>
<rect x="450.5" y="512.2" width="5.5" height="1.8" fill="#9a1010"/>
<path d="M438.3 513.1 L447.2 513.1" stroke="#a8443e" stroke-width="0.9" fill="none"/>
<text x="440.5" y="512.6" font-size="5" fill="#a8443e" stroke="#a8443e" stroke-width="0.32" textLength="2.8" lengthAdjust="spacingAndGlyphs">3</text>
<path d="M412.2 513.1 L438.3 513.1" stroke="#4aa84a" stroke-width="1" fill="none" shape-rendering="crispEdges"/>
<text x="412.2" y="512.1" font-size="5.2" fill="#3a3a3a" stroke="#3a3a3a" stroke-width="0.18" textLength="23" lengthAdjust="spacingAndGlyphs">UART1_TX</text>
<rect x="450.5" y="518.5" width="5.5" height="1.8" fill="#9a1010"/>
<path d="M438.3 519.4 L447.2 519.4" stroke="#a8443e" stroke-width="0.9" fill="none"/>
<text x="440.5" y="518.9" font-size="5" fill="#a8443e" stroke="#a8443e" stroke-width="0.32" textLength="2.8" lengthAdjust="spacingAndGlyphs">5</text>
<path d="M412.2 519.4 L438.3 519.4" stroke="#4aa84a" stroke-width="1" fill="none" shape-rendering="crispEdges"/>
<text x="415.2" y="518.4" font-size="5.2" fill="#3a3a3a" stroke="#3a3a3a" stroke-width="0.18" textLength="21" lengthAdjust="spacingAndGlyphs">I2C0_SCL</text>
<rect x="450.5" y="524.7" width="5.5" height="1.8" fill="#9a1010"/>
<path d="M438.3 525.6 L447.2 525.6" stroke="#a8443e" stroke-width="0.9" fill="none"/>
<text x="440.5" y="525.1" font-size="5" fill="#a8443e" stroke="#a8443e" stroke-width="0.32" textLength="2.8" lengthAdjust="spacingAndGlyphs">7</text>
<path d="M412.2 525.6 L438.3 525.6" stroke="#4aa84a" stroke-width="1" fill="none" shape-rendering="crispEdges"/>
<text x="412.2" y="524.6" font-size="5.2" fill="#3a3a3a" stroke="#3a3a3a" stroke-width="0.18" textLength="23" lengthAdjust="spacingAndGlyphs">SPI0_MISO</text>
<rect x="450.5" y="531" width="5.5" height="1.8" fill="#9a1010"/>
<path d="M438.3 531.9 L447.2 531.9" stroke="#a8443e" stroke-width="0.9" fill="none"/>
<text x="440.5" y="531.4" font-size="5" fill="#a8443e" stroke="#a8443e" stroke-width="0.32" textLength="2.8" lengthAdjust="spacingAndGlyphs">9</text>
<path d="M412.2 531.9 L438.3 531.9" stroke="#4aa84a" stroke-width="1" fill="none" shape-rendering="crispEdges"/>
<text x="412.2" y="530.9" font-size="5.2" fill="#3a3a3a" stroke="#3a3a3a" stroke-width="0.18" textLength="23" lengthAdjust="spacingAndGlyphs">SPI0_CLK</text>
<rect x="458" y="505.7" width="5.5" height="1.8" fill="#9a1010"/>
<path d="M466.4 506.6 L475 506.6" stroke="#a8443e" stroke-width="0.9" fill="none"/>
<text x="467.5" y="506.1" font-size="5" fill="#a8443e" stroke="#a8443e" stroke-width="0.32" textLength="2.8" lengthAdjust="spacingAndGlyphs">2</text>
<rect x="458" y="512.2" width="5.5" height="1.8" fill="#9a1010"/>
<path d="M466.4 513.1 L475 513.1" stroke="#a8443e" stroke-width="0.9" fill="none"/>
<text x="467.5" y="512.6" font-size="5" fill="#a8443e" stroke="#a8443e" stroke-width="0.32" textLength="2.8" lengthAdjust="spacingAndGlyphs">4</text>
<path d="M475 513.1 L501.6 513.1" stroke="#4aa84a" stroke-width="1" fill="none" shape-rendering="crispEdges"/>
<text x="501.6" y="512.1" font-size="5.2" fill="#3a3a3a" stroke="#3a3a3a" stroke-width="0.18" text-anchor="end" textLength="23" lengthAdjust="spacingAndGlyphs">UART1_RX</text>
<rect x="458" y="518.5" width="5.5" height="1.8" fill="#9a1010"/>
<path d="M466.4 519.4 L475 519.4" stroke="#a8443e" stroke-width="0.9" fill="none"/>
<text x="467.5" y="518.9" font-size="5" fill="#a8443e" stroke="#a8443e" stroke-width="0.32" textLength="2.8" lengthAdjust="spacingAndGlyphs">6</text>
<path d="M475 519.4 L501.6 519.4" stroke="#4aa84a" stroke-width="1" fill="none" shape-rendering="crispEdges"/>
<text x="503.1" y="518.4" font-size="5.2" fill="#3a3a3a" stroke="#3a3a3a" stroke-width="0.18" text-anchor="end" textLength="21" lengthAdjust="spacingAndGlyphs">I2C0_SDA</text>
<rect x="458" y="524.7" width="5.5" height="1.8" fill="#9a1010"/>
<path d="M466.4 525.6 L475 525.6" stroke="#a8443e" stroke-width="0.9" fill="none"/>
<text x="467.5" y="525.1" font-size="5" fill="#a8443e" stroke="#a8443e" stroke-width="0.32" textLength="2.8" lengthAdjust="spacingAndGlyphs">8</text>
<path d="M475 525.6 L501.6 525.6" stroke="#4aa84a" stroke-width="1" fill="none" shape-rendering="crispEdges"/>
<text x="501.6" y="524.6" font-size="5.2" fill="#3a3a3a" stroke="#3a3a3a" stroke-width="0.18" text-anchor="end" textLength="23" lengthAdjust="spacingAndGlyphs">SPI0_MOSI</text>
<rect x="458" y="531" width="5.5" height="1.8" fill="#9a1010"/>
<path d="M466.4 531.9 L475 531.9" stroke="#a8443e" stroke-width="0.9" fill="none"/>
<text x="467.5" y="531.4" font-size="5" fill="#a8443e" stroke="#a8443e" stroke-width="0.32" textLength="5.6" lengthAdjust="spacingAndGlyphs">10</text>
<path d="M475 531.9 L501.6 531.9" stroke="#4aa84a" stroke-width="1" fill="none" shape-rendering="crispEdges"/>
<text x="501.6" y="530.9" font-size="5.2" fill="#3a3a3a" stroke="#3a3a3a" stroke-width="0.18" text-anchor="end" textLength="23" lengthAdjust="spacingAndGlyphs">SPI0_CSn0</text>
<path d="M438.3 506.6 L424.7 506.6 L424.7 498" stroke="#4aa84a" stroke-width="1" fill="none" shape-rendering="crispEdges"/>
<path d="M424.7 500 V495 M422.5 497 L424.7 494 L426.9 497" stroke="#a8443e" stroke-width="0.8" fill="none"/>
<text x="424.7" y="492.5" font-size="5.2" fill="#1f8c8a" stroke="#1f8c8a" stroke-width="0.32" text-anchor="middle" textLength="13" lengthAdjust="spacingAndGlyphs">+3.3V</text>
<path d="M475 506.6 L489 506.6 L489 500" stroke="#4aa84a" stroke-width="1" fill="none" shape-rendering="crispEdges"/>
<path d="M486.4 500 L489 495.5 L491.6 500Z" stroke="#a8443e" stroke-width="0.8" fill="none"/>
<text x="488" y="491" font-size="5.2" fill="#1f8c8a" stroke="#1f8c8a" stroke-width="0.32" text-anchor="middle" textLength="10" lengthAdjust="spacingAndGlyphs">GND</text>
<path d="M412.2 519.4 L407 519.4" stroke="#4aa84a" stroke-width="1" fill="none" shape-rendering="crispEdges"/>
<rect x="392.2" y="517.2" width="14.8" height="4.4" fill="#fff" stroke="#a8443e" stroke-width="0.8"/>
<path d="M392.2 519.4 L386 519.4 L386 511" stroke="#4aa84a" stroke-width="1" fill="none" shape-rendering="crispEdges"/>
<path d="M386 513 V508 M383.8 510 L386 507 L388.2 510" stroke="#a8443e" stroke-width="0.8" fill="none"/>
<text x="386" y="505.5" font-size="5.2" fill="#1f8c8a" stroke="#1f8c8a" stroke-width="0.32" text-anchor="middle" textLength="14" lengthAdjust="spacingAndGlyphs">+3.3V</text>
<text x="399.5" y="527.5" font-size="5.4" fill="#1f8c8a" stroke="#1f8c8a" stroke-width="0.32" text-anchor="middle" textLength="9" lengthAdjust="spacingAndGlyphs">R27</text>
<text x="393" y="514.5" font-size="3" fill="#1f8c8a" stroke="#1f8c8a" stroke-width="0.28" textLength="11" lengthAdjust="spacingAndGlyphs">10K/0402</text>
<path d="M501.6 519.4 L507.8 519.4" stroke="#4aa84a" stroke-width="1" fill="none" shape-rendering="crispEdges"/>
<rect x="507.8" y="517.2" width="14.1" height="4.4" fill="#fff" stroke="#a8443e" stroke-width="0.8"/>
<path d="M521.9 519.4 L526 519.4 L526 511" stroke="#4aa84a" stroke-width="1" fill="none" shape-rendering="crispEdges"/>
<path d="M526 513 V508 M523.8 510 L526 507 L528.2 510" stroke="#a8443e" stroke-width="0.8" fill="none"/>
<text x="526" y="505.5" font-size="5.2" fill="#1f8c8a" stroke="#1f8c8a" stroke-width="0.32" text-anchor="middle" textLength="14" lengthAdjust="spacingAndGlyphs">+3.3V</text>
<text x="514.5" y="527.5" font-size="5.4" fill="#1f8c8a" stroke="#1f8c8a" stroke-width="0.32" text-anchor="middle" textLength="9" lengthAdjust="spacingAndGlyphs">R15</text>
<text x="508" y="514.5" font-size="3" fill="#1f8c8a" stroke="#1f8c8a" stroke-width="0.28" textLength="11" lengthAdjust="spacingAndGlyphs">10K/0402</text>
<text x="457" y="496" font-size="5.8" fill="#1f8c8a" stroke="#1f8c8a" stroke-width="0.32" text-anchor="middle" textLength="18" lengthAdjust="spacingAndGlyphs">UEXT1</text>
<text x="457" y="546" font-size="5.8" fill="#1f8c8a" stroke="#1f8c8a" stroke-width="0.32" text-anchor="middle" textLength="18" lengthAdjust="spacingAndGlyphs">BH10S</text>
<path d="M598 487.5 L598 545" stroke="#4aa84a" stroke-width="1" fill="none" shape-rendering="crispEdges"/>
<path d="M598 487.5 L612 487.5" stroke="#4aa84a" stroke-width="1" fill="none" shape-rendering="crispEdges"/>
<path d="M616 484.5 L619.5 487.5 L616 490.5 L612.5 487.5Z" stroke="#a8443e" stroke-width="0.9" fill="none"/>
<text x="621.5" y="489.5" font-size="5.2" fill="#1f8c8a" stroke="#1f8c8a" stroke-width="0.32" textLength="9.5" lengthAdjust="spacingAndGlyphs">MH4</text>
<path d="M598 500.5 L612 500.5" stroke="#4aa84a" stroke-width="1" fill="none" shape-rendering="crispEdges"/>
<path d="M616 497.5 L619.5 500.5 L616 503.5 L612.5 500.5Z" stroke="#a8443e" stroke-width="0.9" fill="none"/>
<text x="621.5" y="502.5" font-size="5.2" fill="#1f8c8a" stroke="#1f8c8a" stroke-width="0.32" textLength="9.5" lengthAdjust="spacingAndGlyphs">MH3</text>
<circle cx="598" cy="500.5" r="1.55" fill="#2a8a2a"/>
<path d="M598 513.25 L612 513.25" stroke="#4aa84a" stroke-width="1" fill="none" shape-rendering="crispEdges"/>
<path d="M616 510.25 L619.5 513.25 L616 516.25 L612.5 513.25Z" stroke="#a8443e" stroke-width="0.9" fill="none"/>
<text x="621.5" y="515.25" font-size="5.2" fill="#1f8c8a" stroke="#1f8c8a" stroke-width="0.32" textLength="9.5" lengthAdjust="spacingAndGlyphs">MH1</text>
<circle cx="598" cy="513.25" r="1.55" fill="#2a8a2a"/>
<path d="M598 526.25 L612 526.25" stroke="#4aa84a" stroke-width="1" fill="none" shape-rendering="crispEdges"/>
<path d="M616 523.25 L619.5 526.25 L616 529.25 L612.5 526.25Z" stroke="#a8443e" stroke-width="0.9" fill="none"/>
<text x="621.5" y="528.25" font-size="5.2" fill="#1f8c8a" stroke="#1f8c8a" stroke-width="0.32" textLength="9.5" lengthAdjust="spacingAndGlyphs">MH2</text>
<circle cx="598" cy="526.25" r="1.55" fill="#2a8a2a"/>
<path d="M595.4 545 L598 549.5 L600.6 545Z" stroke="#a8443e" stroke-width="0.8" fill="none"/>
<text x="596.8" y="544.5" font-size="4.4" fill="#8a8a8a" stroke="#8a8a8a" stroke-width="0.12" textLength="7" lengthAdjust="spacingAndGlyphs" transform="rotate(-90 596.8 544.5)">GND</text>
</g>
</svg>
<!-- taskbar -->
<div id="task" class="a"></div>
<svg class="a" style="left:0;top:560px" width="1024" height="16" id="tbar">
<g>
<path d="M5 4.6 L9.2 4 V7.8 H5Z M9.8 3.9 L14.2 3.3 V7.8 H9.8Z M5 8.4 H9.2 V12.1 L5 11.5Z M9.8 8.4 H14.2 V12.8 L9.8 12.2Z" fill="#f4f4f4"/>
<circle cx="29.3" cy="7.3" r="2.8" fill="none" stroke="#eee" stroke-width="1"/><path d="M27.3 9.4 L25 11.8" stroke="#eee" stroke-width="1.1"/>
<rect x="46" y="3.5" width="7.8" height="6.8" rx="0.8" fill="#8c8c8c"/><rect x="47" y="4.5" width="5.8" height="4.6" fill="#2a3a2a"/><path d="M47.5 7.5 L49 6.5 L51 7 L52.5 5.5" stroke="#6c6" stroke-width="0.7" fill="none"/><rect x="48.5" y="10.3" width="3" height="1.5" fill="#aaa"/>
<rect x="85" y="3.5" width="7.8" height="6.8" rx="0.8" fill="#8c8c8c"/><rect x="86" y="4.5" width="5.8" height="4.6" fill="#2a3a2a"/><path d="M86.5 7.5 L88 6.5 L90 7 L91.5 5.5" stroke="#6c6" stroke-width="0.7" fill="none"/><rect x="87.5" y="10.3" width="3" height="1.5" fill="#aaa"/>
<rect x="65" y="4.3" width="8.2" height="7.8" rx="1" fill="#f0f0f0"/><rect x="65" y="4.3" width="8.2" height="1.3" fill="#3a7bd5"/><rect x="67.2" y="6.6" width="1.8" height="1.8" fill="#f25022"/><rect x="69.3" y="6.6" width="1.8" height="1.8" fill="#7fba00"/><rect x="67.2" y="8.7" width="1.8" height="1.8" fill="#00a4ef"/><rect x="69.3" y="8.7" width="1.8" height="1.8" fill="#ffb900"/>
<path d="M105 10 V8 A4 4 0 0 1 113 8 V10" stroke="#1a2ad0" stroke-width="1.4" fill="none"/><rect x="104.3" y="8.5" width="1.8" height="3.2" fill="#1a2ad0"/><rect x="111.2" y="8.5" width="1.8" height="3.2" fill="#1a2ad0"/><circle cx="108.7" cy="9.5" r="2" fill="#ff5a10"/>
<path d="M125 12 V6 L129 4.2 L132 5 V12" stroke="#1fa0e0" stroke-width="1.8" fill="none"/>
<rect x="144.5" y="4.5" width="7" height="5.5" fill="#e6d070" stroke="#bbb" stroke-width="0.6"/><rect x="146.5" y="6" width="3" height="1.5" fill="#2233aa"/><rect x="143.8" y="10.2" width="8.4" height="1.6" fill="#ccc"/>
<circle cx="168" cy="8" r="4.2" fill="#dd3b2a"/><path d="M168 8 L164.4 10.1 A4.2 4.2 0 0 0 170.1 11.6Z" fill="#2a9c48"/><path d="M168 8 L170.1 11.6 A4.2 4.2 0 0 0 172.2 8 L168 8Z" fill="#f5c518"/><circle cx="168" cy="8" r="1.9" fill="#fff"/><circle cx="168" cy="8" r="1.4" fill="#3d7cf0"/>
<path d="M183.5 6 L186 4.5 L187.5 6.5 L190.8 5.5 L189.5 10 L187.5 8.5 V11.5" stroke="#3aa0d0" stroke-width="1.4" fill="none"/><path d="M186.5 5.5 V11.5" stroke="#666" stroke-width="1"/>
<rect x="202.8" y="4" width="9.3" height="8.2" fill="#f4f4f4"/><path d="M203 5 H212 V8 L210 8.5 V10 H207 V9 L205.5 9.5 V10.5 L204 10.5 V8.5 L203 8Z" fill="#111"/>
<circle cx="227" cy="8" r="4" fill="#de5833"/><circle cx="227" cy="8" r="2.6" fill="#f4f4f4" opacity="0.55"/><circle cx="227.3" cy="7" r="1" fill="#fff"/><path d="M226.5 8.5 L227.5 11" stroke="#3a8a3a" stroke-width="0.8"/>
<path d="M242.6 9 C242 6 245 4.3 248 4.8 C250 5.3 249.5 7 248.5 7.8 C247.5 8.8 249 9.8 247.8 11 C246 12.4 243 11.5 242.6 9Z" fill="#cfe3f3"/><circle cx="244.5" cy="7.2" r="0.8" fill="#e33"/><circle cx="246.5" cy="6.3" r="0.8" fill="#3a3"/><circle cx="244.5" cy="9.5" r="0.8" fill="#33e"/><path d="M250.8 4.5 L249.3 11" stroke="#f08a20" stroke-width="1.3"/>
<rect x="262" y="4" width="9.2" height="8.3" fill="#111"/><path d="M265.3 4 V10 M263.8 8.5 L265.3 10.5 L266.8 8.5" stroke="#20c8d8" stroke-width="1.4" fill="none"/><rect x="268.5" y="5" width="1.5" height="1.2" fill="#333"/><rect x="268.5" y="8" width="1.5" height="1.2" fill="#333"/>
<rect x="283" y="4" width="6" height="5" fill="#e8e8f8" stroke="#2233cc" stroke-width="0.8"/><path d="M284.3 6 H285.5 M286.8 6 H288" stroke="#2233cc" stroke-width="0.7"/><rect x="282" y="9.5" width="7" height="1.2" fill="#2233cc"/><rect x="287.5" y="10.5" width="3" height="1.5" fill="#2233cc"/>
<path d="M303.5 4.5 H310.5 V12 H302.2 Z" fill="#a8d4e4"/><path d="M310.5 4.5 V12 H303" stroke="#fff" stroke-width="0.6" fill="none"/>
<ellipse cx="325.7" cy="8" rx="3.3" ry="3.9" fill="none" stroke="#e01a2a" stroke-width="1.9"/>
<rect x="318.3" y="15" width="14.7" height="1" fill="#9ad0f0"/>
<path d="M340.8 5 H344.3 L345.3 6 H350 V11.8 H340.8Z" fill="#f0c030"/><rect x="340.8" y="6.8" width="9.2" height="5" fill="#f8d860"/><path d="M343.5 12 V9.3 H347.5 V12" stroke="#2a7ad0" stroke-width="1.2" fill="none"/>
<path d="M952.2 9.8 L955.5 6.5 L958.8 9.8" stroke="#ddd" stroke-width="0.8" fill="none"/>
<rect x="965" y="4.6" width="7.8" height="5.8" fill="none" stroke="#ddd" stroke-width="0.8"/><path d="M968.5 10.4 V12 M966.5 12.3 H970.5" stroke="#ddd" stroke-width="0.8"/><rect x="964" y="4" width="1.6" height="4" fill="#ddd"/>
<text x="978.5" y="10.4" font-size="6.6" fill="#e4e4e4" textLength="14.2" lengthAdjust="spacingAndGlyphs" font-family="Liberation Sans">18:15</text>
<path d="M1002.3 3.9 H1010.8 V10.8 H1007.5 L1006.5 12 L1005.5 10.8 H1002.3Z" fill="none" stroke="#e4e4e4" stroke-width="0.8"/>
<rect x="1020.8" y="1" width="0.6" height="15" fill="#777"/>
</g>
</svg>
</body></html>
